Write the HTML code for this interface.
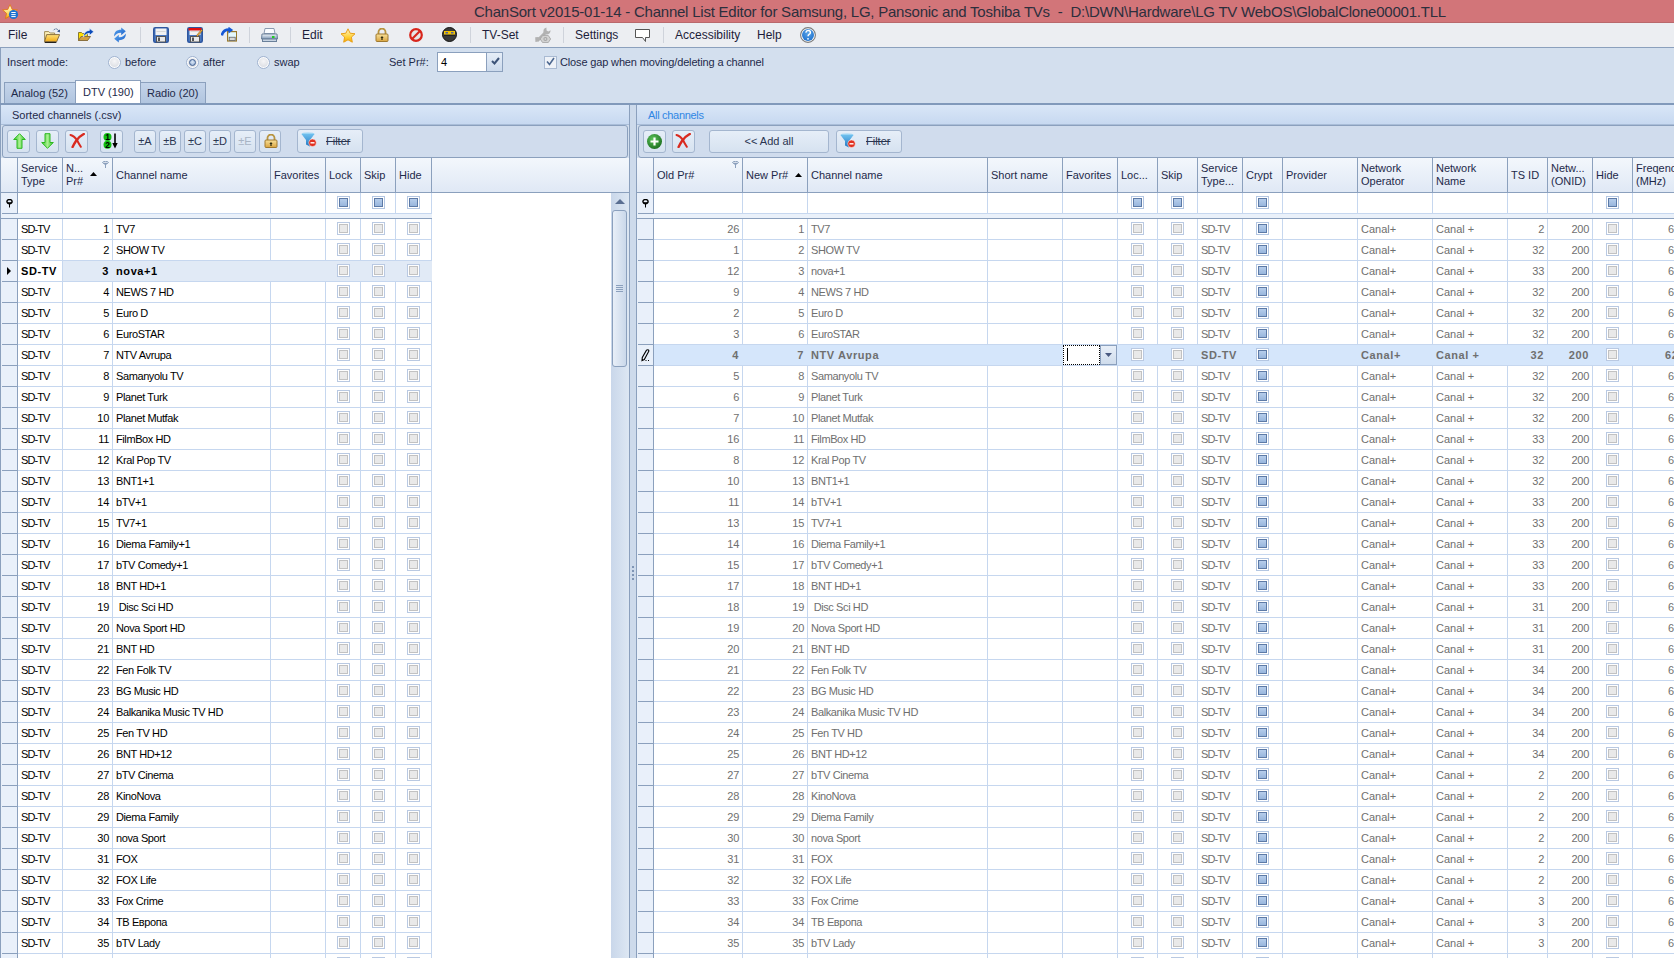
<!DOCTYPE html>
<html><head><meta charset="utf-8"><title>ChanSort</title>
<style>
html,body{margin:0;padding:0;width:1674px;height:958px;overflow:hidden;background:#d3dfee;font-family:"Liberation Sans", sans-serif;}
div,svg{position:absolute;}
div div, div svg{position:absolute;}
</style></head><body>
<div style="left:0px;top:0px;width:1674px;height:23px;background:#d27579"></div>
<div style="left:474px;top:1px;height:22px;line-height:22px;font-size:15px;letter-spacing:-0.225px;color:#2c2f3d;white-space:nowrap">ChanSort v2015-01-14 - Channel List Editor for Samsung, LG, Pansonic and Toshiba TVs&nbsp; -&nbsp; D:\DWN\Hardware\LG TV WebOS\GlobalClone00001.TLL</div>
<div style="left:0px;top:22px;width:1674px;height:1px;background:#b9686c"></div>
<svg style="left:2px;top:4px" width="17" height="16" viewBox="0 0 17 16"><defs><linearGradient id="gTs" x1="0" y1="0" x2="0" y2="1"><stop offset="0" stop-color="#fffef0"/><stop offset=".55" stop-color="#ffe070"/><stop offset="1" stop-color="#f0a000"/></linearGradient></defs>
<path d="M8 0.6 L10.2 5.4 15.4 5.9 11.5 9.4 12.6 14.6 8 12 3.4 14.6 4.5 9.4 0.6 5.9 5.8 5.4Z" fill="url(#gTs)" stroke="#e07818" stroke-width=".9"/>
<circle cx="11.5" cy="10.5" r="4.6" fill="#1c72d0"/><path d="M9.3 8.5h4.4M9.3 10.6h4.4M9.3 12.6h4.4" stroke="#fff" stroke-width="1"/></svg>
<div style="left:0px;top:23px;width:1674px;height:24px;background:#eceef2"></div>
<div style="left:8px;top:23px;height:24px;line-height:24px;font-size:12px;color:#1d1d3a;white-space:nowrap">File</div>
<div style="left:302px;top:23px;height:24px;line-height:24px;font-size:12px;color:#1d1d3a;white-space:nowrap">Edit</div>
<div style="left:482px;top:23px;height:24px;line-height:24px;font-size:12px;color:#1d1d3a;white-space:nowrap">TV-Set</div>
<div style="left:575px;top:23px;height:24px;line-height:24px;font-size:12px;color:#1d1d3a;white-space:nowrap">Settings</div>
<div style="left:675px;top:23px;height:24px;line-height:24px;font-size:12px;color:#1d1d3a;white-space:nowrap">Accessibility</div>
<div style="left:757px;top:23px;height:24px;line-height:24px;font-size:12px;color:#1d1d3a;white-space:nowrap">Help</div>
<div style="left:140px;top:27px;width:1px;height:16px;background:#cfd3db"></div>
<div style="left:249px;top:27px;width:1px;height:16px;background:#cfd3db"></div>
<div style="left:290px;top:27px;width:1px;height:16px;background:#cfd3db"></div>
<div style="left:470px;top:27px;width:1px;height:16px;background:#cfd3db"></div>
<div style="left:563px;top:27px;width:1px;height:16px;background:#cfd3db"></div>
<div style="left:663px;top:27px;width:1px;height:16px;background:#cfd3db"></div>
<div style="left:0px;top:47px;width:1674px;height:911px;background:#d3dfee"></div>
<div style="left:0px;top:47px;width:1674px;height:1px;background:#8ba0bd"></div>
<div style="left:0px;top:47px;width:1px;height:911px;background:#8ba0bd"></div>
<div style="left:7px;top:55px;line-height:14px;font-size:11px;color:#1e2a4a;white-space:nowrap;">Insert mode:</div>
<div style="left:108px;top:56px;width:13px;height:13px;box-sizing:border-box;border-radius:50%;border:1px solid #9fb2cf;background:#fbfcfd;padding:2px"><div style="left:1px;top:1px;width:9px;height:9px;border-radius:50%;background:radial-gradient(circle at 50% 35%,#f6f6f8,#d6d9df)"></div></div>
<div style="left:125px;top:55px;line-height:14px;font-size:11px;color:#1e2a4a;white-space:nowrap;">before</div>
<div style="left:186px;top:56px;width:13px;height:13px;box-sizing:border-box;border-radius:50%;border:1px solid #9fb2cf;background:#fbfcfd;padding:2px"><div style="left:1px;top:1px;width:9px;height:9px;border-radius:50%;background:radial-gradient(circle at 50% 35%,#f6f6f8,#d6d9df)"><div style="left:1px;top:1px;width:5px;height:5px;border-radius:50%;background:radial-gradient(circle at 50% 40%,#dce8f6,#8eaad2);border:1px solid #3f5e90"></div></div></div>
<div style="left:203px;top:55px;line-height:14px;font-size:11px;color:#1e2a4a;white-space:nowrap;">after</div>
<div style="left:257px;top:56px;width:13px;height:13px;box-sizing:border-box;border-radius:50%;border:1px solid #9fb2cf;background:#fbfcfd;padding:2px"><div style="left:1px;top:1px;width:9px;height:9px;border-radius:50%;background:radial-gradient(circle at 50% 35%,#f6f6f8,#d6d9df)"></div></div>
<div style="left:274px;top:55px;line-height:14px;font-size:11px;color:#1e2a4a;white-space:nowrap;">swap</div>
<div style="left:389px;top:55px;line-height:14px;font-size:11px;color:#1e2a4a;white-space:nowrap;">Set Pr#:</div>
<div style="left:437px;top:52px;width:49px;height:18px;background:#fff;border:1px solid #8ba0bd;border-right:none"></div>
<div style="left:441px;top:55px;line-height:14px;font-size:11px;color:#000;white-space:nowrap;">4</div>
<div style="left:486px;top:52px;width:15px;height:18px;background:linear-gradient(#e6eef8,#ccdaec);border:1px solid #8ba0bd"></div>
<svg style="left:491px;top:57px" width="9" height="8" viewBox="0 0 9 8"><path d="M1 4 L3.5 6.5 8 1" stroke="#3d5479" stroke-width="2" fill="none"/></svg>
<div style="left:544px;top:56px;width:11px;height:11px;background:#eef2f8;border:1px solid #a9bad2"></div>
<svg style="left:546px;top:57px" width="9" height="9" viewBox="0 0 9 9"><path d="M1 4.5 L3.5 7.5 8 1" stroke="#4d6890" stroke-width="1.6" fill="none"/></svg>
<div style="left:560px;top:55px;line-height:14px;font-size:11px;color:#1e2a4a;white-space:nowrap;letter-spacing:-0.15px">Close gap when moving/deleting a channel</div>
<div style="left:4px;top:82px;width:70px;height:21px;background:linear-gradient(#c4d4ea,#b1c5df);border:1px solid #8ba0bd;border-bottom:none;box-sizing:border-box;width:72px"></div>
<div style="left:140px;top:82px;width:66px;height:21px;background:linear-gradient(#c4d4ea,#b1c5df);border:1px solid #8ba0bd;border-bottom:none;box-sizing:border-box"></div>
<div style="left:75px;top:80px;width:66px;height:23px;background:#fff;border:1px solid #8ba0bd;border-bottom:none;box-sizing:border-box"></div>
<div style="left:11px;top:86px;line-height:14px;font-size:11px;color:#1e2a4a;white-space:nowrap;">Analog (52)</div>
<div style="left:83px;top:85px;line-height:14px;font-size:11px;color:#1e2a4a;white-space:nowrap;">DTV (190)</div>
<div style="left:147px;top:86px;line-height:14px;font-size:11px;color:#1e2a4a;white-space:nowrap;">Radio (20)</div>
<div style="left:0px;top:103px;width:1674px;height:2px;background:#8199ba"></div>
<div style="left:1px;top:105px;width:628px;height:20px;background:linear-gradient(#d9e6f7,#c6d8f0)"></div>
<div style="left:1px;top:124px;width:628px;height:1px;background:#a9bdd8"></div>
<div style="left:12px;top:108px;line-height:14px;font-size:11px;color:#1e2a4a;white-space:nowrap;">Sorted channels (.csv)</div>
<div style="left:2px;top:125px;width:626px;height:33px;background:#d0dced;border:1px solid #8ba0bd;border-radius:3px;box-sizing:border-box"></div>
<div style="left:637px;top:105px;width:1037px;height:20px;background:linear-gradient(#d9e6f7,#c6d8f0)"></div>
<div style="left:637px;top:124px;width:1037px;height:1px;background:#a9bdd8"></div>
<div style="left:648px;top:108px;line-height:14px;font-size:11px;color:#2f86e4;white-space:nowrap;letter-spacing:-0.3px">All channels</div>
<div style="left:638px;top:125px;width:1047px;height:33px;background:#d0dced;border:1px solid #8ba0bd;border-radius:3px;box-sizing:border-box"></div>
<div style="left:7px;top:130px;width:23px;height:23px;box-sizing:border-box;border:1px solid #a4b6cf;border-radius:3px;background:linear-gradient(#e6eef8,#d6e2f0)"></div>
<div style="left:36px;top:130px;width:23px;height:23px;box-sizing:border-box;border:1px solid #a4b6cf;border-radius:3px;background:linear-gradient(#e6eef8,#d6e2f0)"></div>
<div style="left:65px;top:130px;width:23px;height:23px;box-sizing:border-box;border:1px solid #a4b6cf;border-radius:3px;background:linear-gradient(#e6eef8,#d6e2f0)"></div>
<div style="left:100px;top:130px;width:23px;height:23px;box-sizing:border-box;border:1px solid #a4b6cf;border-radius:3px;background:linear-gradient(#e6eef8,#d6e2f0)"></div>
<div style="left:134px;top:130px;width:22px;height:23px;box-sizing:border-box;border:1px solid #a4b6cf;border-radius:3px;background:linear-gradient(#e6eef8,#d6e2f0)"><div style="left:0;top:0;width:20px;line-height:21px;text-align:center;font-size:11px;color:#2a3550">±A</div></div>
<div style="left:159px;top:130px;width:22px;height:23px;box-sizing:border-box;border:1px solid #a4b6cf;border-radius:3px;background:linear-gradient(#e6eef8,#d6e2f0)"><div style="left:0;top:0;width:20px;line-height:21px;text-align:center;font-size:11px;color:#2a3550">±B</div></div>
<div style="left:184px;top:130px;width:22px;height:23px;box-sizing:border-box;border:1px solid #a4b6cf;border-radius:3px;background:linear-gradient(#e6eef8,#d6e2f0)"><div style="left:0;top:0;width:20px;line-height:21px;text-align:center;font-size:11px;color:#2a3550">±C</div></div>
<div style="left:209px;top:130px;width:22px;height:23px;box-sizing:border-box;border:1px solid #a4b6cf;border-radius:3px;background:linear-gradient(#e6eef8,#d6e2f0)"><div style="left:0;top:0;width:20px;line-height:21px;text-align:center;font-size:11px;color:#2a3550">±D</div></div>
<div style="left:234px;top:130px;width:22px;height:23px;box-sizing:border-box;border:1px solid #a4b6cf;border-radius:3px;background:linear-gradient(#e6eef8,#d6e2f0)"><div style="left:0;top:0;width:20px;line-height:21px;text-align:center;font-size:11px;color:#a8b4c4">±E</div></div>
<div style="left:259px;top:130px;width:22px;height:23px;box-sizing:border-box;border:1px solid #a4b6cf;border-radius:3px;background:linear-gradient(#e6eef8,#d6e2f0)"></div>
<div style="left:297px;top:129px;width:66px;height:24px;box-sizing:border-box;border:1px solid #a4b6cf;border-radius:3px;background:linear-gradient(#e6eef8,#d6e2f0)"><div style="left:28px;top:1px;line-height:21px;font-size:11px;color:#2a3550;text-decoration:line-through">Filter</div></div>
<div style="left:643px;top:130px;width:23px;height:23px;box-sizing:border-box;border:1px solid #a4b6cf;border-radius:3px;background:linear-gradient(#e6eef8,#d6e2f0)"></div>
<div style="left:672px;top:130px;width:23px;height:23px;box-sizing:border-box;border:1px solid #a4b6cf;border-radius:3px;background:linear-gradient(#e6eef8,#d6e2f0)"></div>
<div style="left:709px;top:130px;width:120px;height:23px;box-sizing:border-box;border:1px solid #a4b6cf;border-radius:3px;background:linear-gradient(#e6eef8,#d6e2f0)"><div style="left:0;top:0;width:118px;line-height:21px;text-align:center;font-size:11px;color:#2a3550">&lt;&lt; Add all</div></div>
<div style="left:836px;top:130px;width:66px;height:23px;box-sizing:border-box;border:1px solid #a4b6cf;border-radius:3px;background:linear-gradient(#e6eef8,#d6e2f0)"><div style="left:29px;top:0;line-height:21px;font-size:11px;color:#2a3550;text-decoration:line-through">Filter</div></div>
<div style="left:629px;top:105px;width:8px;height:853px;background:#cddaeb"></div>
<div style="left:629px;top:105px;width:1px;height:853px;background:#8ba0bd"></div>
<div style="left:636px;top:105px;width:1px;height:853px;background:#8ba0bd"></div>
<div style="left:632px;top:566px;width:2px;height:2px;background:#7f95b5"></div>
<div style="left:632px;top:570px;width:2px;height:2px;background:#7f95b5"></div>
<div style="left:632px;top:574px;width:2px;height:2px;background:#7f95b5"></div>
<div style="left:632px;top:578px;width:2px;height:2px;background:#7f95b5"></div>
<div style="left:1px;top:158px;width:628px;height:35px;background:linear-gradient(#f3f7fc,#dfe8f5)"></div>
<div style="left:1px;top:192px;width:628px;height:1px;background:#8ba0bd"></div>
<div style="left:1px;top:193px;width:610px;height:765px;background:#fff"></div>
<div style="left:1px;top:193px;width:16px;height:765px;background:#e9f0fa"></div>
<div style="left:18px;top:213px;width:414px;height:1px;background:#c6d7ef"></div>
<div style="left:1px;top:214px;width:431px;height:4px;background:#eaf1fa"></div>
<div style="left:2px;top:213px;width:15px;height:1px;background:#8ba0bd"></div>
<div style="left:1px;top:218px;width:431px;height:1px;background:#8ba0bd"></div>
<div style="left:2px;top:239px;width:15px;height:1px;background:#8ba0bd"></div>
<div style="left:18px;top:239px;width:414px;height:1px;background:#c6d7ef"></div>
<div style="left:2px;top:260px;width:15px;height:1px;background:#8ba0bd"></div>
<div style="left:18px;top:260px;width:414px;height:1px;background:#c6d7ef"></div>
<div style="left:2px;top:281px;width:15px;height:1px;background:#8ba0bd"></div>
<div style="left:18px;top:281px;width:414px;height:1px;background:#c6d7ef"></div>
<div style="left:2px;top:302px;width:15px;height:1px;background:#8ba0bd"></div>
<div style="left:18px;top:302px;width:414px;height:1px;background:#c6d7ef"></div>
<div style="left:2px;top:323px;width:15px;height:1px;background:#8ba0bd"></div>
<div style="left:18px;top:323px;width:414px;height:1px;background:#c6d7ef"></div>
<div style="left:2px;top:344px;width:15px;height:1px;background:#8ba0bd"></div>
<div style="left:18px;top:344px;width:414px;height:1px;background:#c6d7ef"></div>
<div style="left:2px;top:365px;width:15px;height:1px;background:#8ba0bd"></div>
<div style="left:18px;top:365px;width:414px;height:1px;background:#c6d7ef"></div>
<div style="left:2px;top:386px;width:15px;height:1px;background:#8ba0bd"></div>
<div style="left:18px;top:386px;width:414px;height:1px;background:#c6d7ef"></div>
<div style="left:2px;top:407px;width:15px;height:1px;background:#8ba0bd"></div>
<div style="left:18px;top:407px;width:414px;height:1px;background:#c6d7ef"></div>
<div style="left:2px;top:428px;width:15px;height:1px;background:#8ba0bd"></div>
<div style="left:18px;top:428px;width:414px;height:1px;background:#c6d7ef"></div>
<div style="left:2px;top:449px;width:15px;height:1px;background:#8ba0bd"></div>
<div style="left:18px;top:449px;width:414px;height:1px;background:#c6d7ef"></div>
<div style="left:2px;top:470px;width:15px;height:1px;background:#8ba0bd"></div>
<div style="left:18px;top:470px;width:414px;height:1px;background:#c6d7ef"></div>
<div style="left:2px;top:491px;width:15px;height:1px;background:#8ba0bd"></div>
<div style="left:18px;top:491px;width:414px;height:1px;background:#c6d7ef"></div>
<div style="left:2px;top:512px;width:15px;height:1px;background:#8ba0bd"></div>
<div style="left:18px;top:512px;width:414px;height:1px;background:#c6d7ef"></div>
<div style="left:2px;top:533px;width:15px;height:1px;background:#8ba0bd"></div>
<div style="left:18px;top:533px;width:414px;height:1px;background:#c6d7ef"></div>
<div style="left:2px;top:554px;width:15px;height:1px;background:#8ba0bd"></div>
<div style="left:18px;top:554px;width:414px;height:1px;background:#c6d7ef"></div>
<div style="left:2px;top:575px;width:15px;height:1px;background:#8ba0bd"></div>
<div style="left:18px;top:575px;width:414px;height:1px;background:#c6d7ef"></div>
<div style="left:2px;top:596px;width:15px;height:1px;background:#8ba0bd"></div>
<div style="left:18px;top:596px;width:414px;height:1px;background:#c6d7ef"></div>
<div style="left:2px;top:617px;width:15px;height:1px;background:#8ba0bd"></div>
<div style="left:18px;top:617px;width:414px;height:1px;background:#c6d7ef"></div>
<div style="left:2px;top:638px;width:15px;height:1px;background:#8ba0bd"></div>
<div style="left:18px;top:638px;width:414px;height:1px;background:#c6d7ef"></div>
<div style="left:2px;top:659px;width:15px;height:1px;background:#8ba0bd"></div>
<div style="left:18px;top:659px;width:414px;height:1px;background:#c6d7ef"></div>
<div style="left:2px;top:680px;width:15px;height:1px;background:#8ba0bd"></div>
<div style="left:18px;top:680px;width:414px;height:1px;background:#c6d7ef"></div>
<div style="left:2px;top:701px;width:15px;height:1px;background:#8ba0bd"></div>
<div style="left:18px;top:701px;width:414px;height:1px;background:#c6d7ef"></div>
<div style="left:2px;top:722px;width:15px;height:1px;background:#8ba0bd"></div>
<div style="left:18px;top:722px;width:414px;height:1px;background:#c6d7ef"></div>
<div style="left:2px;top:743px;width:15px;height:1px;background:#8ba0bd"></div>
<div style="left:18px;top:743px;width:414px;height:1px;background:#c6d7ef"></div>
<div style="left:2px;top:764px;width:15px;height:1px;background:#8ba0bd"></div>
<div style="left:18px;top:764px;width:414px;height:1px;background:#c6d7ef"></div>
<div style="left:2px;top:785px;width:15px;height:1px;background:#8ba0bd"></div>
<div style="left:18px;top:785px;width:414px;height:1px;background:#c6d7ef"></div>
<div style="left:2px;top:806px;width:15px;height:1px;background:#8ba0bd"></div>
<div style="left:18px;top:806px;width:414px;height:1px;background:#c6d7ef"></div>
<div style="left:2px;top:827px;width:15px;height:1px;background:#8ba0bd"></div>
<div style="left:18px;top:827px;width:414px;height:1px;background:#c6d7ef"></div>
<div style="left:2px;top:848px;width:15px;height:1px;background:#8ba0bd"></div>
<div style="left:18px;top:848px;width:414px;height:1px;background:#c6d7ef"></div>
<div style="left:2px;top:869px;width:15px;height:1px;background:#8ba0bd"></div>
<div style="left:18px;top:869px;width:414px;height:1px;background:#c6d7ef"></div>
<div style="left:2px;top:890px;width:15px;height:1px;background:#8ba0bd"></div>
<div style="left:18px;top:890px;width:414px;height:1px;background:#c6d7ef"></div>
<div style="left:2px;top:911px;width:15px;height:1px;background:#8ba0bd"></div>
<div style="left:18px;top:911px;width:414px;height:1px;background:#c6d7ef"></div>
<div style="left:2px;top:932px;width:15px;height:1px;background:#8ba0bd"></div>
<div style="left:18px;top:932px;width:414px;height:1px;background:#c6d7ef"></div>
<div style="left:2px;top:953px;width:15px;height:1px;background:#8ba0bd"></div>
<div style="left:18px;top:953px;width:414px;height:1px;background:#c6d7ef"></div>
<div style="left:2px;top:974px;width:15px;height:1px;background:#8ba0bd"></div>
<div style="left:18px;top:974px;width:414px;height:1px;background:#c6d7ef"></div>
<div style="left:17px;top:158px;width:1px;height:34px;background:#8ba0bd"></div>
<div style="left:17px;top:193px;width:1px;height:21px;background:#8ba0bd"></div>
<div style="left:17px;top:218px;width:1px;height:740px;background:#8ba0bd"></div>
<div style="left:62px;top:158px;width:1px;height:34px;background:#8ba0bd"></div>
<div style="left:62px;top:193px;width:1px;height:20px;background:#c6d7ef"></div>
<div style="left:62px;top:219px;width:1px;height:739px;background:#c6d7ef"></div>
<div style="left:112px;top:158px;width:1px;height:34px;background:#8ba0bd"></div>
<div style="left:112px;top:193px;width:1px;height:20px;background:#c6d7ef"></div>
<div style="left:112px;top:219px;width:1px;height:739px;background:#c6d7ef"></div>
<div style="left:270px;top:158px;width:1px;height:34px;background:#8ba0bd"></div>
<div style="left:270px;top:193px;width:1px;height:20px;background:#c6d7ef"></div>
<div style="left:270px;top:219px;width:1px;height:739px;background:#c6d7ef"></div>
<div style="left:325px;top:158px;width:1px;height:34px;background:#8ba0bd"></div>
<div style="left:325px;top:193px;width:1px;height:20px;background:#c6d7ef"></div>
<div style="left:325px;top:219px;width:1px;height:739px;background:#c6d7ef"></div>
<div style="left:360px;top:158px;width:1px;height:34px;background:#8ba0bd"></div>
<div style="left:360px;top:193px;width:1px;height:20px;background:#c6d7ef"></div>
<div style="left:360px;top:219px;width:1px;height:739px;background:#c6d7ef"></div>
<div style="left:395px;top:158px;width:1px;height:34px;background:#8ba0bd"></div>
<div style="left:395px;top:193px;width:1px;height:20px;background:#c6d7ef"></div>
<div style="left:395px;top:219px;width:1px;height:739px;background:#c6d7ef"></div>
<div style="left:431px;top:158px;width:1px;height:34px;background:#8ba0bd"></div>
<div style="left:431px;top:193px;width:1px;height:20px;background:#c6d7ef"></div>
<div style="left:431px;top:219px;width:1px;height:739px;background:#c6d7ef"></div>
<div style="left:1px;top:214px;width:431px;height:4px;background:#eaf1fa"></div>
<div style="left:21px;top:162px;line-height:13px;font-size:11px;color:#1e2a4a;white-space:nowrap">Service<br>Type</div>
<div style="left:66px;top:162px;line-height:13px;font-size:11px;color:#1e2a4a;white-space:nowrap">N...<br>Pr#</div>
<div style="left:116px;top:168px;line-height:14px;font-size:11px;color:#1e2a4a;white-space:nowrap">Channel name</div>
<div style="left:274px;top:168px;line-height:14px;font-size:11px;color:#1e2a4a;white-space:nowrap">Favorites</div>
<div style="left:329px;top:168px;line-height:14px;font-size:11px;color:#1e2a4a;white-space:nowrap">Lock</div>
<div style="left:364px;top:168px;line-height:14px;font-size:11px;color:#1e2a4a;white-space:nowrap">Skip</div>
<div style="left:399px;top:168px;line-height:14px;font-size:11px;color:#1e2a4a;white-space:nowrap">Hide</div>
<svg style="left:90px;top:172px" width="7" height="4" viewBox="0 0 7 4"><path d="M3.5 0 L7 4 H0Z" fill="#000"/></svg>
<svg style="left:102px;top:161px" width="7" height="7" viewBox="0 0 7 7"><ellipse cx="3.5" cy="1.5" rx="3" ry="1.1" fill="none" stroke="#8ba0bd" stroke-width="1"/><path d="M0.7 1.8 L3 4 V7 H4 V4 L6.3 1.8" fill="#8ba0bd"/></svg>
<div style="left:63px;top:261px;width:369px;height:20px;background:#e1eaf6"></div>
<svg style="left:6px;top:267px" width="5" height="8" viewBox="0 0 5 8"><path d="M1 0 L5 4 L1 8Z" fill="#000"/></svg>
<div style="left:337px;top:196px;width:13px;height:13px;box-sizing:border-box;border:1px solid #b3c6e2;background:#fff"><div style="left:1px;top:1px;width:9px;height:9px;box-sizing:border-box;border:1px solid #5d7aa6;background:linear-gradient(#b6cdeb,#98b6dd)"></div></div>
<div style="left:372px;top:196px;width:13px;height:13px;box-sizing:border-box;border:1px solid #b3c6e2;background:#fff"><div style="left:1px;top:1px;width:9px;height:9px;box-sizing:border-box;border:1px solid #5d7aa6;background:linear-gradient(#b6cdeb,#98b6dd)"></div></div>
<div style="left:407px;top:196px;width:13px;height:13px;box-sizing:border-box;border:1px solid #b3c6e2;background:#fff"><div style="left:1px;top:1px;width:9px;height:9px;box-sizing:border-box;border:1px solid #5d7aa6;background:linear-gradient(#b6cdeb,#98b6dd)"></div></div>
<div style="left:21px;top:219px;line-height:20px;font-size:11px;color:#000;white-space:pre;letter-spacing:-0.9px;">SD-TV</div>
<div style="left:62px;top:219px;width:47px;text-align:right;line-height:20px;font-size:11px;color:#000;white-space:pre;letter-spacing:-0.3px;">1</div>
<div style="left:116px;top:219px;line-height:20px;font-size:11px;color:#000;white-space:pre;letter-spacing:-0.4px;">TV7</div>
<div style="left:337px;top:222px;width:13px;height:13px;box-sizing:border-box;border:1px solid #b9c9e2;background:#fff"><div style="left:1px;top:1px;width:9px;height:9px;box-sizing:border-box;border:1px solid #c2c2c2;background:#e9e9e9"></div></div>
<div style="left:372px;top:222px;width:13px;height:13px;box-sizing:border-box;border:1px solid #b9c9e2;background:#fff"><div style="left:1px;top:1px;width:9px;height:9px;box-sizing:border-box;border:1px solid #c2c2c2;background:#e9e9e9"></div></div>
<div style="left:407px;top:222px;width:13px;height:13px;box-sizing:border-box;border:1px solid #b9c9e2;background:#fff"><div style="left:1px;top:1px;width:9px;height:9px;box-sizing:border-box;border:1px solid #c2c2c2;background:#e9e9e9"></div></div>
<div style="left:21px;top:240px;line-height:20px;font-size:11px;color:#000;white-space:pre;letter-spacing:-0.9px;">SD-TV</div>
<div style="left:62px;top:240px;width:47px;text-align:right;line-height:20px;font-size:11px;color:#000;white-space:pre;letter-spacing:-0.3px;">2</div>
<div style="left:116px;top:240px;line-height:20px;font-size:11px;color:#000;white-space:pre;letter-spacing:-0.4px;">SHOW TV</div>
<div style="left:337px;top:243px;width:13px;height:13px;box-sizing:border-box;border:1px solid #b9c9e2;background:#fff"><div style="left:1px;top:1px;width:9px;height:9px;box-sizing:border-box;border:1px solid #c2c2c2;background:#e9e9e9"></div></div>
<div style="left:372px;top:243px;width:13px;height:13px;box-sizing:border-box;border:1px solid #b9c9e2;background:#fff"><div style="left:1px;top:1px;width:9px;height:9px;box-sizing:border-box;border:1px solid #c2c2c2;background:#e9e9e9"></div></div>
<div style="left:407px;top:243px;width:13px;height:13px;box-sizing:border-box;border:1px solid #b9c9e2;background:#fff"><div style="left:1px;top:1px;width:9px;height:9px;box-sizing:border-box;border:1px solid #c2c2c2;background:#e9e9e9"></div></div>
<div style="left:21px;top:261px;line-height:20px;font-size:11px;color:#000;white-space:pre;letter-spacing:0.6px;font-weight:bold;">SD-TV</div>
<div style="left:62px;top:261px;width:47px;text-align:right;line-height:20px;font-size:11px;color:#000;white-space:pre;letter-spacing:0.6px;font-weight:bold;">3</div>
<div style="left:116px;top:261px;line-height:20px;font-size:11px;color:#000;white-space:pre;letter-spacing:0.6px;font-weight:bold;">nova+1</div>
<div style="left:337px;top:264px;width:13px;height:13px;box-sizing:border-box;border:1px solid #b9c9e2;background:#fff"><div style="left:1px;top:1px;width:9px;height:9px;box-sizing:border-box;border:1px solid #c2c2c2;background:#e9e9e9"></div></div>
<div style="left:372px;top:264px;width:13px;height:13px;box-sizing:border-box;border:1px solid #b9c9e2;background:#fff"><div style="left:1px;top:1px;width:9px;height:9px;box-sizing:border-box;border:1px solid #c2c2c2;background:#e9e9e9"></div></div>
<div style="left:407px;top:264px;width:13px;height:13px;box-sizing:border-box;border:1px solid #b9c9e2;background:#fff"><div style="left:1px;top:1px;width:9px;height:9px;box-sizing:border-box;border:1px solid #c2c2c2;background:#e9e9e9"></div></div>
<div style="left:21px;top:282px;line-height:20px;font-size:11px;color:#000;white-space:pre;letter-spacing:-0.9px;">SD-TV</div>
<div style="left:62px;top:282px;width:47px;text-align:right;line-height:20px;font-size:11px;color:#000;white-space:pre;letter-spacing:-0.3px;">4</div>
<div style="left:116px;top:282px;line-height:20px;font-size:11px;color:#000;white-space:pre;letter-spacing:-0.4px;">NEWS 7 HD</div>
<div style="left:337px;top:285px;width:13px;height:13px;box-sizing:border-box;border:1px solid #b9c9e2;background:#fff"><div style="left:1px;top:1px;width:9px;height:9px;box-sizing:border-box;border:1px solid #c2c2c2;background:#e9e9e9"></div></div>
<div style="left:372px;top:285px;width:13px;height:13px;box-sizing:border-box;border:1px solid #b9c9e2;background:#fff"><div style="left:1px;top:1px;width:9px;height:9px;box-sizing:border-box;border:1px solid #c2c2c2;background:#e9e9e9"></div></div>
<div style="left:407px;top:285px;width:13px;height:13px;box-sizing:border-box;border:1px solid #b9c9e2;background:#fff"><div style="left:1px;top:1px;width:9px;height:9px;box-sizing:border-box;border:1px solid #c2c2c2;background:#e9e9e9"></div></div>
<div style="left:21px;top:303px;line-height:20px;font-size:11px;color:#000;white-space:pre;letter-spacing:-0.9px;">SD-TV</div>
<div style="left:62px;top:303px;width:47px;text-align:right;line-height:20px;font-size:11px;color:#000;white-space:pre;letter-spacing:-0.3px;">5</div>
<div style="left:116px;top:303px;line-height:20px;font-size:11px;color:#000;white-space:pre;letter-spacing:-0.4px;">Euro D</div>
<div style="left:337px;top:306px;width:13px;height:13px;box-sizing:border-box;border:1px solid #b9c9e2;background:#fff"><div style="left:1px;top:1px;width:9px;height:9px;box-sizing:border-box;border:1px solid #c2c2c2;background:#e9e9e9"></div></div>
<div style="left:372px;top:306px;width:13px;height:13px;box-sizing:border-box;border:1px solid #b9c9e2;background:#fff"><div style="left:1px;top:1px;width:9px;height:9px;box-sizing:border-box;border:1px solid #c2c2c2;background:#e9e9e9"></div></div>
<div style="left:407px;top:306px;width:13px;height:13px;box-sizing:border-box;border:1px solid #b9c9e2;background:#fff"><div style="left:1px;top:1px;width:9px;height:9px;box-sizing:border-box;border:1px solid #c2c2c2;background:#e9e9e9"></div></div>
<div style="left:21px;top:324px;line-height:20px;font-size:11px;color:#000;white-space:pre;letter-spacing:-0.9px;">SD-TV</div>
<div style="left:62px;top:324px;width:47px;text-align:right;line-height:20px;font-size:11px;color:#000;white-space:pre;letter-spacing:-0.3px;">6</div>
<div style="left:116px;top:324px;line-height:20px;font-size:11px;color:#000;white-space:pre;letter-spacing:-0.4px;">EuroSTAR</div>
<div style="left:337px;top:327px;width:13px;height:13px;box-sizing:border-box;border:1px solid #b9c9e2;background:#fff"><div style="left:1px;top:1px;width:9px;height:9px;box-sizing:border-box;border:1px solid #c2c2c2;background:#e9e9e9"></div></div>
<div style="left:372px;top:327px;width:13px;height:13px;box-sizing:border-box;border:1px solid #b9c9e2;background:#fff"><div style="left:1px;top:1px;width:9px;height:9px;box-sizing:border-box;border:1px solid #c2c2c2;background:#e9e9e9"></div></div>
<div style="left:407px;top:327px;width:13px;height:13px;box-sizing:border-box;border:1px solid #b9c9e2;background:#fff"><div style="left:1px;top:1px;width:9px;height:9px;box-sizing:border-box;border:1px solid #c2c2c2;background:#e9e9e9"></div></div>
<div style="left:21px;top:345px;line-height:20px;font-size:11px;color:#000;white-space:pre;letter-spacing:-0.9px;">SD-TV</div>
<div style="left:62px;top:345px;width:47px;text-align:right;line-height:20px;font-size:11px;color:#000;white-space:pre;letter-spacing:-0.3px;">7</div>
<div style="left:116px;top:345px;line-height:20px;font-size:11px;color:#000;white-space:pre;letter-spacing:-0.4px;">NTV Avrupa</div>
<div style="left:337px;top:348px;width:13px;height:13px;box-sizing:border-box;border:1px solid #b9c9e2;background:#fff"><div style="left:1px;top:1px;width:9px;height:9px;box-sizing:border-box;border:1px solid #c2c2c2;background:#e9e9e9"></div></div>
<div style="left:372px;top:348px;width:13px;height:13px;box-sizing:border-box;border:1px solid #b9c9e2;background:#fff"><div style="left:1px;top:1px;width:9px;height:9px;box-sizing:border-box;border:1px solid #c2c2c2;background:#e9e9e9"></div></div>
<div style="left:407px;top:348px;width:13px;height:13px;box-sizing:border-box;border:1px solid #b9c9e2;background:#fff"><div style="left:1px;top:1px;width:9px;height:9px;box-sizing:border-box;border:1px solid #c2c2c2;background:#e9e9e9"></div></div>
<div style="left:21px;top:366px;line-height:20px;font-size:11px;color:#000;white-space:pre;letter-spacing:-0.9px;">SD-TV</div>
<div style="left:62px;top:366px;width:47px;text-align:right;line-height:20px;font-size:11px;color:#000;white-space:pre;letter-spacing:-0.3px;">8</div>
<div style="left:116px;top:366px;line-height:20px;font-size:11px;color:#000;white-space:pre;letter-spacing:-0.4px;">Samanyolu TV</div>
<div style="left:337px;top:369px;width:13px;height:13px;box-sizing:border-box;border:1px solid #b9c9e2;background:#fff"><div style="left:1px;top:1px;width:9px;height:9px;box-sizing:border-box;border:1px solid #c2c2c2;background:#e9e9e9"></div></div>
<div style="left:372px;top:369px;width:13px;height:13px;box-sizing:border-box;border:1px solid #b9c9e2;background:#fff"><div style="left:1px;top:1px;width:9px;height:9px;box-sizing:border-box;border:1px solid #c2c2c2;background:#e9e9e9"></div></div>
<div style="left:407px;top:369px;width:13px;height:13px;box-sizing:border-box;border:1px solid #b9c9e2;background:#fff"><div style="left:1px;top:1px;width:9px;height:9px;box-sizing:border-box;border:1px solid #c2c2c2;background:#e9e9e9"></div></div>
<div style="left:21px;top:387px;line-height:20px;font-size:11px;color:#000;white-space:pre;letter-spacing:-0.9px;">SD-TV</div>
<div style="left:62px;top:387px;width:47px;text-align:right;line-height:20px;font-size:11px;color:#000;white-space:pre;letter-spacing:-0.3px;">9</div>
<div style="left:116px;top:387px;line-height:20px;font-size:11px;color:#000;white-space:pre;letter-spacing:-0.4px;">Planet Turk</div>
<div style="left:337px;top:390px;width:13px;height:13px;box-sizing:border-box;border:1px solid #b9c9e2;background:#fff"><div style="left:1px;top:1px;width:9px;height:9px;box-sizing:border-box;border:1px solid #c2c2c2;background:#e9e9e9"></div></div>
<div style="left:372px;top:390px;width:13px;height:13px;box-sizing:border-box;border:1px solid #b9c9e2;background:#fff"><div style="left:1px;top:1px;width:9px;height:9px;box-sizing:border-box;border:1px solid #c2c2c2;background:#e9e9e9"></div></div>
<div style="left:407px;top:390px;width:13px;height:13px;box-sizing:border-box;border:1px solid #b9c9e2;background:#fff"><div style="left:1px;top:1px;width:9px;height:9px;box-sizing:border-box;border:1px solid #c2c2c2;background:#e9e9e9"></div></div>
<div style="left:21px;top:408px;line-height:20px;font-size:11px;color:#000;white-space:pre;letter-spacing:-0.9px;">SD-TV</div>
<div style="left:62px;top:408px;width:47px;text-align:right;line-height:20px;font-size:11px;color:#000;white-space:pre;letter-spacing:-0.3px;">10</div>
<div style="left:116px;top:408px;line-height:20px;font-size:11px;color:#000;white-space:pre;letter-spacing:-0.4px;">Planet Mutfak</div>
<div style="left:337px;top:411px;width:13px;height:13px;box-sizing:border-box;border:1px solid #b9c9e2;background:#fff"><div style="left:1px;top:1px;width:9px;height:9px;box-sizing:border-box;border:1px solid #c2c2c2;background:#e9e9e9"></div></div>
<div style="left:372px;top:411px;width:13px;height:13px;box-sizing:border-box;border:1px solid #b9c9e2;background:#fff"><div style="left:1px;top:1px;width:9px;height:9px;box-sizing:border-box;border:1px solid #c2c2c2;background:#e9e9e9"></div></div>
<div style="left:407px;top:411px;width:13px;height:13px;box-sizing:border-box;border:1px solid #b9c9e2;background:#fff"><div style="left:1px;top:1px;width:9px;height:9px;box-sizing:border-box;border:1px solid #c2c2c2;background:#e9e9e9"></div></div>
<div style="left:21px;top:429px;line-height:20px;font-size:11px;color:#000;white-space:pre;letter-spacing:-0.9px;">SD-TV</div>
<div style="left:62px;top:429px;width:47px;text-align:right;line-height:20px;font-size:11px;color:#000;white-space:pre;letter-spacing:-0.3px;">11</div>
<div style="left:116px;top:429px;line-height:20px;font-size:11px;color:#000;white-space:pre;letter-spacing:-0.4px;">FilmBox HD</div>
<div style="left:337px;top:432px;width:13px;height:13px;box-sizing:border-box;border:1px solid #b9c9e2;background:#fff"><div style="left:1px;top:1px;width:9px;height:9px;box-sizing:border-box;border:1px solid #c2c2c2;background:#e9e9e9"></div></div>
<div style="left:372px;top:432px;width:13px;height:13px;box-sizing:border-box;border:1px solid #b9c9e2;background:#fff"><div style="left:1px;top:1px;width:9px;height:9px;box-sizing:border-box;border:1px solid #c2c2c2;background:#e9e9e9"></div></div>
<div style="left:407px;top:432px;width:13px;height:13px;box-sizing:border-box;border:1px solid #b9c9e2;background:#fff"><div style="left:1px;top:1px;width:9px;height:9px;box-sizing:border-box;border:1px solid #c2c2c2;background:#e9e9e9"></div></div>
<div style="left:21px;top:450px;line-height:20px;font-size:11px;color:#000;white-space:pre;letter-spacing:-0.9px;">SD-TV</div>
<div style="left:62px;top:450px;width:47px;text-align:right;line-height:20px;font-size:11px;color:#000;white-space:pre;letter-spacing:-0.3px;">12</div>
<div style="left:116px;top:450px;line-height:20px;font-size:11px;color:#000;white-space:pre;letter-spacing:-0.4px;">Kral Pop TV</div>
<div style="left:337px;top:453px;width:13px;height:13px;box-sizing:border-box;border:1px solid #b9c9e2;background:#fff"><div style="left:1px;top:1px;width:9px;height:9px;box-sizing:border-box;border:1px solid #c2c2c2;background:#e9e9e9"></div></div>
<div style="left:372px;top:453px;width:13px;height:13px;box-sizing:border-box;border:1px solid #b9c9e2;background:#fff"><div style="left:1px;top:1px;width:9px;height:9px;box-sizing:border-box;border:1px solid #c2c2c2;background:#e9e9e9"></div></div>
<div style="left:407px;top:453px;width:13px;height:13px;box-sizing:border-box;border:1px solid #b9c9e2;background:#fff"><div style="left:1px;top:1px;width:9px;height:9px;box-sizing:border-box;border:1px solid #c2c2c2;background:#e9e9e9"></div></div>
<div style="left:21px;top:471px;line-height:20px;font-size:11px;color:#000;white-space:pre;letter-spacing:-0.9px;">SD-TV</div>
<div style="left:62px;top:471px;width:47px;text-align:right;line-height:20px;font-size:11px;color:#000;white-space:pre;letter-spacing:-0.3px;">13</div>
<div style="left:116px;top:471px;line-height:20px;font-size:11px;color:#000;white-space:pre;letter-spacing:-0.4px;">BNT1+1</div>
<div style="left:337px;top:474px;width:13px;height:13px;box-sizing:border-box;border:1px solid #b9c9e2;background:#fff"><div style="left:1px;top:1px;width:9px;height:9px;box-sizing:border-box;border:1px solid #c2c2c2;background:#e9e9e9"></div></div>
<div style="left:372px;top:474px;width:13px;height:13px;box-sizing:border-box;border:1px solid #b9c9e2;background:#fff"><div style="left:1px;top:1px;width:9px;height:9px;box-sizing:border-box;border:1px solid #c2c2c2;background:#e9e9e9"></div></div>
<div style="left:407px;top:474px;width:13px;height:13px;box-sizing:border-box;border:1px solid #b9c9e2;background:#fff"><div style="left:1px;top:1px;width:9px;height:9px;box-sizing:border-box;border:1px solid #c2c2c2;background:#e9e9e9"></div></div>
<div style="left:21px;top:492px;line-height:20px;font-size:11px;color:#000;white-space:pre;letter-spacing:-0.9px;">SD-TV</div>
<div style="left:62px;top:492px;width:47px;text-align:right;line-height:20px;font-size:11px;color:#000;white-space:pre;letter-spacing:-0.3px;">14</div>
<div style="left:116px;top:492px;line-height:20px;font-size:11px;color:#000;white-space:pre;letter-spacing:-0.4px;">bTV+1</div>
<div style="left:337px;top:495px;width:13px;height:13px;box-sizing:border-box;border:1px solid #b9c9e2;background:#fff"><div style="left:1px;top:1px;width:9px;height:9px;box-sizing:border-box;border:1px solid #c2c2c2;background:#e9e9e9"></div></div>
<div style="left:372px;top:495px;width:13px;height:13px;box-sizing:border-box;border:1px solid #b9c9e2;background:#fff"><div style="left:1px;top:1px;width:9px;height:9px;box-sizing:border-box;border:1px solid #c2c2c2;background:#e9e9e9"></div></div>
<div style="left:407px;top:495px;width:13px;height:13px;box-sizing:border-box;border:1px solid #b9c9e2;background:#fff"><div style="left:1px;top:1px;width:9px;height:9px;box-sizing:border-box;border:1px solid #c2c2c2;background:#e9e9e9"></div></div>
<div style="left:21px;top:513px;line-height:20px;font-size:11px;color:#000;white-space:pre;letter-spacing:-0.9px;">SD-TV</div>
<div style="left:62px;top:513px;width:47px;text-align:right;line-height:20px;font-size:11px;color:#000;white-space:pre;letter-spacing:-0.3px;">15</div>
<div style="left:116px;top:513px;line-height:20px;font-size:11px;color:#000;white-space:pre;letter-spacing:-0.4px;">TV7+1</div>
<div style="left:337px;top:516px;width:13px;height:13px;box-sizing:border-box;border:1px solid #b9c9e2;background:#fff"><div style="left:1px;top:1px;width:9px;height:9px;box-sizing:border-box;border:1px solid #c2c2c2;background:#e9e9e9"></div></div>
<div style="left:372px;top:516px;width:13px;height:13px;box-sizing:border-box;border:1px solid #b9c9e2;background:#fff"><div style="left:1px;top:1px;width:9px;height:9px;box-sizing:border-box;border:1px solid #c2c2c2;background:#e9e9e9"></div></div>
<div style="left:407px;top:516px;width:13px;height:13px;box-sizing:border-box;border:1px solid #b9c9e2;background:#fff"><div style="left:1px;top:1px;width:9px;height:9px;box-sizing:border-box;border:1px solid #c2c2c2;background:#e9e9e9"></div></div>
<div style="left:21px;top:534px;line-height:20px;font-size:11px;color:#000;white-space:pre;letter-spacing:-0.9px;">SD-TV</div>
<div style="left:62px;top:534px;width:47px;text-align:right;line-height:20px;font-size:11px;color:#000;white-space:pre;letter-spacing:-0.3px;">16</div>
<div style="left:116px;top:534px;line-height:20px;font-size:11px;color:#000;white-space:pre;letter-spacing:-0.4px;">Diema Family+1</div>
<div style="left:337px;top:537px;width:13px;height:13px;box-sizing:border-box;border:1px solid #b9c9e2;background:#fff"><div style="left:1px;top:1px;width:9px;height:9px;box-sizing:border-box;border:1px solid #c2c2c2;background:#e9e9e9"></div></div>
<div style="left:372px;top:537px;width:13px;height:13px;box-sizing:border-box;border:1px solid #b9c9e2;background:#fff"><div style="left:1px;top:1px;width:9px;height:9px;box-sizing:border-box;border:1px solid #c2c2c2;background:#e9e9e9"></div></div>
<div style="left:407px;top:537px;width:13px;height:13px;box-sizing:border-box;border:1px solid #b9c9e2;background:#fff"><div style="left:1px;top:1px;width:9px;height:9px;box-sizing:border-box;border:1px solid #c2c2c2;background:#e9e9e9"></div></div>
<div style="left:21px;top:555px;line-height:20px;font-size:11px;color:#000;white-space:pre;letter-spacing:-0.9px;">SD-TV</div>
<div style="left:62px;top:555px;width:47px;text-align:right;line-height:20px;font-size:11px;color:#000;white-space:pre;letter-spacing:-0.3px;">17</div>
<div style="left:116px;top:555px;line-height:20px;font-size:11px;color:#000;white-space:pre;letter-spacing:-0.4px;">bTV Comedy+1</div>
<div style="left:337px;top:558px;width:13px;height:13px;box-sizing:border-box;border:1px solid #b9c9e2;background:#fff"><div style="left:1px;top:1px;width:9px;height:9px;box-sizing:border-box;border:1px solid #c2c2c2;background:#e9e9e9"></div></div>
<div style="left:372px;top:558px;width:13px;height:13px;box-sizing:border-box;border:1px solid #b9c9e2;background:#fff"><div style="left:1px;top:1px;width:9px;height:9px;box-sizing:border-box;border:1px solid #c2c2c2;background:#e9e9e9"></div></div>
<div style="left:407px;top:558px;width:13px;height:13px;box-sizing:border-box;border:1px solid #b9c9e2;background:#fff"><div style="left:1px;top:1px;width:9px;height:9px;box-sizing:border-box;border:1px solid #c2c2c2;background:#e9e9e9"></div></div>
<div style="left:21px;top:576px;line-height:20px;font-size:11px;color:#000;white-space:pre;letter-spacing:-0.9px;">SD-TV</div>
<div style="left:62px;top:576px;width:47px;text-align:right;line-height:20px;font-size:11px;color:#000;white-space:pre;letter-spacing:-0.3px;">18</div>
<div style="left:116px;top:576px;line-height:20px;font-size:11px;color:#000;white-space:pre;letter-spacing:-0.4px;">BNT HD+1</div>
<div style="left:337px;top:579px;width:13px;height:13px;box-sizing:border-box;border:1px solid #b9c9e2;background:#fff"><div style="left:1px;top:1px;width:9px;height:9px;box-sizing:border-box;border:1px solid #c2c2c2;background:#e9e9e9"></div></div>
<div style="left:372px;top:579px;width:13px;height:13px;box-sizing:border-box;border:1px solid #b9c9e2;background:#fff"><div style="left:1px;top:1px;width:9px;height:9px;box-sizing:border-box;border:1px solid #c2c2c2;background:#e9e9e9"></div></div>
<div style="left:407px;top:579px;width:13px;height:13px;box-sizing:border-box;border:1px solid #b9c9e2;background:#fff"><div style="left:1px;top:1px;width:9px;height:9px;box-sizing:border-box;border:1px solid #c2c2c2;background:#e9e9e9"></div></div>
<div style="left:21px;top:597px;line-height:20px;font-size:11px;color:#000;white-space:pre;letter-spacing:-0.9px;">SD-TV</div>
<div style="left:62px;top:597px;width:47px;text-align:right;line-height:20px;font-size:11px;color:#000;white-space:pre;letter-spacing:-0.3px;">19</div>
<div style="left:116px;top:597px;line-height:20px;font-size:11px;color:#000;white-space:pre;letter-spacing:-0.4px;"> Disc Sci HD</div>
<div style="left:337px;top:600px;width:13px;height:13px;box-sizing:border-box;border:1px solid #b9c9e2;background:#fff"><div style="left:1px;top:1px;width:9px;height:9px;box-sizing:border-box;border:1px solid #c2c2c2;background:#e9e9e9"></div></div>
<div style="left:372px;top:600px;width:13px;height:13px;box-sizing:border-box;border:1px solid #b9c9e2;background:#fff"><div style="left:1px;top:1px;width:9px;height:9px;box-sizing:border-box;border:1px solid #c2c2c2;background:#e9e9e9"></div></div>
<div style="left:407px;top:600px;width:13px;height:13px;box-sizing:border-box;border:1px solid #b9c9e2;background:#fff"><div style="left:1px;top:1px;width:9px;height:9px;box-sizing:border-box;border:1px solid #c2c2c2;background:#e9e9e9"></div></div>
<div style="left:21px;top:618px;line-height:20px;font-size:11px;color:#000;white-space:pre;letter-spacing:-0.9px;">SD-TV</div>
<div style="left:62px;top:618px;width:47px;text-align:right;line-height:20px;font-size:11px;color:#000;white-space:pre;letter-spacing:-0.3px;">20</div>
<div style="left:116px;top:618px;line-height:20px;font-size:11px;color:#000;white-space:pre;letter-spacing:-0.4px;">Nova Sport HD</div>
<div style="left:337px;top:621px;width:13px;height:13px;box-sizing:border-box;border:1px solid #b9c9e2;background:#fff"><div style="left:1px;top:1px;width:9px;height:9px;box-sizing:border-box;border:1px solid #c2c2c2;background:#e9e9e9"></div></div>
<div style="left:372px;top:621px;width:13px;height:13px;box-sizing:border-box;border:1px solid #b9c9e2;background:#fff"><div style="left:1px;top:1px;width:9px;height:9px;box-sizing:border-box;border:1px solid #c2c2c2;background:#e9e9e9"></div></div>
<div style="left:407px;top:621px;width:13px;height:13px;box-sizing:border-box;border:1px solid #b9c9e2;background:#fff"><div style="left:1px;top:1px;width:9px;height:9px;box-sizing:border-box;border:1px solid #c2c2c2;background:#e9e9e9"></div></div>
<div style="left:21px;top:639px;line-height:20px;font-size:11px;color:#000;white-space:pre;letter-spacing:-0.9px;">SD-TV</div>
<div style="left:62px;top:639px;width:47px;text-align:right;line-height:20px;font-size:11px;color:#000;white-space:pre;letter-spacing:-0.3px;">21</div>
<div style="left:116px;top:639px;line-height:20px;font-size:11px;color:#000;white-space:pre;letter-spacing:-0.4px;">BNT HD</div>
<div style="left:337px;top:642px;width:13px;height:13px;box-sizing:border-box;border:1px solid #b9c9e2;background:#fff"><div style="left:1px;top:1px;width:9px;height:9px;box-sizing:border-box;border:1px solid #c2c2c2;background:#e9e9e9"></div></div>
<div style="left:372px;top:642px;width:13px;height:13px;box-sizing:border-box;border:1px solid #b9c9e2;background:#fff"><div style="left:1px;top:1px;width:9px;height:9px;box-sizing:border-box;border:1px solid #c2c2c2;background:#e9e9e9"></div></div>
<div style="left:407px;top:642px;width:13px;height:13px;box-sizing:border-box;border:1px solid #b9c9e2;background:#fff"><div style="left:1px;top:1px;width:9px;height:9px;box-sizing:border-box;border:1px solid #c2c2c2;background:#e9e9e9"></div></div>
<div style="left:21px;top:660px;line-height:20px;font-size:11px;color:#000;white-space:pre;letter-spacing:-0.9px;">SD-TV</div>
<div style="left:62px;top:660px;width:47px;text-align:right;line-height:20px;font-size:11px;color:#000;white-space:pre;letter-spacing:-0.3px;">22</div>
<div style="left:116px;top:660px;line-height:20px;font-size:11px;color:#000;white-space:pre;letter-spacing:-0.4px;">Fen Folk TV</div>
<div style="left:337px;top:663px;width:13px;height:13px;box-sizing:border-box;border:1px solid #b9c9e2;background:#fff"><div style="left:1px;top:1px;width:9px;height:9px;box-sizing:border-box;border:1px solid #c2c2c2;background:#e9e9e9"></div></div>
<div style="left:372px;top:663px;width:13px;height:13px;box-sizing:border-box;border:1px solid #b9c9e2;background:#fff"><div style="left:1px;top:1px;width:9px;height:9px;box-sizing:border-box;border:1px solid #c2c2c2;background:#e9e9e9"></div></div>
<div style="left:407px;top:663px;width:13px;height:13px;box-sizing:border-box;border:1px solid #b9c9e2;background:#fff"><div style="left:1px;top:1px;width:9px;height:9px;box-sizing:border-box;border:1px solid #c2c2c2;background:#e9e9e9"></div></div>
<div style="left:21px;top:681px;line-height:20px;font-size:11px;color:#000;white-space:pre;letter-spacing:-0.9px;">SD-TV</div>
<div style="left:62px;top:681px;width:47px;text-align:right;line-height:20px;font-size:11px;color:#000;white-space:pre;letter-spacing:-0.3px;">23</div>
<div style="left:116px;top:681px;line-height:20px;font-size:11px;color:#000;white-space:pre;letter-spacing:-0.4px;">BG Music HD</div>
<div style="left:337px;top:684px;width:13px;height:13px;box-sizing:border-box;border:1px solid #b9c9e2;background:#fff"><div style="left:1px;top:1px;width:9px;height:9px;box-sizing:border-box;border:1px solid #c2c2c2;background:#e9e9e9"></div></div>
<div style="left:372px;top:684px;width:13px;height:13px;box-sizing:border-box;border:1px solid #b9c9e2;background:#fff"><div style="left:1px;top:1px;width:9px;height:9px;box-sizing:border-box;border:1px solid #c2c2c2;background:#e9e9e9"></div></div>
<div style="left:407px;top:684px;width:13px;height:13px;box-sizing:border-box;border:1px solid #b9c9e2;background:#fff"><div style="left:1px;top:1px;width:9px;height:9px;box-sizing:border-box;border:1px solid #c2c2c2;background:#e9e9e9"></div></div>
<div style="left:21px;top:702px;line-height:20px;font-size:11px;color:#000;white-space:pre;letter-spacing:-0.9px;">SD-TV</div>
<div style="left:62px;top:702px;width:47px;text-align:right;line-height:20px;font-size:11px;color:#000;white-space:pre;letter-spacing:-0.3px;">24</div>
<div style="left:116px;top:702px;line-height:20px;font-size:11px;color:#000;white-space:pre;letter-spacing:-0.4px;">Balkanika Music TV HD</div>
<div style="left:337px;top:705px;width:13px;height:13px;box-sizing:border-box;border:1px solid #b9c9e2;background:#fff"><div style="left:1px;top:1px;width:9px;height:9px;box-sizing:border-box;border:1px solid #c2c2c2;background:#e9e9e9"></div></div>
<div style="left:372px;top:705px;width:13px;height:13px;box-sizing:border-box;border:1px solid #b9c9e2;background:#fff"><div style="left:1px;top:1px;width:9px;height:9px;box-sizing:border-box;border:1px solid #c2c2c2;background:#e9e9e9"></div></div>
<div style="left:407px;top:705px;width:13px;height:13px;box-sizing:border-box;border:1px solid #b9c9e2;background:#fff"><div style="left:1px;top:1px;width:9px;height:9px;box-sizing:border-box;border:1px solid #c2c2c2;background:#e9e9e9"></div></div>
<div style="left:21px;top:723px;line-height:20px;font-size:11px;color:#000;white-space:pre;letter-spacing:-0.9px;">SD-TV</div>
<div style="left:62px;top:723px;width:47px;text-align:right;line-height:20px;font-size:11px;color:#000;white-space:pre;letter-spacing:-0.3px;">25</div>
<div style="left:116px;top:723px;line-height:20px;font-size:11px;color:#000;white-space:pre;letter-spacing:-0.4px;">Fen TV HD</div>
<div style="left:337px;top:726px;width:13px;height:13px;box-sizing:border-box;border:1px solid #b9c9e2;background:#fff"><div style="left:1px;top:1px;width:9px;height:9px;box-sizing:border-box;border:1px solid #c2c2c2;background:#e9e9e9"></div></div>
<div style="left:372px;top:726px;width:13px;height:13px;box-sizing:border-box;border:1px solid #b9c9e2;background:#fff"><div style="left:1px;top:1px;width:9px;height:9px;box-sizing:border-box;border:1px solid #c2c2c2;background:#e9e9e9"></div></div>
<div style="left:407px;top:726px;width:13px;height:13px;box-sizing:border-box;border:1px solid #b9c9e2;background:#fff"><div style="left:1px;top:1px;width:9px;height:9px;box-sizing:border-box;border:1px solid #c2c2c2;background:#e9e9e9"></div></div>
<div style="left:21px;top:744px;line-height:20px;font-size:11px;color:#000;white-space:pre;letter-spacing:-0.9px;">SD-TV</div>
<div style="left:62px;top:744px;width:47px;text-align:right;line-height:20px;font-size:11px;color:#000;white-space:pre;letter-spacing:-0.3px;">26</div>
<div style="left:116px;top:744px;line-height:20px;font-size:11px;color:#000;white-space:pre;letter-spacing:-0.4px;">BNT HD+12</div>
<div style="left:337px;top:747px;width:13px;height:13px;box-sizing:border-box;border:1px solid #b9c9e2;background:#fff"><div style="left:1px;top:1px;width:9px;height:9px;box-sizing:border-box;border:1px solid #c2c2c2;background:#e9e9e9"></div></div>
<div style="left:372px;top:747px;width:13px;height:13px;box-sizing:border-box;border:1px solid #b9c9e2;background:#fff"><div style="left:1px;top:1px;width:9px;height:9px;box-sizing:border-box;border:1px solid #c2c2c2;background:#e9e9e9"></div></div>
<div style="left:407px;top:747px;width:13px;height:13px;box-sizing:border-box;border:1px solid #b9c9e2;background:#fff"><div style="left:1px;top:1px;width:9px;height:9px;box-sizing:border-box;border:1px solid #c2c2c2;background:#e9e9e9"></div></div>
<div style="left:21px;top:765px;line-height:20px;font-size:11px;color:#000;white-space:pre;letter-spacing:-0.9px;">SD-TV</div>
<div style="left:62px;top:765px;width:47px;text-align:right;line-height:20px;font-size:11px;color:#000;white-space:pre;letter-spacing:-0.3px;">27</div>
<div style="left:116px;top:765px;line-height:20px;font-size:11px;color:#000;white-space:pre;letter-spacing:-0.4px;">bTV Cinema</div>
<div style="left:337px;top:768px;width:13px;height:13px;box-sizing:border-box;border:1px solid #b9c9e2;background:#fff"><div style="left:1px;top:1px;width:9px;height:9px;box-sizing:border-box;border:1px solid #c2c2c2;background:#e9e9e9"></div></div>
<div style="left:372px;top:768px;width:13px;height:13px;box-sizing:border-box;border:1px solid #b9c9e2;background:#fff"><div style="left:1px;top:1px;width:9px;height:9px;box-sizing:border-box;border:1px solid #c2c2c2;background:#e9e9e9"></div></div>
<div style="left:407px;top:768px;width:13px;height:13px;box-sizing:border-box;border:1px solid #b9c9e2;background:#fff"><div style="left:1px;top:1px;width:9px;height:9px;box-sizing:border-box;border:1px solid #c2c2c2;background:#e9e9e9"></div></div>
<div style="left:21px;top:786px;line-height:20px;font-size:11px;color:#000;white-space:pre;letter-spacing:-0.9px;">SD-TV</div>
<div style="left:62px;top:786px;width:47px;text-align:right;line-height:20px;font-size:11px;color:#000;white-space:pre;letter-spacing:-0.3px;">28</div>
<div style="left:116px;top:786px;line-height:20px;font-size:11px;color:#000;white-space:pre;letter-spacing:-0.4px;">KinoNova</div>
<div style="left:337px;top:789px;width:13px;height:13px;box-sizing:border-box;border:1px solid #b9c9e2;background:#fff"><div style="left:1px;top:1px;width:9px;height:9px;box-sizing:border-box;border:1px solid #c2c2c2;background:#e9e9e9"></div></div>
<div style="left:372px;top:789px;width:13px;height:13px;box-sizing:border-box;border:1px solid #b9c9e2;background:#fff"><div style="left:1px;top:1px;width:9px;height:9px;box-sizing:border-box;border:1px solid #c2c2c2;background:#e9e9e9"></div></div>
<div style="left:407px;top:789px;width:13px;height:13px;box-sizing:border-box;border:1px solid #b9c9e2;background:#fff"><div style="left:1px;top:1px;width:9px;height:9px;box-sizing:border-box;border:1px solid #c2c2c2;background:#e9e9e9"></div></div>
<div style="left:21px;top:807px;line-height:20px;font-size:11px;color:#000;white-space:pre;letter-spacing:-0.9px;">SD-TV</div>
<div style="left:62px;top:807px;width:47px;text-align:right;line-height:20px;font-size:11px;color:#000;white-space:pre;letter-spacing:-0.3px;">29</div>
<div style="left:116px;top:807px;line-height:20px;font-size:11px;color:#000;white-space:pre;letter-spacing:-0.4px;">Diema Family</div>
<div style="left:337px;top:810px;width:13px;height:13px;box-sizing:border-box;border:1px solid #b9c9e2;background:#fff"><div style="left:1px;top:1px;width:9px;height:9px;box-sizing:border-box;border:1px solid #c2c2c2;background:#e9e9e9"></div></div>
<div style="left:372px;top:810px;width:13px;height:13px;box-sizing:border-box;border:1px solid #b9c9e2;background:#fff"><div style="left:1px;top:1px;width:9px;height:9px;box-sizing:border-box;border:1px solid #c2c2c2;background:#e9e9e9"></div></div>
<div style="left:407px;top:810px;width:13px;height:13px;box-sizing:border-box;border:1px solid #b9c9e2;background:#fff"><div style="left:1px;top:1px;width:9px;height:9px;box-sizing:border-box;border:1px solid #c2c2c2;background:#e9e9e9"></div></div>
<div style="left:21px;top:828px;line-height:20px;font-size:11px;color:#000;white-space:pre;letter-spacing:-0.9px;">SD-TV</div>
<div style="left:62px;top:828px;width:47px;text-align:right;line-height:20px;font-size:11px;color:#000;white-space:pre;letter-spacing:-0.3px;">30</div>
<div style="left:116px;top:828px;line-height:20px;font-size:11px;color:#000;white-space:pre;letter-spacing:-0.4px;">nova Sport</div>
<div style="left:337px;top:831px;width:13px;height:13px;box-sizing:border-box;border:1px solid #b9c9e2;background:#fff"><div style="left:1px;top:1px;width:9px;height:9px;box-sizing:border-box;border:1px solid #c2c2c2;background:#e9e9e9"></div></div>
<div style="left:372px;top:831px;width:13px;height:13px;box-sizing:border-box;border:1px solid #b9c9e2;background:#fff"><div style="left:1px;top:1px;width:9px;height:9px;box-sizing:border-box;border:1px solid #c2c2c2;background:#e9e9e9"></div></div>
<div style="left:407px;top:831px;width:13px;height:13px;box-sizing:border-box;border:1px solid #b9c9e2;background:#fff"><div style="left:1px;top:1px;width:9px;height:9px;box-sizing:border-box;border:1px solid #c2c2c2;background:#e9e9e9"></div></div>
<div style="left:21px;top:849px;line-height:20px;font-size:11px;color:#000;white-space:pre;letter-spacing:-0.9px;">SD-TV</div>
<div style="left:62px;top:849px;width:47px;text-align:right;line-height:20px;font-size:11px;color:#000;white-space:pre;letter-spacing:-0.3px;">31</div>
<div style="left:116px;top:849px;line-height:20px;font-size:11px;color:#000;white-space:pre;letter-spacing:-0.4px;">FOX</div>
<div style="left:337px;top:852px;width:13px;height:13px;box-sizing:border-box;border:1px solid #b9c9e2;background:#fff"><div style="left:1px;top:1px;width:9px;height:9px;box-sizing:border-box;border:1px solid #c2c2c2;background:#e9e9e9"></div></div>
<div style="left:372px;top:852px;width:13px;height:13px;box-sizing:border-box;border:1px solid #b9c9e2;background:#fff"><div style="left:1px;top:1px;width:9px;height:9px;box-sizing:border-box;border:1px solid #c2c2c2;background:#e9e9e9"></div></div>
<div style="left:407px;top:852px;width:13px;height:13px;box-sizing:border-box;border:1px solid #b9c9e2;background:#fff"><div style="left:1px;top:1px;width:9px;height:9px;box-sizing:border-box;border:1px solid #c2c2c2;background:#e9e9e9"></div></div>
<div style="left:21px;top:870px;line-height:20px;font-size:11px;color:#000;white-space:pre;letter-spacing:-0.9px;">SD-TV</div>
<div style="left:62px;top:870px;width:47px;text-align:right;line-height:20px;font-size:11px;color:#000;white-space:pre;letter-spacing:-0.3px;">32</div>
<div style="left:116px;top:870px;line-height:20px;font-size:11px;color:#000;white-space:pre;letter-spacing:-0.4px;">FOX Life</div>
<div style="left:337px;top:873px;width:13px;height:13px;box-sizing:border-box;border:1px solid #b9c9e2;background:#fff"><div style="left:1px;top:1px;width:9px;height:9px;box-sizing:border-box;border:1px solid #c2c2c2;background:#e9e9e9"></div></div>
<div style="left:372px;top:873px;width:13px;height:13px;box-sizing:border-box;border:1px solid #b9c9e2;background:#fff"><div style="left:1px;top:1px;width:9px;height:9px;box-sizing:border-box;border:1px solid #c2c2c2;background:#e9e9e9"></div></div>
<div style="left:407px;top:873px;width:13px;height:13px;box-sizing:border-box;border:1px solid #b9c9e2;background:#fff"><div style="left:1px;top:1px;width:9px;height:9px;box-sizing:border-box;border:1px solid #c2c2c2;background:#e9e9e9"></div></div>
<div style="left:21px;top:891px;line-height:20px;font-size:11px;color:#000;white-space:pre;letter-spacing:-0.9px;">SD-TV</div>
<div style="left:62px;top:891px;width:47px;text-align:right;line-height:20px;font-size:11px;color:#000;white-space:pre;letter-spacing:-0.3px;">33</div>
<div style="left:116px;top:891px;line-height:20px;font-size:11px;color:#000;white-space:pre;letter-spacing:-0.4px;">Fox Crime</div>
<div style="left:337px;top:894px;width:13px;height:13px;box-sizing:border-box;border:1px solid #b9c9e2;background:#fff"><div style="left:1px;top:1px;width:9px;height:9px;box-sizing:border-box;border:1px solid #c2c2c2;background:#e9e9e9"></div></div>
<div style="left:372px;top:894px;width:13px;height:13px;box-sizing:border-box;border:1px solid #b9c9e2;background:#fff"><div style="left:1px;top:1px;width:9px;height:9px;box-sizing:border-box;border:1px solid #c2c2c2;background:#e9e9e9"></div></div>
<div style="left:407px;top:894px;width:13px;height:13px;box-sizing:border-box;border:1px solid #b9c9e2;background:#fff"><div style="left:1px;top:1px;width:9px;height:9px;box-sizing:border-box;border:1px solid #c2c2c2;background:#e9e9e9"></div></div>
<div style="left:21px;top:912px;line-height:20px;font-size:11px;color:#000;white-space:pre;letter-spacing:-0.9px;">SD-TV</div>
<div style="left:62px;top:912px;width:47px;text-align:right;line-height:20px;font-size:11px;color:#000;white-space:pre;letter-spacing:-0.3px;">34</div>
<div style="left:116px;top:912px;line-height:20px;font-size:11px;color:#000;white-space:pre;letter-spacing:-0.4px;">TB Европа</div>
<div style="left:337px;top:915px;width:13px;height:13px;box-sizing:border-box;border:1px solid #b9c9e2;background:#fff"><div style="left:1px;top:1px;width:9px;height:9px;box-sizing:border-box;border:1px solid #c2c2c2;background:#e9e9e9"></div></div>
<div style="left:372px;top:915px;width:13px;height:13px;box-sizing:border-box;border:1px solid #b9c9e2;background:#fff"><div style="left:1px;top:1px;width:9px;height:9px;box-sizing:border-box;border:1px solid #c2c2c2;background:#e9e9e9"></div></div>
<div style="left:407px;top:915px;width:13px;height:13px;box-sizing:border-box;border:1px solid #b9c9e2;background:#fff"><div style="left:1px;top:1px;width:9px;height:9px;box-sizing:border-box;border:1px solid #c2c2c2;background:#e9e9e9"></div></div>
<div style="left:21px;top:933px;line-height:20px;font-size:11px;color:#000;white-space:pre;letter-spacing:-0.9px;">SD-TV</div>
<div style="left:62px;top:933px;width:47px;text-align:right;line-height:20px;font-size:11px;color:#000;white-space:pre;letter-spacing:-0.3px;">35</div>
<div style="left:116px;top:933px;line-height:20px;font-size:11px;color:#000;white-space:pre;letter-spacing:-0.4px;">bTV Lady</div>
<div style="left:337px;top:936px;width:13px;height:13px;box-sizing:border-box;border:1px solid #b9c9e2;background:#fff"><div style="left:1px;top:1px;width:9px;height:9px;box-sizing:border-box;border:1px solid #c2c2c2;background:#e9e9e9"></div></div>
<div style="left:372px;top:936px;width:13px;height:13px;box-sizing:border-box;border:1px solid #b9c9e2;background:#fff"><div style="left:1px;top:1px;width:9px;height:9px;box-sizing:border-box;border:1px solid #c2c2c2;background:#e9e9e9"></div></div>
<div style="left:407px;top:936px;width:13px;height:13px;box-sizing:border-box;border:1px solid #b9c9e2;background:#fff"><div style="left:1px;top:1px;width:9px;height:9px;box-sizing:border-box;border:1px solid #c2c2c2;background:#e9e9e9"></div></div>
<div style="left:337px;top:957px;width:13px;height:13px;box-sizing:border-box;border:1px solid #b9c9e2;background:#fff"><div style="left:1px;top:1px;width:9px;height:9px;box-sizing:border-box;border:1px solid #c2c2c2;background:#e9e9e9"></div></div>
<div style="left:372px;top:957px;width:13px;height:13px;box-sizing:border-box;border:1px solid #b9c9e2;background:#fff"><div style="left:1px;top:1px;width:9px;height:9px;box-sizing:border-box;border:1px solid #c2c2c2;background:#e9e9e9"></div></div>
<div style="left:407px;top:957px;width:13px;height:13px;box-sizing:border-box;border:1px solid #b9c9e2;background:#fff"><div style="left:1px;top:1px;width:9px;height:9px;box-sizing:border-box;border:1px solid #c2c2c2;background:#e9e9e9"></div></div>
<svg style="left:6px;top:199px" width="7" height="9" viewBox="0 0 7 9"><ellipse cx="3.5" cy="2.6" rx="2.6" ry="2.1" fill="none" stroke="#000" stroke-width="1.4"/><path d="M1 3.2 L3 5 V8.6 H4 V5 L6 3.2" fill="#000"/></svg>
<div style="left:611px;top:193px;width:18px;height:765px;background:linear-gradient(90deg,#c9d7ea,#dde7f3)"></div>
<svg style="left:614px;top:198px" width="12" height="7" viewBox="0 0 12 7"><path d="M1 6 L6 1 L11 6Z" fill="#5a6f92"/></svg>
<div style="left:612px;top:210px;width:15px;height:157px;background:linear-gradient(90deg,#e8eff8,#cad8ea);border:1px solid #8ba0bd;border-radius:3px;box-sizing:border-box"></div>
<div style="left:616px;top:285px;width:7px;height:1px;background:#8ba0bd"></div>
<div style="left:616px;top:287px;width:7px;height:1px;background:#8ba0bd"></div>
<div style="left:616px;top:289px;width:7px;height:1px;background:#8ba0bd"></div>
<div style="left:616px;top:291px;width:7px;height:1px;background:#8ba0bd"></div>
<div style="left:637px;top:158px;width:1037px;height:35px;background:linear-gradient(#f3f7fc,#dfe8f5)"></div>
<div style="left:637px;top:192px;width:1037px;height:1px;background:#8ba0bd"></div>
<div style="left:637px;top:193px;width:1037px;height:765px;background:#fff"></div>
<div style="left:637px;top:193px;width:16px;height:765px;background:#e9f0fa"></div>
<div style="left:654px;top:213px;width:1147px;height:1px;background:#c6d7ef"></div>
<div style="left:637px;top:214px;width:1164px;height:4px;background:#eaf1fa"></div>
<div style="left:638px;top:213px;width:15px;height:1px;background:#8ba0bd"></div>
<div style="left:637px;top:218px;width:1164px;height:1px;background:#8ba0bd"></div>
<div style="left:638px;top:239px;width:15px;height:1px;background:#8ba0bd"></div>
<div style="left:654px;top:239px;width:1147px;height:1px;background:#c6d7ef"></div>
<div style="left:638px;top:260px;width:15px;height:1px;background:#8ba0bd"></div>
<div style="left:654px;top:260px;width:1147px;height:1px;background:#c6d7ef"></div>
<div style="left:638px;top:281px;width:15px;height:1px;background:#8ba0bd"></div>
<div style="left:654px;top:281px;width:1147px;height:1px;background:#c6d7ef"></div>
<div style="left:638px;top:302px;width:15px;height:1px;background:#8ba0bd"></div>
<div style="left:654px;top:302px;width:1147px;height:1px;background:#c6d7ef"></div>
<div style="left:638px;top:323px;width:15px;height:1px;background:#8ba0bd"></div>
<div style="left:654px;top:323px;width:1147px;height:1px;background:#c6d7ef"></div>
<div style="left:638px;top:344px;width:15px;height:1px;background:#8ba0bd"></div>
<div style="left:654px;top:344px;width:1147px;height:1px;background:#c6d7ef"></div>
<div style="left:638px;top:365px;width:15px;height:1px;background:#8ba0bd"></div>
<div style="left:654px;top:365px;width:1147px;height:1px;background:#c6d7ef"></div>
<div style="left:638px;top:386px;width:15px;height:1px;background:#8ba0bd"></div>
<div style="left:654px;top:386px;width:1147px;height:1px;background:#c6d7ef"></div>
<div style="left:638px;top:407px;width:15px;height:1px;background:#8ba0bd"></div>
<div style="left:654px;top:407px;width:1147px;height:1px;background:#c6d7ef"></div>
<div style="left:638px;top:428px;width:15px;height:1px;background:#8ba0bd"></div>
<div style="left:654px;top:428px;width:1147px;height:1px;background:#c6d7ef"></div>
<div style="left:638px;top:449px;width:15px;height:1px;background:#8ba0bd"></div>
<div style="left:654px;top:449px;width:1147px;height:1px;background:#c6d7ef"></div>
<div style="left:638px;top:470px;width:15px;height:1px;background:#8ba0bd"></div>
<div style="left:654px;top:470px;width:1147px;height:1px;background:#c6d7ef"></div>
<div style="left:638px;top:491px;width:15px;height:1px;background:#8ba0bd"></div>
<div style="left:654px;top:491px;width:1147px;height:1px;background:#c6d7ef"></div>
<div style="left:638px;top:512px;width:15px;height:1px;background:#8ba0bd"></div>
<div style="left:654px;top:512px;width:1147px;height:1px;background:#c6d7ef"></div>
<div style="left:638px;top:533px;width:15px;height:1px;background:#8ba0bd"></div>
<div style="left:654px;top:533px;width:1147px;height:1px;background:#c6d7ef"></div>
<div style="left:638px;top:554px;width:15px;height:1px;background:#8ba0bd"></div>
<div style="left:654px;top:554px;width:1147px;height:1px;background:#c6d7ef"></div>
<div style="left:638px;top:575px;width:15px;height:1px;background:#8ba0bd"></div>
<div style="left:654px;top:575px;width:1147px;height:1px;background:#c6d7ef"></div>
<div style="left:638px;top:596px;width:15px;height:1px;background:#8ba0bd"></div>
<div style="left:654px;top:596px;width:1147px;height:1px;background:#c6d7ef"></div>
<div style="left:638px;top:617px;width:15px;height:1px;background:#8ba0bd"></div>
<div style="left:654px;top:617px;width:1147px;height:1px;background:#c6d7ef"></div>
<div style="left:638px;top:638px;width:15px;height:1px;background:#8ba0bd"></div>
<div style="left:654px;top:638px;width:1147px;height:1px;background:#c6d7ef"></div>
<div style="left:638px;top:659px;width:15px;height:1px;background:#8ba0bd"></div>
<div style="left:654px;top:659px;width:1147px;height:1px;background:#c6d7ef"></div>
<div style="left:638px;top:680px;width:15px;height:1px;background:#8ba0bd"></div>
<div style="left:654px;top:680px;width:1147px;height:1px;background:#c6d7ef"></div>
<div style="left:638px;top:701px;width:15px;height:1px;background:#8ba0bd"></div>
<div style="left:654px;top:701px;width:1147px;height:1px;background:#c6d7ef"></div>
<div style="left:638px;top:722px;width:15px;height:1px;background:#8ba0bd"></div>
<div style="left:654px;top:722px;width:1147px;height:1px;background:#c6d7ef"></div>
<div style="left:638px;top:743px;width:15px;height:1px;background:#8ba0bd"></div>
<div style="left:654px;top:743px;width:1147px;height:1px;background:#c6d7ef"></div>
<div style="left:638px;top:764px;width:15px;height:1px;background:#8ba0bd"></div>
<div style="left:654px;top:764px;width:1147px;height:1px;background:#c6d7ef"></div>
<div style="left:638px;top:785px;width:15px;height:1px;background:#8ba0bd"></div>
<div style="left:654px;top:785px;width:1147px;height:1px;background:#c6d7ef"></div>
<div style="left:638px;top:806px;width:15px;height:1px;background:#8ba0bd"></div>
<div style="left:654px;top:806px;width:1147px;height:1px;background:#c6d7ef"></div>
<div style="left:638px;top:827px;width:15px;height:1px;background:#8ba0bd"></div>
<div style="left:654px;top:827px;width:1147px;height:1px;background:#c6d7ef"></div>
<div style="left:638px;top:848px;width:15px;height:1px;background:#8ba0bd"></div>
<div style="left:654px;top:848px;width:1147px;height:1px;background:#c6d7ef"></div>
<div style="left:638px;top:869px;width:15px;height:1px;background:#8ba0bd"></div>
<div style="left:654px;top:869px;width:1147px;height:1px;background:#c6d7ef"></div>
<div style="left:638px;top:890px;width:15px;height:1px;background:#8ba0bd"></div>
<div style="left:654px;top:890px;width:1147px;height:1px;background:#c6d7ef"></div>
<div style="left:638px;top:911px;width:15px;height:1px;background:#8ba0bd"></div>
<div style="left:654px;top:911px;width:1147px;height:1px;background:#c6d7ef"></div>
<div style="left:638px;top:932px;width:15px;height:1px;background:#8ba0bd"></div>
<div style="left:654px;top:932px;width:1147px;height:1px;background:#c6d7ef"></div>
<div style="left:638px;top:953px;width:15px;height:1px;background:#8ba0bd"></div>
<div style="left:654px;top:953px;width:1147px;height:1px;background:#c6d7ef"></div>
<div style="left:638px;top:974px;width:15px;height:1px;background:#8ba0bd"></div>
<div style="left:654px;top:974px;width:1147px;height:1px;background:#c6d7ef"></div>
<div style="left:653px;top:158px;width:1px;height:34px;background:#8ba0bd"></div>
<div style="left:653px;top:193px;width:1px;height:21px;background:#8ba0bd"></div>
<div style="left:653px;top:218px;width:1px;height:740px;background:#8ba0bd"></div>
<div style="left:742px;top:158px;width:1px;height:34px;background:#8ba0bd"></div>
<div style="left:742px;top:193px;width:1px;height:20px;background:#c6d7ef"></div>
<div style="left:742px;top:219px;width:1px;height:739px;background:#c6d7ef"></div>
<div style="left:807px;top:158px;width:1px;height:34px;background:#8ba0bd"></div>
<div style="left:807px;top:193px;width:1px;height:20px;background:#c6d7ef"></div>
<div style="left:807px;top:219px;width:1px;height:739px;background:#c6d7ef"></div>
<div style="left:987px;top:158px;width:1px;height:34px;background:#8ba0bd"></div>
<div style="left:987px;top:193px;width:1px;height:20px;background:#c6d7ef"></div>
<div style="left:987px;top:219px;width:1px;height:739px;background:#c6d7ef"></div>
<div style="left:1062px;top:158px;width:1px;height:34px;background:#8ba0bd"></div>
<div style="left:1062px;top:193px;width:1px;height:20px;background:#c6d7ef"></div>
<div style="left:1062px;top:219px;width:1px;height:739px;background:#c6d7ef"></div>
<div style="left:1117px;top:158px;width:1px;height:34px;background:#8ba0bd"></div>
<div style="left:1117px;top:193px;width:1px;height:20px;background:#c6d7ef"></div>
<div style="left:1117px;top:219px;width:1px;height:739px;background:#c6d7ef"></div>
<div style="left:1157px;top:158px;width:1px;height:34px;background:#8ba0bd"></div>
<div style="left:1157px;top:193px;width:1px;height:20px;background:#c6d7ef"></div>
<div style="left:1157px;top:219px;width:1px;height:739px;background:#c6d7ef"></div>
<div style="left:1197px;top:158px;width:1px;height:34px;background:#8ba0bd"></div>
<div style="left:1197px;top:193px;width:1px;height:20px;background:#c6d7ef"></div>
<div style="left:1197px;top:219px;width:1px;height:739px;background:#c6d7ef"></div>
<div style="left:1242px;top:158px;width:1px;height:34px;background:#8ba0bd"></div>
<div style="left:1242px;top:193px;width:1px;height:20px;background:#c6d7ef"></div>
<div style="left:1242px;top:219px;width:1px;height:739px;background:#c6d7ef"></div>
<div style="left:1282px;top:158px;width:1px;height:34px;background:#8ba0bd"></div>
<div style="left:1282px;top:193px;width:1px;height:20px;background:#c6d7ef"></div>
<div style="left:1282px;top:219px;width:1px;height:739px;background:#c6d7ef"></div>
<div style="left:1357px;top:158px;width:1px;height:34px;background:#8ba0bd"></div>
<div style="left:1357px;top:193px;width:1px;height:20px;background:#c6d7ef"></div>
<div style="left:1357px;top:219px;width:1px;height:739px;background:#c6d7ef"></div>
<div style="left:1432px;top:158px;width:1px;height:34px;background:#8ba0bd"></div>
<div style="left:1432px;top:193px;width:1px;height:20px;background:#c6d7ef"></div>
<div style="left:1432px;top:219px;width:1px;height:739px;background:#c6d7ef"></div>
<div style="left:1507px;top:158px;width:1px;height:34px;background:#8ba0bd"></div>
<div style="left:1507px;top:193px;width:1px;height:20px;background:#c6d7ef"></div>
<div style="left:1507px;top:219px;width:1px;height:739px;background:#c6d7ef"></div>
<div style="left:1547px;top:158px;width:1px;height:34px;background:#8ba0bd"></div>
<div style="left:1547px;top:193px;width:1px;height:20px;background:#c6d7ef"></div>
<div style="left:1547px;top:219px;width:1px;height:739px;background:#c6d7ef"></div>
<div style="left:1592px;top:158px;width:1px;height:34px;background:#8ba0bd"></div>
<div style="left:1592px;top:193px;width:1px;height:20px;background:#c6d7ef"></div>
<div style="left:1592px;top:219px;width:1px;height:739px;background:#c6d7ef"></div>
<div style="left:1632px;top:158px;width:1px;height:34px;background:#8ba0bd"></div>
<div style="left:1632px;top:193px;width:1px;height:20px;background:#c6d7ef"></div>
<div style="left:1632px;top:219px;width:1px;height:739px;background:#c6d7ef"></div>
<div style="left:1800px;top:158px;width:1px;height:34px;background:#8ba0bd"></div>
<div style="left:1800px;top:193px;width:1px;height:20px;background:#c6d7ef"></div>
<div style="left:1800px;top:219px;width:1px;height:739px;background:#c6d7ef"></div>
<div style="left:637px;top:214px;width:1164px;height:4px;background:#eaf1fa"></div>
<div style="left:657px;top:168px;line-height:14px;font-size:11px;color:#1e2a4a;white-space:nowrap">Old Pr#</div>
<div style="left:746px;top:168px;line-height:14px;font-size:11px;color:#1e2a4a;white-space:nowrap">New Pr#</div>
<div style="left:811px;top:168px;line-height:14px;font-size:11px;color:#1e2a4a;white-space:nowrap">Channel name</div>
<div style="left:991px;top:168px;line-height:14px;font-size:11px;color:#1e2a4a;white-space:nowrap">Short name</div>
<div style="left:1066px;top:168px;line-height:14px;font-size:11px;color:#1e2a4a;white-space:nowrap">Favorites</div>
<div style="left:1121px;top:168px;line-height:14px;font-size:11px;color:#1e2a4a;white-space:nowrap">Loc...</div>
<div style="left:1161px;top:168px;line-height:14px;font-size:11px;color:#1e2a4a;white-space:nowrap">Skip</div>
<div style="left:1201px;top:162px;line-height:13px;font-size:11px;color:#1e2a4a;white-space:nowrap">Service<br>Type...</div>
<div style="left:1246px;top:168px;line-height:14px;font-size:11px;color:#1e2a4a;white-space:nowrap">Crypt</div>
<div style="left:1286px;top:168px;line-height:14px;font-size:11px;color:#1e2a4a;white-space:nowrap">Provider</div>
<div style="left:1361px;top:162px;line-height:13px;font-size:11px;color:#1e2a4a;white-space:nowrap">Network<br>Operator</div>
<div style="left:1436px;top:162px;line-height:13px;font-size:11px;color:#1e2a4a;white-space:nowrap">Network<br>Name</div>
<div style="left:1511px;top:168px;line-height:14px;font-size:11px;color:#1e2a4a;white-space:nowrap">TS ID</div>
<div style="left:1551px;top:162px;line-height:13px;font-size:11px;color:#1e2a4a;white-space:nowrap">Netw...<br>(ONID)</div>
<div style="left:1596px;top:168px;line-height:14px;font-size:11px;color:#1e2a4a;white-space:nowrap">Hide</div>
<div style="left:1636px;top:162px;line-height:13px;font-size:11px;color:#1e2a4a;white-space:nowrap">Freqency<br>(MHz)</div>
<svg style="left:795px;top:173px" width="7" height="4" viewBox="0 0 7 4"><path d="M3.5 0 L7 4 H0Z" fill="#000"/></svg>
<svg style="left:732px;top:161px" width="7" height="7" viewBox="0 0 7 7"><ellipse cx="3.5" cy="1.5" rx="3" ry="1.1" fill="none" stroke="#8ba0bd" stroke-width="1"/><path d="M0.7 1.8 L3 4 V7 H4 V4 L6.3 1.8" fill="#8ba0bd"/></svg>
<div style="left:654px;top:345px;width:1021px;height:20px;background:#d5e6fb"></div>
<div style="left:1131px;top:196px;width:13px;height:13px;box-sizing:border-box;border:1px solid #b3c6e2;background:#fff"><div style="left:1px;top:1px;width:9px;height:9px;box-sizing:border-box;border:1px solid #5d7aa6;background:linear-gradient(#b6cdeb,#98b6dd)"></div></div>
<div style="left:1171px;top:196px;width:13px;height:13px;box-sizing:border-box;border:1px solid #b3c6e2;background:#fff"><div style="left:1px;top:1px;width:9px;height:9px;box-sizing:border-box;border:1px solid #5d7aa6;background:linear-gradient(#b6cdeb,#98b6dd)"></div></div>
<div style="left:1256px;top:196px;width:13px;height:13px;box-sizing:border-box;border:1px solid #b3c6e2;background:#fff"><div style="left:1px;top:1px;width:9px;height:9px;box-sizing:border-box;border:1px solid #5d7aa6;background:linear-gradient(#b6cdeb,#98b6dd)"></div></div>
<div style="left:1606px;top:196px;width:13px;height:13px;box-sizing:border-box;border:1px solid #b3c6e2;background:#fff"><div style="left:1px;top:1px;width:9px;height:9px;box-sizing:border-box;border:1px solid #5d7aa6;background:linear-gradient(#b6cdeb,#98b6dd)"></div></div>
<div style="left:653px;top:219px;width:86px;text-align:right;line-height:20px;font-size:11px;color:#6f6f6f;white-space:pre;letter-spacing:-0.3px;">26</div>
<div style="left:742px;top:219px;width:62px;text-align:right;line-height:20px;font-size:11px;color:#6f6f6f;white-space:pre;letter-spacing:-0.3px;">1</div>
<div style="left:811px;top:219px;line-height:20px;font-size:11px;color:#6f6f6f;white-space:pre;letter-spacing:-0.4px;">TV7</div>
<div style="left:1201px;top:219px;line-height:20px;font-size:11px;color:#6f6f6f;white-space:pre;letter-spacing:-0.9px;">SD-TV</div>
<div style="left:1361px;top:219px;line-height:20px;font-size:11px;color:#6f6f6f;white-space:pre;letter-spacing:0px;">Canal+</div>
<div style="left:1436px;top:219px;line-height:20px;font-size:11px;color:#6f6f6f;white-space:pre;letter-spacing:0px;">Canal +</div>
<div style="left:1507px;top:219px;width:37px;text-align:right;line-height:20px;font-size:11px;color:#6f6f6f;white-space:pre;letter-spacing:-0.3px;">2</div>
<div style="left:1547px;top:219px;width:42px;text-align:right;line-height:20px;font-size:11px;color:#6f6f6f;white-space:pre;letter-spacing:-0.3px;">200</div>
<div style="left:1668px;top:219px;line-height:20px;font-size:11px;color:#6f6f6f;white-space:pre;letter-spacing:-0.3px;">6</div>
<div style="left:1131px;top:222px;width:13px;height:13px;box-sizing:border-box;border:1px solid #b9c9e2;background:#fff"><div style="left:1px;top:1px;width:9px;height:9px;box-sizing:border-box;border:1px solid #c2c2c2;background:#e9e9e9"></div></div>
<div style="left:1171px;top:222px;width:13px;height:13px;box-sizing:border-box;border:1px solid #b9c9e2;background:#fff"><div style="left:1px;top:1px;width:9px;height:9px;box-sizing:border-box;border:1px solid #c2c2c2;background:#e9e9e9"></div></div>
<div style="left:1606px;top:222px;width:13px;height:13px;box-sizing:border-box;border:1px solid #b9c9e2;background:#fff"><div style="left:1px;top:1px;width:9px;height:9px;box-sizing:border-box;border:1px solid #c2c2c2;background:#e9e9e9"></div></div>
<div style="left:1256px;top:222px;width:13px;height:13px;box-sizing:border-box;border:1px solid #b3c6e2;background:#fff"><div style="left:1px;top:1px;width:9px;height:9px;box-sizing:border-box;border:1px solid #5d7aa6;background:linear-gradient(#b6cdeb,#98b6dd)"></div></div>
<div style="left:653px;top:240px;width:86px;text-align:right;line-height:20px;font-size:11px;color:#6f6f6f;white-space:pre;letter-spacing:-0.3px;">1</div>
<div style="left:742px;top:240px;width:62px;text-align:right;line-height:20px;font-size:11px;color:#6f6f6f;white-space:pre;letter-spacing:-0.3px;">2</div>
<div style="left:811px;top:240px;line-height:20px;font-size:11px;color:#6f6f6f;white-space:pre;letter-spacing:-0.4px;">SHOW TV</div>
<div style="left:1201px;top:240px;line-height:20px;font-size:11px;color:#6f6f6f;white-space:pre;letter-spacing:-0.9px;">SD-TV</div>
<div style="left:1361px;top:240px;line-height:20px;font-size:11px;color:#6f6f6f;white-space:pre;letter-spacing:0px;">Canal+</div>
<div style="left:1436px;top:240px;line-height:20px;font-size:11px;color:#6f6f6f;white-space:pre;letter-spacing:0px;">Canal +</div>
<div style="left:1507px;top:240px;width:37px;text-align:right;line-height:20px;font-size:11px;color:#6f6f6f;white-space:pre;letter-spacing:-0.3px;">32</div>
<div style="left:1547px;top:240px;width:42px;text-align:right;line-height:20px;font-size:11px;color:#6f6f6f;white-space:pre;letter-spacing:-0.3px;">200</div>
<div style="left:1668px;top:240px;line-height:20px;font-size:11px;color:#6f6f6f;white-space:pre;letter-spacing:-0.3px;">6</div>
<div style="left:1131px;top:243px;width:13px;height:13px;box-sizing:border-box;border:1px solid #b9c9e2;background:#fff"><div style="left:1px;top:1px;width:9px;height:9px;box-sizing:border-box;border:1px solid #c2c2c2;background:#e9e9e9"></div></div>
<div style="left:1171px;top:243px;width:13px;height:13px;box-sizing:border-box;border:1px solid #b9c9e2;background:#fff"><div style="left:1px;top:1px;width:9px;height:9px;box-sizing:border-box;border:1px solid #c2c2c2;background:#e9e9e9"></div></div>
<div style="left:1606px;top:243px;width:13px;height:13px;box-sizing:border-box;border:1px solid #b9c9e2;background:#fff"><div style="left:1px;top:1px;width:9px;height:9px;box-sizing:border-box;border:1px solid #c2c2c2;background:#e9e9e9"></div></div>
<div style="left:1256px;top:243px;width:13px;height:13px;box-sizing:border-box;border:1px solid #b3c6e2;background:#fff"><div style="left:1px;top:1px;width:9px;height:9px;box-sizing:border-box;border:1px solid #5d7aa6;background:linear-gradient(#b6cdeb,#98b6dd)"></div></div>
<div style="left:653px;top:261px;width:86px;text-align:right;line-height:20px;font-size:11px;color:#6f6f6f;white-space:pre;letter-spacing:-0.3px;">12</div>
<div style="left:742px;top:261px;width:62px;text-align:right;line-height:20px;font-size:11px;color:#6f6f6f;white-space:pre;letter-spacing:-0.3px;">3</div>
<div style="left:811px;top:261px;line-height:20px;font-size:11px;color:#6f6f6f;white-space:pre;letter-spacing:-0.4px;">nova+1</div>
<div style="left:1201px;top:261px;line-height:20px;font-size:11px;color:#6f6f6f;white-space:pre;letter-spacing:-0.9px;">SD-TV</div>
<div style="left:1361px;top:261px;line-height:20px;font-size:11px;color:#6f6f6f;white-space:pre;letter-spacing:0px;">Canal+</div>
<div style="left:1436px;top:261px;line-height:20px;font-size:11px;color:#6f6f6f;white-space:pre;letter-spacing:0px;">Canal +</div>
<div style="left:1507px;top:261px;width:37px;text-align:right;line-height:20px;font-size:11px;color:#6f6f6f;white-space:pre;letter-spacing:-0.3px;">33</div>
<div style="left:1547px;top:261px;width:42px;text-align:right;line-height:20px;font-size:11px;color:#6f6f6f;white-space:pre;letter-spacing:-0.3px;">200</div>
<div style="left:1668px;top:261px;line-height:20px;font-size:11px;color:#6f6f6f;white-space:pre;letter-spacing:-0.3px;">6</div>
<div style="left:1131px;top:264px;width:13px;height:13px;box-sizing:border-box;border:1px solid #b9c9e2;background:#fff"><div style="left:1px;top:1px;width:9px;height:9px;box-sizing:border-box;border:1px solid #c2c2c2;background:#e9e9e9"></div></div>
<div style="left:1171px;top:264px;width:13px;height:13px;box-sizing:border-box;border:1px solid #b9c9e2;background:#fff"><div style="left:1px;top:1px;width:9px;height:9px;box-sizing:border-box;border:1px solid #c2c2c2;background:#e9e9e9"></div></div>
<div style="left:1606px;top:264px;width:13px;height:13px;box-sizing:border-box;border:1px solid #b9c9e2;background:#fff"><div style="left:1px;top:1px;width:9px;height:9px;box-sizing:border-box;border:1px solid #c2c2c2;background:#e9e9e9"></div></div>
<div style="left:1256px;top:264px;width:13px;height:13px;box-sizing:border-box;border:1px solid #b3c6e2;background:#fff"><div style="left:1px;top:1px;width:9px;height:9px;box-sizing:border-box;border:1px solid #5d7aa6;background:linear-gradient(#b6cdeb,#98b6dd)"></div></div>
<div style="left:653px;top:282px;width:86px;text-align:right;line-height:20px;font-size:11px;color:#6f6f6f;white-space:pre;letter-spacing:-0.3px;">9</div>
<div style="left:742px;top:282px;width:62px;text-align:right;line-height:20px;font-size:11px;color:#6f6f6f;white-space:pre;letter-spacing:-0.3px;">4</div>
<div style="left:811px;top:282px;line-height:20px;font-size:11px;color:#6f6f6f;white-space:pre;letter-spacing:-0.4px;">NEWS 7 HD</div>
<div style="left:1201px;top:282px;line-height:20px;font-size:11px;color:#6f6f6f;white-space:pre;letter-spacing:-0.9px;">SD-TV</div>
<div style="left:1361px;top:282px;line-height:20px;font-size:11px;color:#6f6f6f;white-space:pre;letter-spacing:0px;">Canal+</div>
<div style="left:1436px;top:282px;line-height:20px;font-size:11px;color:#6f6f6f;white-space:pre;letter-spacing:0px;">Canal +</div>
<div style="left:1507px;top:282px;width:37px;text-align:right;line-height:20px;font-size:11px;color:#6f6f6f;white-space:pre;letter-spacing:-0.3px;">32</div>
<div style="left:1547px;top:282px;width:42px;text-align:right;line-height:20px;font-size:11px;color:#6f6f6f;white-space:pre;letter-spacing:-0.3px;">200</div>
<div style="left:1668px;top:282px;line-height:20px;font-size:11px;color:#6f6f6f;white-space:pre;letter-spacing:-0.3px;">6</div>
<div style="left:1131px;top:285px;width:13px;height:13px;box-sizing:border-box;border:1px solid #b9c9e2;background:#fff"><div style="left:1px;top:1px;width:9px;height:9px;box-sizing:border-box;border:1px solid #c2c2c2;background:#e9e9e9"></div></div>
<div style="left:1171px;top:285px;width:13px;height:13px;box-sizing:border-box;border:1px solid #b9c9e2;background:#fff"><div style="left:1px;top:1px;width:9px;height:9px;box-sizing:border-box;border:1px solid #c2c2c2;background:#e9e9e9"></div></div>
<div style="left:1606px;top:285px;width:13px;height:13px;box-sizing:border-box;border:1px solid #b9c9e2;background:#fff"><div style="left:1px;top:1px;width:9px;height:9px;box-sizing:border-box;border:1px solid #c2c2c2;background:#e9e9e9"></div></div>
<div style="left:1256px;top:285px;width:13px;height:13px;box-sizing:border-box;border:1px solid #b3c6e2;background:#fff"><div style="left:1px;top:1px;width:9px;height:9px;box-sizing:border-box;border:1px solid #5d7aa6;background:linear-gradient(#b6cdeb,#98b6dd)"></div></div>
<div style="left:653px;top:303px;width:86px;text-align:right;line-height:20px;font-size:11px;color:#6f6f6f;white-space:pre;letter-spacing:-0.3px;">2</div>
<div style="left:742px;top:303px;width:62px;text-align:right;line-height:20px;font-size:11px;color:#6f6f6f;white-space:pre;letter-spacing:-0.3px;">5</div>
<div style="left:811px;top:303px;line-height:20px;font-size:11px;color:#6f6f6f;white-space:pre;letter-spacing:-0.4px;">Euro D</div>
<div style="left:1201px;top:303px;line-height:20px;font-size:11px;color:#6f6f6f;white-space:pre;letter-spacing:-0.9px;">SD-TV</div>
<div style="left:1361px;top:303px;line-height:20px;font-size:11px;color:#6f6f6f;white-space:pre;letter-spacing:0px;">Canal+</div>
<div style="left:1436px;top:303px;line-height:20px;font-size:11px;color:#6f6f6f;white-space:pre;letter-spacing:0px;">Canal +</div>
<div style="left:1507px;top:303px;width:37px;text-align:right;line-height:20px;font-size:11px;color:#6f6f6f;white-space:pre;letter-spacing:-0.3px;">32</div>
<div style="left:1547px;top:303px;width:42px;text-align:right;line-height:20px;font-size:11px;color:#6f6f6f;white-space:pre;letter-spacing:-0.3px;">200</div>
<div style="left:1668px;top:303px;line-height:20px;font-size:11px;color:#6f6f6f;white-space:pre;letter-spacing:-0.3px;">6</div>
<div style="left:1131px;top:306px;width:13px;height:13px;box-sizing:border-box;border:1px solid #b9c9e2;background:#fff"><div style="left:1px;top:1px;width:9px;height:9px;box-sizing:border-box;border:1px solid #c2c2c2;background:#e9e9e9"></div></div>
<div style="left:1171px;top:306px;width:13px;height:13px;box-sizing:border-box;border:1px solid #b9c9e2;background:#fff"><div style="left:1px;top:1px;width:9px;height:9px;box-sizing:border-box;border:1px solid #c2c2c2;background:#e9e9e9"></div></div>
<div style="left:1606px;top:306px;width:13px;height:13px;box-sizing:border-box;border:1px solid #b9c9e2;background:#fff"><div style="left:1px;top:1px;width:9px;height:9px;box-sizing:border-box;border:1px solid #c2c2c2;background:#e9e9e9"></div></div>
<div style="left:1256px;top:306px;width:13px;height:13px;box-sizing:border-box;border:1px solid #b3c6e2;background:#fff"><div style="left:1px;top:1px;width:9px;height:9px;box-sizing:border-box;border:1px solid #5d7aa6;background:linear-gradient(#b6cdeb,#98b6dd)"></div></div>
<div style="left:653px;top:324px;width:86px;text-align:right;line-height:20px;font-size:11px;color:#6f6f6f;white-space:pre;letter-spacing:-0.3px;">3</div>
<div style="left:742px;top:324px;width:62px;text-align:right;line-height:20px;font-size:11px;color:#6f6f6f;white-space:pre;letter-spacing:-0.3px;">6</div>
<div style="left:811px;top:324px;line-height:20px;font-size:11px;color:#6f6f6f;white-space:pre;letter-spacing:-0.4px;">EuroSTAR</div>
<div style="left:1201px;top:324px;line-height:20px;font-size:11px;color:#6f6f6f;white-space:pre;letter-spacing:-0.9px;">SD-TV</div>
<div style="left:1361px;top:324px;line-height:20px;font-size:11px;color:#6f6f6f;white-space:pre;letter-spacing:0px;">Canal+</div>
<div style="left:1436px;top:324px;line-height:20px;font-size:11px;color:#6f6f6f;white-space:pre;letter-spacing:0px;">Canal +</div>
<div style="left:1507px;top:324px;width:37px;text-align:right;line-height:20px;font-size:11px;color:#6f6f6f;white-space:pre;letter-spacing:-0.3px;">32</div>
<div style="left:1547px;top:324px;width:42px;text-align:right;line-height:20px;font-size:11px;color:#6f6f6f;white-space:pre;letter-spacing:-0.3px;">200</div>
<div style="left:1668px;top:324px;line-height:20px;font-size:11px;color:#6f6f6f;white-space:pre;letter-spacing:-0.3px;">6</div>
<div style="left:1131px;top:327px;width:13px;height:13px;box-sizing:border-box;border:1px solid #b9c9e2;background:#fff"><div style="left:1px;top:1px;width:9px;height:9px;box-sizing:border-box;border:1px solid #c2c2c2;background:#e9e9e9"></div></div>
<div style="left:1171px;top:327px;width:13px;height:13px;box-sizing:border-box;border:1px solid #b9c9e2;background:#fff"><div style="left:1px;top:1px;width:9px;height:9px;box-sizing:border-box;border:1px solid #c2c2c2;background:#e9e9e9"></div></div>
<div style="left:1606px;top:327px;width:13px;height:13px;box-sizing:border-box;border:1px solid #b9c9e2;background:#fff"><div style="left:1px;top:1px;width:9px;height:9px;box-sizing:border-box;border:1px solid #c2c2c2;background:#e9e9e9"></div></div>
<div style="left:1256px;top:327px;width:13px;height:13px;box-sizing:border-box;border:1px solid #b3c6e2;background:#fff"><div style="left:1px;top:1px;width:9px;height:9px;box-sizing:border-box;border:1px solid #5d7aa6;background:linear-gradient(#b6cdeb,#98b6dd)"></div></div>
<div style="left:653px;top:345px;width:86px;text-align:right;line-height:20px;font-size:11px;color:#6f6f6f;white-space:pre;letter-spacing:0.6px;font-weight:bold;">4</div>
<div style="left:742px;top:345px;width:62px;text-align:right;line-height:20px;font-size:11px;color:#6f6f6f;white-space:pre;letter-spacing:0.6px;font-weight:bold;">7</div>
<div style="left:811px;top:345px;line-height:20px;font-size:11px;color:#6f6f6f;white-space:pre;letter-spacing:0.6px;font-weight:bold;">NTV Avrupa</div>
<div style="left:1201px;top:345px;line-height:20px;font-size:11px;color:#6f6f6f;white-space:pre;letter-spacing:0.6px;font-weight:bold;">SD-TV</div>
<div style="left:1361px;top:345px;line-height:20px;font-size:11px;color:#6f6f6f;white-space:pre;letter-spacing:0.6px;font-weight:bold;">Canal+</div>
<div style="left:1436px;top:345px;line-height:20px;font-size:11px;color:#6f6f6f;white-space:pre;letter-spacing:0.6px;font-weight:bold;">Canal +</div>
<div style="left:1507px;top:345px;width:37px;text-align:right;line-height:20px;font-size:11px;color:#6f6f6f;white-space:pre;letter-spacing:0.6px;font-weight:bold;">32</div>
<div style="left:1547px;top:345px;width:42px;text-align:right;line-height:20px;font-size:11px;color:#6f6f6f;white-space:pre;letter-spacing:0.6px;font-weight:bold;">200</div>
<div style="left:1665px;top:345px;line-height:20px;font-size:11px;color:#6f6f6f;white-space:pre;letter-spacing:0.6px;font-weight:bold;">622</div>
<div style="left:1131px;top:348px;width:13px;height:13px;box-sizing:border-box;border:1px solid #b9c9e2;background:#fff"><div style="left:1px;top:1px;width:9px;height:9px;box-sizing:border-box;border:1px solid #c2c2c2;background:#e9e9e9"></div></div>
<div style="left:1171px;top:348px;width:13px;height:13px;box-sizing:border-box;border:1px solid #b9c9e2;background:#fff"><div style="left:1px;top:1px;width:9px;height:9px;box-sizing:border-box;border:1px solid #c2c2c2;background:#e9e9e9"></div></div>
<div style="left:1606px;top:348px;width:13px;height:13px;box-sizing:border-box;border:1px solid #b9c9e2;background:#fff"><div style="left:1px;top:1px;width:9px;height:9px;box-sizing:border-box;border:1px solid #c2c2c2;background:#e9e9e9"></div></div>
<div style="left:1256px;top:348px;width:13px;height:13px;box-sizing:border-box;border:1px solid #b3c6e2;background:#fff"><div style="left:1px;top:1px;width:9px;height:9px;box-sizing:border-box;border:1px solid #5d7aa6;background:linear-gradient(#b6cdeb,#98b6dd)"></div></div>
<div style="left:653px;top:366px;width:86px;text-align:right;line-height:20px;font-size:11px;color:#6f6f6f;white-space:pre;letter-spacing:-0.3px;">5</div>
<div style="left:742px;top:366px;width:62px;text-align:right;line-height:20px;font-size:11px;color:#6f6f6f;white-space:pre;letter-spacing:-0.3px;">8</div>
<div style="left:811px;top:366px;line-height:20px;font-size:11px;color:#6f6f6f;white-space:pre;letter-spacing:-0.4px;">Samanyolu TV</div>
<div style="left:1201px;top:366px;line-height:20px;font-size:11px;color:#6f6f6f;white-space:pre;letter-spacing:-0.9px;">SD-TV</div>
<div style="left:1361px;top:366px;line-height:20px;font-size:11px;color:#6f6f6f;white-space:pre;letter-spacing:0px;">Canal+</div>
<div style="left:1436px;top:366px;line-height:20px;font-size:11px;color:#6f6f6f;white-space:pre;letter-spacing:0px;">Canal +</div>
<div style="left:1507px;top:366px;width:37px;text-align:right;line-height:20px;font-size:11px;color:#6f6f6f;white-space:pre;letter-spacing:-0.3px;">32</div>
<div style="left:1547px;top:366px;width:42px;text-align:right;line-height:20px;font-size:11px;color:#6f6f6f;white-space:pre;letter-spacing:-0.3px;">200</div>
<div style="left:1668px;top:366px;line-height:20px;font-size:11px;color:#6f6f6f;white-space:pre;letter-spacing:-0.3px;">6</div>
<div style="left:1131px;top:369px;width:13px;height:13px;box-sizing:border-box;border:1px solid #b9c9e2;background:#fff"><div style="left:1px;top:1px;width:9px;height:9px;box-sizing:border-box;border:1px solid #c2c2c2;background:#e9e9e9"></div></div>
<div style="left:1171px;top:369px;width:13px;height:13px;box-sizing:border-box;border:1px solid #b9c9e2;background:#fff"><div style="left:1px;top:1px;width:9px;height:9px;box-sizing:border-box;border:1px solid #c2c2c2;background:#e9e9e9"></div></div>
<div style="left:1606px;top:369px;width:13px;height:13px;box-sizing:border-box;border:1px solid #b9c9e2;background:#fff"><div style="left:1px;top:1px;width:9px;height:9px;box-sizing:border-box;border:1px solid #c2c2c2;background:#e9e9e9"></div></div>
<div style="left:1256px;top:369px;width:13px;height:13px;box-sizing:border-box;border:1px solid #b3c6e2;background:#fff"><div style="left:1px;top:1px;width:9px;height:9px;box-sizing:border-box;border:1px solid #5d7aa6;background:linear-gradient(#b6cdeb,#98b6dd)"></div></div>
<div style="left:653px;top:387px;width:86px;text-align:right;line-height:20px;font-size:11px;color:#6f6f6f;white-space:pre;letter-spacing:-0.3px;">6</div>
<div style="left:742px;top:387px;width:62px;text-align:right;line-height:20px;font-size:11px;color:#6f6f6f;white-space:pre;letter-spacing:-0.3px;">9</div>
<div style="left:811px;top:387px;line-height:20px;font-size:11px;color:#6f6f6f;white-space:pre;letter-spacing:-0.4px;">Planet Turk</div>
<div style="left:1201px;top:387px;line-height:20px;font-size:11px;color:#6f6f6f;white-space:pre;letter-spacing:-0.9px;">SD-TV</div>
<div style="left:1361px;top:387px;line-height:20px;font-size:11px;color:#6f6f6f;white-space:pre;letter-spacing:0px;">Canal+</div>
<div style="left:1436px;top:387px;line-height:20px;font-size:11px;color:#6f6f6f;white-space:pre;letter-spacing:0px;">Canal +</div>
<div style="left:1507px;top:387px;width:37px;text-align:right;line-height:20px;font-size:11px;color:#6f6f6f;white-space:pre;letter-spacing:-0.3px;">32</div>
<div style="left:1547px;top:387px;width:42px;text-align:right;line-height:20px;font-size:11px;color:#6f6f6f;white-space:pre;letter-spacing:-0.3px;">200</div>
<div style="left:1668px;top:387px;line-height:20px;font-size:11px;color:#6f6f6f;white-space:pre;letter-spacing:-0.3px;">6</div>
<div style="left:1131px;top:390px;width:13px;height:13px;box-sizing:border-box;border:1px solid #b9c9e2;background:#fff"><div style="left:1px;top:1px;width:9px;height:9px;box-sizing:border-box;border:1px solid #c2c2c2;background:#e9e9e9"></div></div>
<div style="left:1171px;top:390px;width:13px;height:13px;box-sizing:border-box;border:1px solid #b9c9e2;background:#fff"><div style="left:1px;top:1px;width:9px;height:9px;box-sizing:border-box;border:1px solid #c2c2c2;background:#e9e9e9"></div></div>
<div style="left:1606px;top:390px;width:13px;height:13px;box-sizing:border-box;border:1px solid #b9c9e2;background:#fff"><div style="left:1px;top:1px;width:9px;height:9px;box-sizing:border-box;border:1px solid #c2c2c2;background:#e9e9e9"></div></div>
<div style="left:1256px;top:390px;width:13px;height:13px;box-sizing:border-box;border:1px solid #b3c6e2;background:#fff"><div style="left:1px;top:1px;width:9px;height:9px;box-sizing:border-box;border:1px solid #5d7aa6;background:linear-gradient(#b6cdeb,#98b6dd)"></div></div>
<div style="left:653px;top:408px;width:86px;text-align:right;line-height:20px;font-size:11px;color:#6f6f6f;white-space:pre;letter-spacing:-0.3px;">7</div>
<div style="left:742px;top:408px;width:62px;text-align:right;line-height:20px;font-size:11px;color:#6f6f6f;white-space:pre;letter-spacing:-0.3px;">10</div>
<div style="left:811px;top:408px;line-height:20px;font-size:11px;color:#6f6f6f;white-space:pre;letter-spacing:-0.4px;">Planet Mutfak</div>
<div style="left:1201px;top:408px;line-height:20px;font-size:11px;color:#6f6f6f;white-space:pre;letter-spacing:-0.9px;">SD-TV</div>
<div style="left:1361px;top:408px;line-height:20px;font-size:11px;color:#6f6f6f;white-space:pre;letter-spacing:0px;">Canal+</div>
<div style="left:1436px;top:408px;line-height:20px;font-size:11px;color:#6f6f6f;white-space:pre;letter-spacing:0px;">Canal +</div>
<div style="left:1507px;top:408px;width:37px;text-align:right;line-height:20px;font-size:11px;color:#6f6f6f;white-space:pre;letter-spacing:-0.3px;">32</div>
<div style="left:1547px;top:408px;width:42px;text-align:right;line-height:20px;font-size:11px;color:#6f6f6f;white-space:pre;letter-spacing:-0.3px;">200</div>
<div style="left:1668px;top:408px;line-height:20px;font-size:11px;color:#6f6f6f;white-space:pre;letter-spacing:-0.3px;">6</div>
<div style="left:1131px;top:411px;width:13px;height:13px;box-sizing:border-box;border:1px solid #b9c9e2;background:#fff"><div style="left:1px;top:1px;width:9px;height:9px;box-sizing:border-box;border:1px solid #c2c2c2;background:#e9e9e9"></div></div>
<div style="left:1171px;top:411px;width:13px;height:13px;box-sizing:border-box;border:1px solid #b9c9e2;background:#fff"><div style="left:1px;top:1px;width:9px;height:9px;box-sizing:border-box;border:1px solid #c2c2c2;background:#e9e9e9"></div></div>
<div style="left:1606px;top:411px;width:13px;height:13px;box-sizing:border-box;border:1px solid #b9c9e2;background:#fff"><div style="left:1px;top:1px;width:9px;height:9px;box-sizing:border-box;border:1px solid #c2c2c2;background:#e9e9e9"></div></div>
<div style="left:1256px;top:411px;width:13px;height:13px;box-sizing:border-box;border:1px solid #b3c6e2;background:#fff"><div style="left:1px;top:1px;width:9px;height:9px;box-sizing:border-box;border:1px solid #5d7aa6;background:linear-gradient(#b6cdeb,#98b6dd)"></div></div>
<div style="left:653px;top:429px;width:86px;text-align:right;line-height:20px;font-size:11px;color:#6f6f6f;white-space:pre;letter-spacing:-0.3px;">16</div>
<div style="left:742px;top:429px;width:62px;text-align:right;line-height:20px;font-size:11px;color:#6f6f6f;white-space:pre;letter-spacing:-0.3px;">11</div>
<div style="left:811px;top:429px;line-height:20px;font-size:11px;color:#6f6f6f;white-space:pre;letter-spacing:-0.4px;">FilmBox HD</div>
<div style="left:1201px;top:429px;line-height:20px;font-size:11px;color:#6f6f6f;white-space:pre;letter-spacing:-0.9px;">SD-TV</div>
<div style="left:1361px;top:429px;line-height:20px;font-size:11px;color:#6f6f6f;white-space:pre;letter-spacing:0px;">Canal+</div>
<div style="left:1436px;top:429px;line-height:20px;font-size:11px;color:#6f6f6f;white-space:pre;letter-spacing:0px;">Canal +</div>
<div style="left:1507px;top:429px;width:37px;text-align:right;line-height:20px;font-size:11px;color:#6f6f6f;white-space:pre;letter-spacing:-0.3px;">33</div>
<div style="left:1547px;top:429px;width:42px;text-align:right;line-height:20px;font-size:11px;color:#6f6f6f;white-space:pre;letter-spacing:-0.3px;">200</div>
<div style="left:1668px;top:429px;line-height:20px;font-size:11px;color:#6f6f6f;white-space:pre;letter-spacing:-0.3px;">6</div>
<div style="left:1131px;top:432px;width:13px;height:13px;box-sizing:border-box;border:1px solid #b9c9e2;background:#fff"><div style="left:1px;top:1px;width:9px;height:9px;box-sizing:border-box;border:1px solid #c2c2c2;background:#e9e9e9"></div></div>
<div style="left:1171px;top:432px;width:13px;height:13px;box-sizing:border-box;border:1px solid #b9c9e2;background:#fff"><div style="left:1px;top:1px;width:9px;height:9px;box-sizing:border-box;border:1px solid #c2c2c2;background:#e9e9e9"></div></div>
<div style="left:1606px;top:432px;width:13px;height:13px;box-sizing:border-box;border:1px solid #b9c9e2;background:#fff"><div style="left:1px;top:1px;width:9px;height:9px;box-sizing:border-box;border:1px solid #c2c2c2;background:#e9e9e9"></div></div>
<div style="left:1256px;top:432px;width:13px;height:13px;box-sizing:border-box;border:1px solid #b3c6e2;background:#fff"><div style="left:1px;top:1px;width:9px;height:9px;box-sizing:border-box;border:1px solid #5d7aa6;background:linear-gradient(#b6cdeb,#98b6dd)"></div></div>
<div style="left:653px;top:450px;width:86px;text-align:right;line-height:20px;font-size:11px;color:#6f6f6f;white-space:pre;letter-spacing:-0.3px;">8</div>
<div style="left:742px;top:450px;width:62px;text-align:right;line-height:20px;font-size:11px;color:#6f6f6f;white-space:pre;letter-spacing:-0.3px;">12</div>
<div style="left:811px;top:450px;line-height:20px;font-size:11px;color:#6f6f6f;white-space:pre;letter-spacing:-0.4px;">Kral Pop TV</div>
<div style="left:1201px;top:450px;line-height:20px;font-size:11px;color:#6f6f6f;white-space:pre;letter-spacing:-0.9px;">SD-TV</div>
<div style="left:1361px;top:450px;line-height:20px;font-size:11px;color:#6f6f6f;white-space:pre;letter-spacing:0px;">Canal+</div>
<div style="left:1436px;top:450px;line-height:20px;font-size:11px;color:#6f6f6f;white-space:pre;letter-spacing:0px;">Canal +</div>
<div style="left:1507px;top:450px;width:37px;text-align:right;line-height:20px;font-size:11px;color:#6f6f6f;white-space:pre;letter-spacing:-0.3px;">32</div>
<div style="left:1547px;top:450px;width:42px;text-align:right;line-height:20px;font-size:11px;color:#6f6f6f;white-space:pre;letter-spacing:-0.3px;">200</div>
<div style="left:1668px;top:450px;line-height:20px;font-size:11px;color:#6f6f6f;white-space:pre;letter-spacing:-0.3px;">6</div>
<div style="left:1131px;top:453px;width:13px;height:13px;box-sizing:border-box;border:1px solid #b9c9e2;background:#fff"><div style="left:1px;top:1px;width:9px;height:9px;box-sizing:border-box;border:1px solid #c2c2c2;background:#e9e9e9"></div></div>
<div style="left:1171px;top:453px;width:13px;height:13px;box-sizing:border-box;border:1px solid #b9c9e2;background:#fff"><div style="left:1px;top:1px;width:9px;height:9px;box-sizing:border-box;border:1px solid #c2c2c2;background:#e9e9e9"></div></div>
<div style="left:1606px;top:453px;width:13px;height:13px;box-sizing:border-box;border:1px solid #b9c9e2;background:#fff"><div style="left:1px;top:1px;width:9px;height:9px;box-sizing:border-box;border:1px solid #c2c2c2;background:#e9e9e9"></div></div>
<div style="left:1256px;top:453px;width:13px;height:13px;box-sizing:border-box;border:1px solid #b3c6e2;background:#fff"><div style="left:1px;top:1px;width:9px;height:9px;box-sizing:border-box;border:1px solid #5d7aa6;background:linear-gradient(#b6cdeb,#98b6dd)"></div></div>
<div style="left:653px;top:471px;width:86px;text-align:right;line-height:20px;font-size:11px;color:#6f6f6f;white-space:pre;letter-spacing:-0.3px;">10</div>
<div style="left:742px;top:471px;width:62px;text-align:right;line-height:20px;font-size:11px;color:#6f6f6f;white-space:pre;letter-spacing:-0.3px;">13</div>
<div style="left:811px;top:471px;line-height:20px;font-size:11px;color:#6f6f6f;white-space:pre;letter-spacing:-0.4px;">BNT1+1</div>
<div style="left:1201px;top:471px;line-height:20px;font-size:11px;color:#6f6f6f;white-space:pre;letter-spacing:-0.9px;">SD-TV</div>
<div style="left:1361px;top:471px;line-height:20px;font-size:11px;color:#6f6f6f;white-space:pre;letter-spacing:0px;">Canal+</div>
<div style="left:1436px;top:471px;line-height:20px;font-size:11px;color:#6f6f6f;white-space:pre;letter-spacing:0px;">Canal +</div>
<div style="left:1507px;top:471px;width:37px;text-align:right;line-height:20px;font-size:11px;color:#6f6f6f;white-space:pre;letter-spacing:-0.3px;">32</div>
<div style="left:1547px;top:471px;width:42px;text-align:right;line-height:20px;font-size:11px;color:#6f6f6f;white-space:pre;letter-spacing:-0.3px;">200</div>
<div style="left:1668px;top:471px;line-height:20px;font-size:11px;color:#6f6f6f;white-space:pre;letter-spacing:-0.3px;">6</div>
<div style="left:1131px;top:474px;width:13px;height:13px;box-sizing:border-box;border:1px solid #b9c9e2;background:#fff"><div style="left:1px;top:1px;width:9px;height:9px;box-sizing:border-box;border:1px solid #c2c2c2;background:#e9e9e9"></div></div>
<div style="left:1171px;top:474px;width:13px;height:13px;box-sizing:border-box;border:1px solid #b9c9e2;background:#fff"><div style="left:1px;top:1px;width:9px;height:9px;box-sizing:border-box;border:1px solid #c2c2c2;background:#e9e9e9"></div></div>
<div style="left:1606px;top:474px;width:13px;height:13px;box-sizing:border-box;border:1px solid #b9c9e2;background:#fff"><div style="left:1px;top:1px;width:9px;height:9px;box-sizing:border-box;border:1px solid #c2c2c2;background:#e9e9e9"></div></div>
<div style="left:1256px;top:474px;width:13px;height:13px;box-sizing:border-box;border:1px solid #b3c6e2;background:#fff"><div style="left:1px;top:1px;width:9px;height:9px;box-sizing:border-box;border:1px solid #5d7aa6;background:linear-gradient(#b6cdeb,#98b6dd)"></div></div>
<div style="left:653px;top:492px;width:86px;text-align:right;line-height:20px;font-size:11px;color:#6f6f6f;white-space:pre;letter-spacing:-0.3px;">11</div>
<div style="left:742px;top:492px;width:62px;text-align:right;line-height:20px;font-size:11px;color:#6f6f6f;white-space:pre;letter-spacing:-0.3px;">14</div>
<div style="left:811px;top:492px;line-height:20px;font-size:11px;color:#6f6f6f;white-space:pre;letter-spacing:-0.4px;">bTV+1</div>
<div style="left:1201px;top:492px;line-height:20px;font-size:11px;color:#6f6f6f;white-space:pre;letter-spacing:-0.9px;">SD-TV</div>
<div style="left:1361px;top:492px;line-height:20px;font-size:11px;color:#6f6f6f;white-space:pre;letter-spacing:0px;">Canal+</div>
<div style="left:1436px;top:492px;line-height:20px;font-size:11px;color:#6f6f6f;white-space:pre;letter-spacing:0px;">Canal +</div>
<div style="left:1507px;top:492px;width:37px;text-align:right;line-height:20px;font-size:11px;color:#6f6f6f;white-space:pre;letter-spacing:-0.3px;">33</div>
<div style="left:1547px;top:492px;width:42px;text-align:right;line-height:20px;font-size:11px;color:#6f6f6f;white-space:pre;letter-spacing:-0.3px;">200</div>
<div style="left:1668px;top:492px;line-height:20px;font-size:11px;color:#6f6f6f;white-space:pre;letter-spacing:-0.3px;">6</div>
<div style="left:1131px;top:495px;width:13px;height:13px;box-sizing:border-box;border:1px solid #b9c9e2;background:#fff"><div style="left:1px;top:1px;width:9px;height:9px;box-sizing:border-box;border:1px solid #c2c2c2;background:#e9e9e9"></div></div>
<div style="left:1171px;top:495px;width:13px;height:13px;box-sizing:border-box;border:1px solid #b9c9e2;background:#fff"><div style="left:1px;top:1px;width:9px;height:9px;box-sizing:border-box;border:1px solid #c2c2c2;background:#e9e9e9"></div></div>
<div style="left:1606px;top:495px;width:13px;height:13px;box-sizing:border-box;border:1px solid #b9c9e2;background:#fff"><div style="left:1px;top:1px;width:9px;height:9px;box-sizing:border-box;border:1px solid #c2c2c2;background:#e9e9e9"></div></div>
<div style="left:1256px;top:495px;width:13px;height:13px;box-sizing:border-box;border:1px solid #b3c6e2;background:#fff"><div style="left:1px;top:1px;width:9px;height:9px;box-sizing:border-box;border:1px solid #5d7aa6;background:linear-gradient(#b6cdeb,#98b6dd)"></div></div>
<div style="left:653px;top:513px;width:86px;text-align:right;line-height:20px;font-size:11px;color:#6f6f6f;white-space:pre;letter-spacing:-0.3px;">13</div>
<div style="left:742px;top:513px;width:62px;text-align:right;line-height:20px;font-size:11px;color:#6f6f6f;white-space:pre;letter-spacing:-0.3px;">15</div>
<div style="left:811px;top:513px;line-height:20px;font-size:11px;color:#6f6f6f;white-space:pre;letter-spacing:-0.4px;">TV7+1</div>
<div style="left:1201px;top:513px;line-height:20px;font-size:11px;color:#6f6f6f;white-space:pre;letter-spacing:-0.9px;">SD-TV</div>
<div style="left:1361px;top:513px;line-height:20px;font-size:11px;color:#6f6f6f;white-space:pre;letter-spacing:0px;">Canal+</div>
<div style="left:1436px;top:513px;line-height:20px;font-size:11px;color:#6f6f6f;white-space:pre;letter-spacing:0px;">Canal +</div>
<div style="left:1507px;top:513px;width:37px;text-align:right;line-height:20px;font-size:11px;color:#6f6f6f;white-space:pre;letter-spacing:-0.3px;">33</div>
<div style="left:1547px;top:513px;width:42px;text-align:right;line-height:20px;font-size:11px;color:#6f6f6f;white-space:pre;letter-spacing:-0.3px;">200</div>
<div style="left:1668px;top:513px;line-height:20px;font-size:11px;color:#6f6f6f;white-space:pre;letter-spacing:-0.3px;">6</div>
<div style="left:1131px;top:516px;width:13px;height:13px;box-sizing:border-box;border:1px solid #b9c9e2;background:#fff"><div style="left:1px;top:1px;width:9px;height:9px;box-sizing:border-box;border:1px solid #c2c2c2;background:#e9e9e9"></div></div>
<div style="left:1171px;top:516px;width:13px;height:13px;box-sizing:border-box;border:1px solid #b9c9e2;background:#fff"><div style="left:1px;top:1px;width:9px;height:9px;box-sizing:border-box;border:1px solid #c2c2c2;background:#e9e9e9"></div></div>
<div style="left:1606px;top:516px;width:13px;height:13px;box-sizing:border-box;border:1px solid #b9c9e2;background:#fff"><div style="left:1px;top:1px;width:9px;height:9px;box-sizing:border-box;border:1px solid #c2c2c2;background:#e9e9e9"></div></div>
<div style="left:1256px;top:516px;width:13px;height:13px;box-sizing:border-box;border:1px solid #b3c6e2;background:#fff"><div style="left:1px;top:1px;width:9px;height:9px;box-sizing:border-box;border:1px solid #5d7aa6;background:linear-gradient(#b6cdeb,#98b6dd)"></div></div>
<div style="left:653px;top:534px;width:86px;text-align:right;line-height:20px;font-size:11px;color:#6f6f6f;white-space:pre;letter-spacing:-0.3px;">14</div>
<div style="left:742px;top:534px;width:62px;text-align:right;line-height:20px;font-size:11px;color:#6f6f6f;white-space:pre;letter-spacing:-0.3px;">16</div>
<div style="left:811px;top:534px;line-height:20px;font-size:11px;color:#6f6f6f;white-space:pre;letter-spacing:-0.4px;">Diema Family+1</div>
<div style="left:1201px;top:534px;line-height:20px;font-size:11px;color:#6f6f6f;white-space:pre;letter-spacing:-0.9px;">SD-TV</div>
<div style="left:1361px;top:534px;line-height:20px;font-size:11px;color:#6f6f6f;white-space:pre;letter-spacing:0px;">Canal+</div>
<div style="left:1436px;top:534px;line-height:20px;font-size:11px;color:#6f6f6f;white-space:pre;letter-spacing:0px;">Canal +</div>
<div style="left:1507px;top:534px;width:37px;text-align:right;line-height:20px;font-size:11px;color:#6f6f6f;white-space:pre;letter-spacing:-0.3px;">33</div>
<div style="left:1547px;top:534px;width:42px;text-align:right;line-height:20px;font-size:11px;color:#6f6f6f;white-space:pre;letter-spacing:-0.3px;">200</div>
<div style="left:1668px;top:534px;line-height:20px;font-size:11px;color:#6f6f6f;white-space:pre;letter-spacing:-0.3px;">6</div>
<div style="left:1131px;top:537px;width:13px;height:13px;box-sizing:border-box;border:1px solid #b9c9e2;background:#fff"><div style="left:1px;top:1px;width:9px;height:9px;box-sizing:border-box;border:1px solid #c2c2c2;background:#e9e9e9"></div></div>
<div style="left:1171px;top:537px;width:13px;height:13px;box-sizing:border-box;border:1px solid #b9c9e2;background:#fff"><div style="left:1px;top:1px;width:9px;height:9px;box-sizing:border-box;border:1px solid #c2c2c2;background:#e9e9e9"></div></div>
<div style="left:1606px;top:537px;width:13px;height:13px;box-sizing:border-box;border:1px solid #b9c9e2;background:#fff"><div style="left:1px;top:1px;width:9px;height:9px;box-sizing:border-box;border:1px solid #c2c2c2;background:#e9e9e9"></div></div>
<div style="left:1256px;top:537px;width:13px;height:13px;box-sizing:border-box;border:1px solid #b3c6e2;background:#fff"><div style="left:1px;top:1px;width:9px;height:9px;box-sizing:border-box;border:1px solid #5d7aa6;background:linear-gradient(#b6cdeb,#98b6dd)"></div></div>
<div style="left:653px;top:555px;width:86px;text-align:right;line-height:20px;font-size:11px;color:#6f6f6f;white-space:pre;letter-spacing:-0.3px;">15</div>
<div style="left:742px;top:555px;width:62px;text-align:right;line-height:20px;font-size:11px;color:#6f6f6f;white-space:pre;letter-spacing:-0.3px;">17</div>
<div style="left:811px;top:555px;line-height:20px;font-size:11px;color:#6f6f6f;white-space:pre;letter-spacing:-0.4px;">bTV Comedy+1</div>
<div style="left:1201px;top:555px;line-height:20px;font-size:11px;color:#6f6f6f;white-space:pre;letter-spacing:-0.9px;">SD-TV</div>
<div style="left:1361px;top:555px;line-height:20px;font-size:11px;color:#6f6f6f;white-space:pre;letter-spacing:0px;">Canal+</div>
<div style="left:1436px;top:555px;line-height:20px;font-size:11px;color:#6f6f6f;white-space:pre;letter-spacing:0px;">Canal +</div>
<div style="left:1507px;top:555px;width:37px;text-align:right;line-height:20px;font-size:11px;color:#6f6f6f;white-space:pre;letter-spacing:-0.3px;">33</div>
<div style="left:1547px;top:555px;width:42px;text-align:right;line-height:20px;font-size:11px;color:#6f6f6f;white-space:pre;letter-spacing:-0.3px;">200</div>
<div style="left:1668px;top:555px;line-height:20px;font-size:11px;color:#6f6f6f;white-space:pre;letter-spacing:-0.3px;">6</div>
<div style="left:1131px;top:558px;width:13px;height:13px;box-sizing:border-box;border:1px solid #b9c9e2;background:#fff"><div style="left:1px;top:1px;width:9px;height:9px;box-sizing:border-box;border:1px solid #c2c2c2;background:#e9e9e9"></div></div>
<div style="left:1171px;top:558px;width:13px;height:13px;box-sizing:border-box;border:1px solid #b9c9e2;background:#fff"><div style="left:1px;top:1px;width:9px;height:9px;box-sizing:border-box;border:1px solid #c2c2c2;background:#e9e9e9"></div></div>
<div style="left:1606px;top:558px;width:13px;height:13px;box-sizing:border-box;border:1px solid #b9c9e2;background:#fff"><div style="left:1px;top:1px;width:9px;height:9px;box-sizing:border-box;border:1px solid #c2c2c2;background:#e9e9e9"></div></div>
<div style="left:1256px;top:558px;width:13px;height:13px;box-sizing:border-box;border:1px solid #b3c6e2;background:#fff"><div style="left:1px;top:1px;width:9px;height:9px;box-sizing:border-box;border:1px solid #5d7aa6;background:linear-gradient(#b6cdeb,#98b6dd)"></div></div>
<div style="left:653px;top:576px;width:86px;text-align:right;line-height:20px;font-size:11px;color:#6f6f6f;white-space:pre;letter-spacing:-0.3px;">17</div>
<div style="left:742px;top:576px;width:62px;text-align:right;line-height:20px;font-size:11px;color:#6f6f6f;white-space:pre;letter-spacing:-0.3px;">18</div>
<div style="left:811px;top:576px;line-height:20px;font-size:11px;color:#6f6f6f;white-space:pre;letter-spacing:-0.4px;">BNT HD+1</div>
<div style="left:1201px;top:576px;line-height:20px;font-size:11px;color:#6f6f6f;white-space:pre;letter-spacing:-0.9px;">SD-TV</div>
<div style="left:1361px;top:576px;line-height:20px;font-size:11px;color:#6f6f6f;white-space:pre;letter-spacing:0px;">Canal+</div>
<div style="left:1436px;top:576px;line-height:20px;font-size:11px;color:#6f6f6f;white-space:pre;letter-spacing:0px;">Canal +</div>
<div style="left:1507px;top:576px;width:37px;text-align:right;line-height:20px;font-size:11px;color:#6f6f6f;white-space:pre;letter-spacing:-0.3px;">33</div>
<div style="left:1547px;top:576px;width:42px;text-align:right;line-height:20px;font-size:11px;color:#6f6f6f;white-space:pre;letter-spacing:-0.3px;">200</div>
<div style="left:1668px;top:576px;line-height:20px;font-size:11px;color:#6f6f6f;white-space:pre;letter-spacing:-0.3px;">6</div>
<div style="left:1131px;top:579px;width:13px;height:13px;box-sizing:border-box;border:1px solid #b9c9e2;background:#fff"><div style="left:1px;top:1px;width:9px;height:9px;box-sizing:border-box;border:1px solid #c2c2c2;background:#e9e9e9"></div></div>
<div style="left:1171px;top:579px;width:13px;height:13px;box-sizing:border-box;border:1px solid #b9c9e2;background:#fff"><div style="left:1px;top:1px;width:9px;height:9px;box-sizing:border-box;border:1px solid #c2c2c2;background:#e9e9e9"></div></div>
<div style="left:1606px;top:579px;width:13px;height:13px;box-sizing:border-box;border:1px solid #b9c9e2;background:#fff"><div style="left:1px;top:1px;width:9px;height:9px;box-sizing:border-box;border:1px solid #c2c2c2;background:#e9e9e9"></div></div>
<div style="left:1256px;top:579px;width:13px;height:13px;box-sizing:border-box;border:1px solid #b3c6e2;background:#fff"><div style="left:1px;top:1px;width:9px;height:9px;box-sizing:border-box;border:1px solid #5d7aa6;background:linear-gradient(#b6cdeb,#98b6dd)"></div></div>
<div style="left:653px;top:597px;width:86px;text-align:right;line-height:20px;font-size:11px;color:#6f6f6f;white-space:pre;letter-spacing:-0.3px;">18</div>
<div style="left:742px;top:597px;width:62px;text-align:right;line-height:20px;font-size:11px;color:#6f6f6f;white-space:pre;letter-spacing:-0.3px;">19</div>
<div style="left:811px;top:597px;line-height:20px;font-size:11px;color:#6f6f6f;white-space:pre;letter-spacing:-0.4px;"> Disc Sci HD</div>
<div style="left:1201px;top:597px;line-height:20px;font-size:11px;color:#6f6f6f;white-space:pre;letter-spacing:-0.9px;">SD-TV</div>
<div style="left:1361px;top:597px;line-height:20px;font-size:11px;color:#6f6f6f;white-space:pre;letter-spacing:0px;">Canal+</div>
<div style="left:1436px;top:597px;line-height:20px;font-size:11px;color:#6f6f6f;white-space:pre;letter-spacing:0px;">Canal +</div>
<div style="left:1507px;top:597px;width:37px;text-align:right;line-height:20px;font-size:11px;color:#6f6f6f;white-space:pre;letter-spacing:-0.3px;">31</div>
<div style="left:1547px;top:597px;width:42px;text-align:right;line-height:20px;font-size:11px;color:#6f6f6f;white-space:pre;letter-spacing:-0.3px;">200</div>
<div style="left:1668px;top:597px;line-height:20px;font-size:11px;color:#6f6f6f;white-space:pre;letter-spacing:-0.3px;">6</div>
<div style="left:1131px;top:600px;width:13px;height:13px;box-sizing:border-box;border:1px solid #b9c9e2;background:#fff"><div style="left:1px;top:1px;width:9px;height:9px;box-sizing:border-box;border:1px solid #c2c2c2;background:#e9e9e9"></div></div>
<div style="left:1171px;top:600px;width:13px;height:13px;box-sizing:border-box;border:1px solid #b9c9e2;background:#fff"><div style="left:1px;top:1px;width:9px;height:9px;box-sizing:border-box;border:1px solid #c2c2c2;background:#e9e9e9"></div></div>
<div style="left:1606px;top:600px;width:13px;height:13px;box-sizing:border-box;border:1px solid #b9c9e2;background:#fff"><div style="left:1px;top:1px;width:9px;height:9px;box-sizing:border-box;border:1px solid #c2c2c2;background:#e9e9e9"></div></div>
<div style="left:1256px;top:600px;width:13px;height:13px;box-sizing:border-box;border:1px solid #b3c6e2;background:#fff"><div style="left:1px;top:1px;width:9px;height:9px;box-sizing:border-box;border:1px solid #5d7aa6;background:linear-gradient(#b6cdeb,#98b6dd)"></div></div>
<div style="left:653px;top:618px;width:86px;text-align:right;line-height:20px;font-size:11px;color:#6f6f6f;white-space:pre;letter-spacing:-0.3px;">19</div>
<div style="left:742px;top:618px;width:62px;text-align:right;line-height:20px;font-size:11px;color:#6f6f6f;white-space:pre;letter-spacing:-0.3px;">20</div>
<div style="left:811px;top:618px;line-height:20px;font-size:11px;color:#6f6f6f;white-space:pre;letter-spacing:-0.4px;">Nova Sport HD</div>
<div style="left:1201px;top:618px;line-height:20px;font-size:11px;color:#6f6f6f;white-space:pre;letter-spacing:-0.9px;">SD-TV</div>
<div style="left:1361px;top:618px;line-height:20px;font-size:11px;color:#6f6f6f;white-space:pre;letter-spacing:0px;">Canal+</div>
<div style="left:1436px;top:618px;line-height:20px;font-size:11px;color:#6f6f6f;white-space:pre;letter-spacing:0px;">Canal +</div>
<div style="left:1507px;top:618px;width:37px;text-align:right;line-height:20px;font-size:11px;color:#6f6f6f;white-space:pre;letter-spacing:-0.3px;">31</div>
<div style="left:1547px;top:618px;width:42px;text-align:right;line-height:20px;font-size:11px;color:#6f6f6f;white-space:pre;letter-spacing:-0.3px;">200</div>
<div style="left:1668px;top:618px;line-height:20px;font-size:11px;color:#6f6f6f;white-space:pre;letter-spacing:-0.3px;">6</div>
<div style="left:1131px;top:621px;width:13px;height:13px;box-sizing:border-box;border:1px solid #b9c9e2;background:#fff"><div style="left:1px;top:1px;width:9px;height:9px;box-sizing:border-box;border:1px solid #c2c2c2;background:#e9e9e9"></div></div>
<div style="left:1171px;top:621px;width:13px;height:13px;box-sizing:border-box;border:1px solid #b9c9e2;background:#fff"><div style="left:1px;top:1px;width:9px;height:9px;box-sizing:border-box;border:1px solid #c2c2c2;background:#e9e9e9"></div></div>
<div style="left:1606px;top:621px;width:13px;height:13px;box-sizing:border-box;border:1px solid #b9c9e2;background:#fff"><div style="left:1px;top:1px;width:9px;height:9px;box-sizing:border-box;border:1px solid #c2c2c2;background:#e9e9e9"></div></div>
<div style="left:1256px;top:621px;width:13px;height:13px;box-sizing:border-box;border:1px solid #b3c6e2;background:#fff"><div style="left:1px;top:1px;width:9px;height:9px;box-sizing:border-box;border:1px solid #5d7aa6;background:linear-gradient(#b6cdeb,#98b6dd)"></div></div>
<div style="left:653px;top:639px;width:86px;text-align:right;line-height:20px;font-size:11px;color:#6f6f6f;white-space:pre;letter-spacing:-0.3px;">20</div>
<div style="left:742px;top:639px;width:62px;text-align:right;line-height:20px;font-size:11px;color:#6f6f6f;white-space:pre;letter-spacing:-0.3px;">21</div>
<div style="left:811px;top:639px;line-height:20px;font-size:11px;color:#6f6f6f;white-space:pre;letter-spacing:-0.4px;">BNT HD</div>
<div style="left:1201px;top:639px;line-height:20px;font-size:11px;color:#6f6f6f;white-space:pre;letter-spacing:-0.9px;">SD-TV</div>
<div style="left:1361px;top:639px;line-height:20px;font-size:11px;color:#6f6f6f;white-space:pre;letter-spacing:0px;">Canal+</div>
<div style="left:1436px;top:639px;line-height:20px;font-size:11px;color:#6f6f6f;white-space:pre;letter-spacing:0px;">Canal +</div>
<div style="left:1507px;top:639px;width:37px;text-align:right;line-height:20px;font-size:11px;color:#6f6f6f;white-space:pre;letter-spacing:-0.3px;">31</div>
<div style="left:1547px;top:639px;width:42px;text-align:right;line-height:20px;font-size:11px;color:#6f6f6f;white-space:pre;letter-spacing:-0.3px;">200</div>
<div style="left:1668px;top:639px;line-height:20px;font-size:11px;color:#6f6f6f;white-space:pre;letter-spacing:-0.3px;">6</div>
<div style="left:1131px;top:642px;width:13px;height:13px;box-sizing:border-box;border:1px solid #b9c9e2;background:#fff"><div style="left:1px;top:1px;width:9px;height:9px;box-sizing:border-box;border:1px solid #c2c2c2;background:#e9e9e9"></div></div>
<div style="left:1171px;top:642px;width:13px;height:13px;box-sizing:border-box;border:1px solid #b9c9e2;background:#fff"><div style="left:1px;top:1px;width:9px;height:9px;box-sizing:border-box;border:1px solid #c2c2c2;background:#e9e9e9"></div></div>
<div style="left:1606px;top:642px;width:13px;height:13px;box-sizing:border-box;border:1px solid #b9c9e2;background:#fff"><div style="left:1px;top:1px;width:9px;height:9px;box-sizing:border-box;border:1px solid #c2c2c2;background:#e9e9e9"></div></div>
<div style="left:1256px;top:642px;width:13px;height:13px;box-sizing:border-box;border:1px solid #b3c6e2;background:#fff"><div style="left:1px;top:1px;width:9px;height:9px;box-sizing:border-box;border:1px solid #5d7aa6;background:linear-gradient(#b6cdeb,#98b6dd)"></div></div>
<div style="left:653px;top:660px;width:86px;text-align:right;line-height:20px;font-size:11px;color:#6f6f6f;white-space:pre;letter-spacing:-0.3px;">21</div>
<div style="left:742px;top:660px;width:62px;text-align:right;line-height:20px;font-size:11px;color:#6f6f6f;white-space:pre;letter-spacing:-0.3px;">22</div>
<div style="left:811px;top:660px;line-height:20px;font-size:11px;color:#6f6f6f;white-space:pre;letter-spacing:-0.4px;">Fen Folk TV</div>
<div style="left:1201px;top:660px;line-height:20px;font-size:11px;color:#6f6f6f;white-space:pre;letter-spacing:-0.9px;">SD-TV</div>
<div style="left:1361px;top:660px;line-height:20px;font-size:11px;color:#6f6f6f;white-space:pre;letter-spacing:0px;">Canal+</div>
<div style="left:1436px;top:660px;line-height:20px;font-size:11px;color:#6f6f6f;white-space:pre;letter-spacing:0px;">Canal +</div>
<div style="left:1507px;top:660px;width:37px;text-align:right;line-height:20px;font-size:11px;color:#6f6f6f;white-space:pre;letter-spacing:-0.3px;">34</div>
<div style="left:1547px;top:660px;width:42px;text-align:right;line-height:20px;font-size:11px;color:#6f6f6f;white-space:pre;letter-spacing:-0.3px;">200</div>
<div style="left:1668px;top:660px;line-height:20px;font-size:11px;color:#6f6f6f;white-space:pre;letter-spacing:-0.3px;">6</div>
<div style="left:1131px;top:663px;width:13px;height:13px;box-sizing:border-box;border:1px solid #b9c9e2;background:#fff"><div style="left:1px;top:1px;width:9px;height:9px;box-sizing:border-box;border:1px solid #c2c2c2;background:#e9e9e9"></div></div>
<div style="left:1171px;top:663px;width:13px;height:13px;box-sizing:border-box;border:1px solid #b9c9e2;background:#fff"><div style="left:1px;top:1px;width:9px;height:9px;box-sizing:border-box;border:1px solid #c2c2c2;background:#e9e9e9"></div></div>
<div style="left:1606px;top:663px;width:13px;height:13px;box-sizing:border-box;border:1px solid #b9c9e2;background:#fff"><div style="left:1px;top:1px;width:9px;height:9px;box-sizing:border-box;border:1px solid #c2c2c2;background:#e9e9e9"></div></div>
<div style="left:1256px;top:663px;width:13px;height:13px;box-sizing:border-box;border:1px solid #b3c6e2;background:#fff"><div style="left:1px;top:1px;width:9px;height:9px;box-sizing:border-box;border:1px solid #5d7aa6;background:linear-gradient(#b6cdeb,#98b6dd)"></div></div>
<div style="left:653px;top:681px;width:86px;text-align:right;line-height:20px;font-size:11px;color:#6f6f6f;white-space:pre;letter-spacing:-0.3px;">22</div>
<div style="left:742px;top:681px;width:62px;text-align:right;line-height:20px;font-size:11px;color:#6f6f6f;white-space:pre;letter-spacing:-0.3px;">23</div>
<div style="left:811px;top:681px;line-height:20px;font-size:11px;color:#6f6f6f;white-space:pre;letter-spacing:-0.4px;">BG Music HD</div>
<div style="left:1201px;top:681px;line-height:20px;font-size:11px;color:#6f6f6f;white-space:pre;letter-spacing:-0.9px;">SD-TV</div>
<div style="left:1361px;top:681px;line-height:20px;font-size:11px;color:#6f6f6f;white-space:pre;letter-spacing:0px;">Canal+</div>
<div style="left:1436px;top:681px;line-height:20px;font-size:11px;color:#6f6f6f;white-space:pre;letter-spacing:0px;">Canal +</div>
<div style="left:1507px;top:681px;width:37px;text-align:right;line-height:20px;font-size:11px;color:#6f6f6f;white-space:pre;letter-spacing:-0.3px;">34</div>
<div style="left:1547px;top:681px;width:42px;text-align:right;line-height:20px;font-size:11px;color:#6f6f6f;white-space:pre;letter-spacing:-0.3px;">200</div>
<div style="left:1668px;top:681px;line-height:20px;font-size:11px;color:#6f6f6f;white-space:pre;letter-spacing:-0.3px;">6</div>
<div style="left:1131px;top:684px;width:13px;height:13px;box-sizing:border-box;border:1px solid #b9c9e2;background:#fff"><div style="left:1px;top:1px;width:9px;height:9px;box-sizing:border-box;border:1px solid #c2c2c2;background:#e9e9e9"></div></div>
<div style="left:1171px;top:684px;width:13px;height:13px;box-sizing:border-box;border:1px solid #b9c9e2;background:#fff"><div style="left:1px;top:1px;width:9px;height:9px;box-sizing:border-box;border:1px solid #c2c2c2;background:#e9e9e9"></div></div>
<div style="left:1606px;top:684px;width:13px;height:13px;box-sizing:border-box;border:1px solid #b9c9e2;background:#fff"><div style="left:1px;top:1px;width:9px;height:9px;box-sizing:border-box;border:1px solid #c2c2c2;background:#e9e9e9"></div></div>
<div style="left:1256px;top:684px;width:13px;height:13px;box-sizing:border-box;border:1px solid #b3c6e2;background:#fff"><div style="left:1px;top:1px;width:9px;height:9px;box-sizing:border-box;border:1px solid #5d7aa6;background:linear-gradient(#b6cdeb,#98b6dd)"></div></div>
<div style="left:653px;top:702px;width:86px;text-align:right;line-height:20px;font-size:11px;color:#6f6f6f;white-space:pre;letter-spacing:-0.3px;">23</div>
<div style="left:742px;top:702px;width:62px;text-align:right;line-height:20px;font-size:11px;color:#6f6f6f;white-space:pre;letter-spacing:-0.3px;">24</div>
<div style="left:811px;top:702px;line-height:20px;font-size:11px;color:#6f6f6f;white-space:pre;letter-spacing:-0.4px;">Balkanika Music TV HD</div>
<div style="left:1201px;top:702px;line-height:20px;font-size:11px;color:#6f6f6f;white-space:pre;letter-spacing:-0.9px;">SD-TV</div>
<div style="left:1361px;top:702px;line-height:20px;font-size:11px;color:#6f6f6f;white-space:pre;letter-spacing:0px;">Canal+</div>
<div style="left:1436px;top:702px;line-height:20px;font-size:11px;color:#6f6f6f;white-space:pre;letter-spacing:0px;">Canal +</div>
<div style="left:1507px;top:702px;width:37px;text-align:right;line-height:20px;font-size:11px;color:#6f6f6f;white-space:pre;letter-spacing:-0.3px;">34</div>
<div style="left:1547px;top:702px;width:42px;text-align:right;line-height:20px;font-size:11px;color:#6f6f6f;white-space:pre;letter-spacing:-0.3px;">200</div>
<div style="left:1668px;top:702px;line-height:20px;font-size:11px;color:#6f6f6f;white-space:pre;letter-spacing:-0.3px;">6</div>
<div style="left:1131px;top:705px;width:13px;height:13px;box-sizing:border-box;border:1px solid #b9c9e2;background:#fff"><div style="left:1px;top:1px;width:9px;height:9px;box-sizing:border-box;border:1px solid #c2c2c2;background:#e9e9e9"></div></div>
<div style="left:1171px;top:705px;width:13px;height:13px;box-sizing:border-box;border:1px solid #b9c9e2;background:#fff"><div style="left:1px;top:1px;width:9px;height:9px;box-sizing:border-box;border:1px solid #c2c2c2;background:#e9e9e9"></div></div>
<div style="left:1606px;top:705px;width:13px;height:13px;box-sizing:border-box;border:1px solid #b9c9e2;background:#fff"><div style="left:1px;top:1px;width:9px;height:9px;box-sizing:border-box;border:1px solid #c2c2c2;background:#e9e9e9"></div></div>
<div style="left:1256px;top:705px;width:13px;height:13px;box-sizing:border-box;border:1px solid #b3c6e2;background:#fff"><div style="left:1px;top:1px;width:9px;height:9px;box-sizing:border-box;border:1px solid #5d7aa6;background:linear-gradient(#b6cdeb,#98b6dd)"></div></div>
<div style="left:653px;top:723px;width:86px;text-align:right;line-height:20px;font-size:11px;color:#6f6f6f;white-space:pre;letter-spacing:-0.3px;">24</div>
<div style="left:742px;top:723px;width:62px;text-align:right;line-height:20px;font-size:11px;color:#6f6f6f;white-space:pre;letter-spacing:-0.3px;">25</div>
<div style="left:811px;top:723px;line-height:20px;font-size:11px;color:#6f6f6f;white-space:pre;letter-spacing:-0.4px;">Fen TV HD</div>
<div style="left:1201px;top:723px;line-height:20px;font-size:11px;color:#6f6f6f;white-space:pre;letter-spacing:-0.9px;">SD-TV</div>
<div style="left:1361px;top:723px;line-height:20px;font-size:11px;color:#6f6f6f;white-space:pre;letter-spacing:0px;">Canal+</div>
<div style="left:1436px;top:723px;line-height:20px;font-size:11px;color:#6f6f6f;white-space:pre;letter-spacing:0px;">Canal +</div>
<div style="left:1507px;top:723px;width:37px;text-align:right;line-height:20px;font-size:11px;color:#6f6f6f;white-space:pre;letter-spacing:-0.3px;">34</div>
<div style="left:1547px;top:723px;width:42px;text-align:right;line-height:20px;font-size:11px;color:#6f6f6f;white-space:pre;letter-spacing:-0.3px;">200</div>
<div style="left:1668px;top:723px;line-height:20px;font-size:11px;color:#6f6f6f;white-space:pre;letter-spacing:-0.3px;">6</div>
<div style="left:1131px;top:726px;width:13px;height:13px;box-sizing:border-box;border:1px solid #b9c9e2;background:#fff"><div style="left:1px;top:1px;width:9px;height:9px;box-sizing:border-box;border:1px solid #c2c2c2;background:#e9e9e9"></div></div>
<div style="left:1171px;top:726px;width:13px;height:13px;box-sizing:border-box;border:1px solid #b9c9e2;background:#fff"><div style="left:1px;top:1px;width:9px;height:9px;box-sizing:border-box;border:1px solid #c2c2c2;background:#e9e9e9"></div></div>
<div style="left:1606px;top:726px;width:13px;height:13px;box-sizing:border-box;border:1px solid #b9c9e2;background:#fff"><div style="left:1px;top:1px;width:9px;height:9px;box-sizing:border-box;border:1px solid #c2c2c2;background:#e9e9e9"></div></div>
<div style="left:1256px;top:726px;width:13px;height:13px;box-sizing:border-box;border:1px solid #b3c6e2;background:#fff"><div style="left:1px;top:1px;width:9px;height:9px;box-sizing:border-box;border:1px solid #5d7aa6;background:linear-gradient(#b6cdeb,#98b6dd)"></div></div>
<div style="left:653px;top:744px;width:86px;text-align:right;line-height:20px;font-size:11px;color:#6f6f6f;white-space:pre;letter-spacing:-0.3px;">25</div>
<div style="left:742px;top:744px;width:62px;text-align:right;line-height:20px;font-size:11px;color:#6f6f6f;white-space:pre;letter-spacing:-0.3px;">26</div>
<div style="left:811px;top:744px;line-height:20px;font-size:11px;color:#6f6f6f;white-space:pre;letter-spacing:-0.4px;">BNT HD+12</div>
<div style="left:1201px;top:744px;line-height:20px;font-size:11px;color:#6f6f6f;white-space:pre;letter-spacing:-0.9px;">SD-TV</div>
<div style="left:1361px;top:744px;line-height:20px;font-size:11px;color:#6f6f6f;white-space:pre;letter-spacing:0px;">Canal+</div>
<div style="left:1436px;top:744px;line-height:20px;font-size:11px;color:#6f6f6f;white-space:pre;letter-spacing:0px;">Canal +</div>
<div style="left:1507px;top:744px;width:37px;text-align:right;line-height:20px;font-size:11px;color:#6f6f6f;white-space:pre;letter-spacing:-0.3px;">34</div>
<div style="left:1547px;top:744px;width:42px;text-align:right;line-height:20px;font-size:11px;color:#6f6f6f;white-space:pre;letter-spacing:-0.3px;">200</div>
<div style="left:1668px;top:744px;line-height:20px;font-size:11px;color:#6f6f6f;white-space:pre;letter-spacing:-0.3px;">6</div>
<div style="left:1131px;top:747px;width:13px;height:13px;box-sizing:border-box;border:1px solid #b9c9e2;background:#fff"><div style="left:1px;top:1px;width:9px;height:9px;box-sizing:border-box;border:1px solid #c2c2c2;background:#e9e9e9"></div></div>
<div style="left:1171px;top:747px;width:13px;height:13px;box-sizing:border-box;border:1px solid #b9c9e2;background:#fff"><div style="left:1px;top:1px;width:9px;height:9px;box-sizing:border-box;border:1px solid #c2c2c2;background:#e9e9e9"></div></div>
<div style="left:1606px;top:747px;width:13px;height:13px;box-sizing:border-box;border:1px solid #b9c9e2;background:#fff"><div style="left:1px;top:1px;width:9px;height:9px;box-sizing:border-box;border:1px solid #c2c2c2;background:#e9e9e9"></div></div>
<div style="left:1256px;top:747px;width:13px;height:13px;box-sizing:border-box;border:1px solid #b3c6e2;background:#fff"><div style="left:1px;top:1px;width:9px;height:9px;box-sizing:border-box;border:1px solid #5d7aa6;background:linear-gradient(#b6cdeb,#98b6dd)"></div></div>
<div style="left:653px;top:765px;width:86px;text-align:right;line-height:20px;font-size:11px;color:#6f6f6f;white-space:pre;letter-spacing:-0.3px;">27</div>
<div style="left:742px;top:765px;width:62px;text-align:right;line-height:20px;font-size:11px;color:#6f6f6f;white-space:pre;letter-spacing:-0.3px;">27</div>
<div style="left:811px;top:765px;line-height:20px;font-size:11px;color:#6f6f6f;white-space:pre;letter-spacing:-0.4px;">bTV Cinema</div>
<div style="left:1201px;top:765px;line-height:20px;font-size:11px;color:#6f6f6f;white-space:pre;letter-spacing:-0.9px;">SD-TV</div>
<div style="left:1361px;top:765px;line-height:20px;font-size:11px;color:#6f6f6f;white-space:pre;letter-spacing:0px;">Canal+</div>
<div style="left:1436px;top:765px;line-height:20px;font-size:11px;color:#6f6f6f;white-space:pre;letter-spacing:0px;">Canal +</div>
<div style="left:1507px;top:765px;width:37px;text-align:right;line-height:20px;font-size:11px;color:#6f6f6f;white-space:pre;letter-spacing:-0.3px;">2</div>
<div style="left:1547px;top:765px;width:42px;text-align:right;line-height:20px;font-size:11px;color:#6f6f6f;white-space:pre;letter-spacing:-0.3px;">200</div>
<div style="left:1668px;top:765px;line-height:20px;font-size:11px;color:#6f6f6f;white-space:pre;letter-spacing:-0.3px;">6</div>
<div style="left:1131px;top:768px;width:13px;height:13px;box-sizing:border-box;border:1px solid #b9c9e2;background:#fff"><div style="left:1px;top:1px;width:9px;height:9px;box-sizing:border-box;border:1px solid #c2c2c2;background:#e9e9e9"></div></div>
<div style="left:1171px;top:768px;width:13px;height:13px;box-sizing:border-box;border:1px solid #b9c9e2;background:#fff"><div style="left:1px;top:1px;width:9px;height:9px;box-sizing:border-box;border:1px solid #c2c2c2;background:#e9e9e9"></div></div>
<div style="left:1606px;top:768px;width:13px;height:13px;box-sizing:border-box;border:1px solid #b9c9e2;background:#fff"><div style="left:1px;top:1px;width:9px;height:9px;box-sizing:border-box;border:1px solid #c2c2c2;background:#e9e9e9"></div></div>
<div style="left:1256px;top:768px;width:13px;height:13px;box-sizing:border-box;border:1px solid #b3c6e2;background:#fff"><div style="left:1px;top:1px;width:9px;height:9px;box-sizing:border-box;border:1px solid #5d7aa6;background:linear-gradient(#b6cdeb,#98b6dd)"></div></div>
<div style="left:653px;top:786px;width:86px;text-align:right;line-height:20px;font-size:11px;color:#6f6f6f;white-space:pre;letter-spacing:-0.3px;">28</div>
<div style="left:742px;top:786px;width:62px;text-align:right;line-height:20px;font-size:11px;color:#6f6f6f;white-space:pre;letter-spacing:-0.3px;">28</div>
<div style="left:811px;top:786px;line-height:20px;font-size:11px;color:#6f6f6f;white-space:pre;letter-spacing:-0.4px;">KinoNova</div>
<div style="left:1201px;top:786px;line-height:20px;font-size:11px;color:#6f6f6f;white-space:pre;letter-spacing:-0.9px;">SD-TV</div>
<div style="left:1361px;top:786px;line-height:20px;font-size:11px;color:#6f6f6f;white-space:pre;letter-spacing:0px;">Canal+</div>
<div style="left:1436px;top:786px;line-height:20px;font-size:11px;color:#6f6f6f;white-space:pre;letter-spacing:0px;">Canal +</div>
<div style="left:1507px;top:786px;width:37px;text-align:right;line-height:20px;font-size:11px;color:#6f6f6f;white-space:pre;letter-spacing:-0.3px;">2</div>
<div style="left:1547px;top:786px;width:42px;text-align:right;line-height:20px;font-size:11px;color:#6f6f6f;white-space:pre;letter-spacing:-0.3px;">200</div>
<div style="left:1668px;top:786px;line-height:20px;font-size:11px;color:#6f6f6f;white-space:pre;letter-spacing:-0.3px;">6</div>
<div style="left:1131px;top:789px;width:13px;height:13px;box-sizing:border-box;border:1px solid #b9c9e2;background:#fff"><div style="left:1px;top:1px;width:9px;height:9px;box-sizing:border-box;border:1px solid #c2c2c2;background:#e9e9e9"></div></div>
<div style="left:1171px;top:789px;width:13px;height:13px;box-sizing:border-box;border:1px solid #b9c9e2;background:#fff"><div style="left:1px;top:1px;width:9px;height:9px;box-sizing:border-box;border:1px solid #c2c2c2;background:#e9e9e9"></div></div>
<div style="left:1606px;top:789px;width:13px;height:13px;box-sizing:border-box;border:1px solid #b9c9e2;background:#fff"><div style="left:1px;top:1px;width:9px;height:9px;box-sizing:border-box;border:1px solid #c2c2c2;background:#e9e9e9"></div></div>
<div style="left:1256px;top:789px;width:13px;height:13px;box-sizing:border-box;border:1px solid #b3c6e2;background:#fff"><div style="left:1px;top:1px;width:9px;height:9px;box-sizing:border-box;border:1px solid #5d7aa6;background:linear-gradient(#b6cdeb,#98b6dd)"></div></div>
<div style="left:653px;top:807px;width:86px;text-align:right;line-height:20px;font-size:11px;color:#6f6f6f;white-space:pre;letter-spacing:-0.3px;">29</div>
<div style="left:742px;top:807px;width:62px;text-align:right;line-height:20px;font-size:11px;color:#6f6f6f;white-space:pre;letter-spacing:-0.3px;">29</div>
<div style="left:811px;top:807px;line-height:20px;font-size:11px;color:#6f6f6f;white-space:pre;letter-spacing:-0.4px;">Diema Family</div>
<div style="left:1201px;top:807px;line-height:20px;font-size:11px;color:#6f6f6f;white-space:pre;letter-spacing:-0.9px;">SD-TV</div>
<div style="left:1361px;top:807px;line-height:20px;font-size:11px;color:#6f6f6f;white-space:pre;letter-spacing:0px;">Canal+</div>
<div style="left:1436px;top:807px;line-height:20px;font-size:11px;color:#6f6f6f;white-space:pre;letter-spacing:0px;">Canal +</div>
<div style="left:1507px;top:807px;width:37px;text-align:right;line-height:20px;font-size:11px;color:#6f6f6f;white-space:pre;letter-spacing:-0.3px;">2</div>
<div style="left:1547px;top:807px;width:42px;text-align:right;line-height:20px;font-size:11px;color:#6f6f6f;white-space:pre;letter-spacing:-0.3px;">200</div>
<div style="left:1668px;top:807px;line-height:20px;font-size:11px;color:#6f6f6f;white-space:pre;letter-spacing:-0.3px;">6</div>
<div style="left:1131px;top:810px;width:13px;height:13px;box-sizing:border-box;border:1px solid #b9c9e2;background:#fff"><div style="left:1px;top:1px;width:9px;height:9px;box-sizing:border-box;border:1px solid #c2c2c2;background:#e9e9e9"></div></div>
<div style="left:1171px;top:810px;width:13px;height:13px;box-sizing:border-box;border:1px solid #b9c9e2;background:#fff"><div style="left:1px;top:1px;width:9px;height:9px;box-sizing:border-box;border:1px solid #c2c2c2;background:#e9e9e9"></div></div>
<div style="left:1606px;top:810px;width:13px;height:13px;box-sizing:border-box;border:1px solid #b9c9e2;background:#fff"><div style="left:1px;top:1px;width:9px;height:9px;box-sizing:border-box;border:1px solid #c2c2c2;background:#e9e9e9"></div></div>
<div style="left:1256px;top:810px;width:13px;height:13px;box-sizing:border-box;border:1px solid #b3c6e2;background:#fff"><div style="left:1px;top:1px;width:9px;height:9px;box-sizing:border-box;border:1px solid #5d7aa6;background:linear-gradient(#b6cdeb,#98b6dd)"></div></div>
<div style="left:653px;top:828px;width:86px;text-align:right;line-height:20px;font-size:11px;color:#6f6f6f;white-space:pre;letter-spacing:-0.3px;">30</div>
<div style="left:742px;top:828px;width:62px;text-align:right;line-height:20px;font-size:11px;color:#6f6f6f;white-space:pre;letter-spacing:-0.3px;">30</div>
<div style="left:811px;top:828px;line-height:20px;font-size:11px;color:#6f6f6f;white-space:pre;letter-spacing:-0.4px;">nova Sport</div>
<div style="left:1201px;top:828px;line-height:20px;font-size:11px;color:#6f6f6f;white-space:pre;letter-spacing:-0.9px;">SD-TV</div>
<div style="left:1361px;top:828px;line-height:20px;font-size:11px;color:#6f6f6f;white-space:pre;letter-spacing:0px;">Canal+</div>
<div style="left:1436px;top:828px;line-height:20px;font-size:11px;color:#6f6f6f;white-space:pre;letter-spacing:0px;">Canal +</div>
<div style="left:1507px;top:828px;width:37px;text-align:right;line-height:20px;font-size:11px;color:#6f6f6f;white-space:pre;letter-spacing:-0.3px;">2</div>
<div style="left:1547px;top:828px;width:42px;text-align:right;line-height:20px;font-size:11px;color:#6f6f6f;white-space:pre;letter-spacing:-0.3px;">200</div>
<div style="left:1668px;top:828px;line-height:20px;font-size:11px;color:#6f6f6f;white-space:pre;letter-spacing:-0.3px;">6</div>
<div style="left:1131px;top:831px;width:13px;height:13px;box-sizing:border-box;border:1px solid #b9c9e2;background:#fff"><div style="left:1px;top:1px;width:9px;height:9px;box-sizing:border-box;border:1px solid #c2c2c2;background:#e9e9e9"></div></div>
<div style="left:1171px;top:831px;width:13px;height:13px;box-sizing:border-box;border:1px solid #b9c9e2;background:#fff"><div style="left:1px;top:1px;width:9px;height:9px;box-sizing:border-box;border:1px solid #c2c2c2;background:#e9e9e9"></div></div>
<div style="left:1606px;top:831px;width:13px;height:13px;box-sizing:border-box;border:1px solid #b9c9e2;background:#fff"><div style="left:1px;top:1px;width:9px;height:9px;box-sizing:border-box;border:1px solid #c2c2c2;background:#e9e9e9"></div></div>
<div style="left:1256px;top:831px;width:13px;height:13px;box-sizing:border-box;border:1px solid #b3c6e2;background:#fff"><div style="left:1px;top:1px;width:9px;height:9px;box-sizing:border-box;border:1px solid #5d7aa6;background:linear-gradient(#b6cdeb,#98b6dd)"></div></div>
<div style="left:653px;top:849px;width:86px;text-align:right;line-height:20px;font-size:11px;color:#6f6f6f;white-space:pre;letter-spacing:-0.3px;">31</div>
<div style="left:742px;top:849px;width:62px;text-align:right;line-height:20px;font-size:11px;color:#6f6f6f;white-space:pre;letter-spacing:-0.3px;">31</div>
<div style="left:811px;top:849px;line-height:20px;font-size:11px;color:#6f6f6f;white-space:pre;letter-spacing:-0.4px;">FOX</div>
<div style="left:1201px;top:849px;line-height:20px;font-size:11px;color:#6f6f6f;white-space:pre;letter-spacing:-0.9px;">SD-TV</div>
<div style="left:1361px;top:849px;line-height:20px;font-size:11px;color:#6f6f6f;white-space:pre;letter-spacing:0px;">Canal+</div>
<div style="left:1436px;top:849px;line-height:20px;font-size:11px;color:#6f6f6f;white-space:pre;letter-spacing:0px;">Canal +</div>
<div style="left:1507px;top:849px;width:37px;text-align:right;line-height:20px;font-size:11px;color:#6f6f6f;white-space:pre;letter-spacing:-0.3px;">2</div>
<div style="left:1547px;top:849px;width:42px;text-align:right;line-height:20px;font-size:11px;color:#6f6f6f;white-space:pre;letter-spacing:-0.3px;">200</div>
<div style="left:1668px;top:849px;line-height:20px;font-size:11px;color:#6f6f6f;white-space:pre;letter-spacing:-0.3px;">6</div>
<div style="left:1131px;top:852px;width:13px;height:13px;box-sizing:border-box;border:1px solid #b9c9e2;background:#fff"><div style="left:1px;top:1px;width:9px;height:9px;box-sizing:border-box;border:1px solid #c2c2c2;background:#e9e9e9"></div></div>
<div style="left:1171px;top:852px;width:13px;height:13px;box-sizing:border-box;border:1px solid #b9c9e2;background:#fff"><div style="left:1px;top:1px;width:9px;height:9px;box-sizing:border-box;border:1px solid #c2c2c2;background:#e9e9e9"></div></div>
<div style="left:1606px;top:852px;width:13px;height:13px;box-sizing:border-box;border:1px solid #b9c9e2;background:#fff"><div style="left:1px;top:1px;width:9px;height:9px;box-sizing:border-box;border:1px solid #c2c2c2;background:#e9e9e9"></div></div>
<div style="left:1256px;top:852px;width:13px;height:13px;box-sizing:border-box;border:1px solid #b3c6e2;background:#fff"><div style="left:1px;top:1px;width:9px;height:9px;box-sizing:border-box;border:1px solid #5d7aa6;background:linear-gradient(#b6cdeb,#98b6dd)"></div></div>
<div style="left:653px;top:870px;width:86px;text-align:right;line-height:20px;font-size:11px;color:#6f6f6f;white-space:pre;letter-spacing:-0.3px;">32</div>
<div style="left:742px;top:870px;width:62px;text-align:right;line-height:20px;font-size:11px;color:#6f6f6f;white-space:pre;letter-spacing:-0.3px;">32</div>
<div style="left:811px;top:870px;line-height:20px;font-size:11px;color:#6f6f6f;white-space:pre;letter-spacing:-0.4px;">FOX Life</div>
<div style="left:1201px;top:870px;line-height:20px;font-size:11px;color:#6f6f6f;white-space:pre;letter-spacing:-0.9px;">SD-TV</div>
<div style="left:1361px;top:870px;line-height:20px;font-size:11px;color:#6f6f6f;white-space:pre;letter-spacing:0px;">Canal+</div>
<div style="left:1436px;top:870px;line-height:20px;font-size:11px;color:#6f6f6f;white-space:pre;letter-spacing:0px;">Canal +</div>
<div style="left:1507px;top:870px;width:37px;text-align:right;line-height:20px;font-size:11px;color:#6f6f6f;white-space:pre;letter-spacing:-0.3px;">2</div>
<div style="left:1547px;top:870px;width:42px;text-align:right;line-height:20px;font-size:11px;color:#6f6f6f;white-space:pre;letter-spacing:-0.3px;">200</div>
<div style="left:1668px;top:870px;line-height:20px;font-size:11px;color:#6f6f6f;white-space:pre;letter-spacing:-0.3px;">6</div>
<div style="left:1131px;top:873px;width:13px;height:13px;box-sizing:border-box;border:1px solid #b9c9e2;background:#fff"><div style="left:1px;top:1px;width:9px;height:9px;box-sizing:border-box;border:1px solid #c2c2c2;background:#e9e9e9"></div></div>
<div style="left:1171px;top:873px;width:13px;height:13px;box-sizing:border-box;border:1px solid #b9c9e2;background:#fff"><div style="left:1px;top:1px;width:9px;height:9px;box-sizing:border-box;border:1px solid #c2c2c2;background:#e9e9e9"></div></div>
<div style="left:1606px;top:873px;width:13px;height:13px;box-sizing:border-box;border:1px solid #b9c9e2;background:#fff"><div style="left:1px;top:1px;width:9px;height:9px;box-sizing:border-box;border:1px solid #c2c2c2;background:#e9e9e9"></div></div>
<div style="left:1256px;top:873px;width:13px;height:13px;box-sizing:border-box;border:1px solid #b3c6e2;background:#fff"><div style="left:1px;top:1px;width:9px;height:9px;box-sizing:border-box;border:1px solid #5d7aa6;background:linear-gradient(#b6cdeb,#98b6dd)"></div></div>
<div style="left:653px;top:891px;width:86px;text-align:right;line-height:20px;font-size:11px;color:#6f6f6f;white-space:pre;letter-spacing:-0.3px;">33</div>
<div style="left:742px;top:891px;width:62px;text-align:right;line-height:20px;font-size:11px;color:#6f6f6f;white-space:pre;letter-spacing:-0.3px;">33</div>
<div style="left:811px;top:891px;line-height:20px;font-size:11px;color:#6f6f6f;white-space:pre;letter-spacing:-0.4px;">Fox Crime</div>
<div style="left:1201px;top:891px;line-height:20px;font-size:11px;color:#6f6f6f;white-space:pre;letter-spacing:-0.9px;">SD-TV</div>
<div style="left:1361px;top:891px;line-height:20px;font-size:11px;color:#6f6f6f;white-space:pre;letter-spacing:0px;">Canal+</div>
<div style="left:1436px;top:891px;line-height:20px;font-size:11px;color:#6f6f6f;white-space:pre;letter-spacing:0px;">Canal +</div>
<div style="left:1507px;top:891px;width:37px;text-align:right;line-height:20px;font-size:11px;color:#6f6f6f;white-space:pre;letter-spacing:-0.3px;">3</div>
<div style="left:1547px;top:891px;width:42px;text-align:right;line-height:20px;font-size:11px;color:#6f6f6f;white-space:pre;letter-spacing:-0.3px;">200</div>
<div style="left:1668px;top:891px;line-height:20px;font-size:11px;color:#6f6f6f;white-space:pre;letter-spacing:-0.3px;">6</div>
<div style="left:1131px;top:894px;width:13px;height:13px;box-sizing:border-box;border:1px solid #b9c9e2;background:#fff"><div style="left:1px;top:1px;width:9px;height:9px;box-sizing:border-box;border:1px solid #c2c2c2;background:#e9e9e9"></div></div>
<div style="left:1171px;top:894px;width:13px;height:13px;box-sizing:border-box;border:1px solid #b9c9e2;background:#fff"><div style="left:1px;top:1px;width:9px;height:9px;box-sizing:border-box;border:1px solid #c2c2c2;background:#e9e9e9"></div></div>
<div style="left:1606px;top:894px;width:13px;height:13px;box-sizing:border-box;border:1px solid #b9c9e2;background:#fff"><div style="left:1px;top:1px;width:9px;height:9px;box-sizing:border-box;border:1px solid #c2c2c2;background:#e9e9e9"></div></div>
<div style="left:1256px;top:894px;width:13px;height:13px;box-sizing:border-box;border:1px solid #b3c6e2;background:#fff"><div style="left:1px;top:1px;width:9px;height:9px;box-sizing:border-box;border:1px solid #5d7aa6;background:linear-gradient(#b6cdeb,#98b6dd)"></div></div>
<div style="left:653px;top:912px;width:86px;text-align:right;line-height:20px;font-size:11px;color:#6f6f6f;white-space:pre;letter-spacing:-0.3px;">34</div>
<div style="left:742px;top:912px;width:62px;text-align:right;line-height:20px;font-size:11px;color:#6f6f6f;white-space:pre;letter-spacing:-0.3px;">34</div>
<div style="left:811px;top:912px;line-height:20px;font-size:11px;color:#6f6f6f;white-space:pre;letter-spacing:-0.4px;">TB Европа</div>
<div style="left:1201px;top:912px;line-height:20px;font-size:11px;color:#6f6f6f;white-space:pre;letter-spacing:-0.9px;">SD-TV</div>
<div style="left:1361px;top:912px;line-height:20px;font-size:11px;color:#6f6f6f;white-space:pre;letter-spacing:0px;">Canal+</div>
<div style="left:1436px;top:912px;line-height:20px;font-size:11px;color:#6f6f6f;white-space:pre;letter-spacing:0px;">Canal +</div>
<div style="left:1507px;top:912px;width:37px;text-align:right;line-height:20px;font-size:11px;color:#6f6f6f;white-space:pre;letter-spacing:-0.3px;">3</div>
<div style="left:1547px;top:912px;width:42px;text-align:right;line-height:20px;font-size:11px;color:#6f6f6f;white-space:pre;letter-spacing:-0.3px;">200</div>
<div style="left:1668px;top:912px;line-height:20px;font-size:11px;color:#6f6f6f;white-space:pre;letter-spacing:-0.3px;">6</div>
<div style="left:1131px;top:915px;width:13px;height:13px;box-sizing:border-box;border:1px solid #b9c9e2;background:#fff"><div style="left:1px;top:1px;width:9px;height:9px;box-sizing:border-box;border:1px solid #c2c2c2;background:#e9e9e9"></div></div>
<div style="left:1171px;top:915px;width:13px;height:13px;box-sizing:border-box;border:1px solid #b9c9e2;background:#fff"><div style="left:1px;top:1px;width:9px;height:9px;box-sizing:border-box;border:1px solid #c2c2c2;background:#e9e9e9"></div></div>
<div style="left:1606px;top:915px;width:13px;height:13px;box-sizing:border-box;border:1px solid #b9c9e2;background:#fff"><div style="left:1px;top:1px;width:9px;height:9px;box-sizing:border-box;border:1px solid #c2c2c2;background:#e9e9e9"></div></div>
<div style="left:1256px;top:915px;width:13px;height:13px;box-sizing:border-box;border:1px solid #b3c6e2;background:#fff"><div style="left:1px;top:1px;width:9px;height:9px;box-sizing:border-box;border:1px solid #5d7aa6;background:linear-gradient(#b6cdeb,#98b6dd)"></div></div>
<div style="left:653px;top:933px;width:86px;text-align:right;line-height:20px;font-size:11px;color:#6f6f6f;white-space:pre;letter-spacing:-0.3px;">35</div>
<div style="left:742px;top:933px;width:62px;text-align:right;line-height:20px;font-size:11px;color:#6f6f6f;white-space:pre;letter-spacing:-0.3px;">35</div>
<div style="left:811px;top:933px;line-height:20px;font-size:11px;color:#6f6f6f;white-space:pre;letter-spacing:-0.4px;">bTV Lady</div>
<div style="left:1201px;top:933px;line-height:20px;font-size:11px;color:#6f6f6f;white-space:pre;letter-spacing:-0.9px;">SD-TV</div>
<div style="left:1361px;top:933px;line-height:20px;font-size:11px;color:#6f6f6f;white-space:pre;letter-spacing:0px;">Canal+</div>
<div style="left:1436px;top:933px;line-height:20px;font-size:11px;color:#6f6f6f;white-space:pre;letter-spacing:0px;">Canal +</div>
<div style="left:1507px;top:933px;width:37px;text-align:right;line-height:20px;font-size:11px;color:#6f6f6f;white-space:pre;letter-spacing:-0.3px;">3</div>
<div style="left:1547px;top:933px;width:42px;text-align:right;line-height:20px;font-size:11px;color:#6f6f6f;white-space:pre;letter-spacing:-0.3px;">200</div>
<div style="left:1668px;top:933px;line-height:20px;font-size:11px;color:#6f6f6f;white-space:pre;letter-spacing:-0.3px;">6</div>
<div style="left:1131px;top:936px;width:13px;height:13px;box-sizing:border-box;border:1px solid #b9c9e2;background:#fff"><div style="left:1px;top:1px;width:9px;height:9px;box-sizing:border-box;border:1px solid #c2c2c2;background:#e9e9e9"></div></div>
<div style="left:1171px;top:936px;width:13px;height:13px;box-sizing:border-box;border:1px solid #b9c9e2;background:#fff"><div style="left:1px;top:1px;width:9px;height:9px;box-sizing:border-box;border:1px solid #c2c2c2;background:#e9e9e9"></div></div>
<div style="left:1606px;top:936px;width:13px;height:13px;box-sizing:border-box;border:1px solid #b9c9e2;background:#fff"><div style="left:1px;top:1px;width:9px;height:9px;box-sizing:border-box;border:1px solid #c2c2c2;background:#e9e9e9"></div></div>
<div style="left:1256px;top:936px;width:13px;height:13px;box-sizing:border-box;border:1px solid #b3c6e2;background:#fff"><div style="left:1px;top:1px;width:9px;height:9px;box-sizing:border-box;border:1px solid #5d7aa6;background:linear-gradient(#b6cdeb,#98b6dd)"></div></div>
<div style="left:1131px;top:957px;width:13px;height:13px;box-sizing:border-box;border:1px solid #b9c9e2;background:#fff"><div style="left:1px;top:1px;width:9px;height:9px;box-sizing:border-box;border:1px solid #c2c2c2;background:#e9e9e9"></div></div>
<div style="left:1171px;top:957px;width:13px;height:13px;box-sizing:border-box;border:1px solid #b9c9e2;background:#fff"><div style="left:1px;top:1px;width:9px;height:9px;box-sizing:border-box;border:1px solid #c2c2c2;background:#e9e9e9"></div></div>
<div style="left:1606px;top:957px;width:13px;height:13px;box-sizing:border-box;border:1px solid #b9c9e2;background:#fff"><div style="left:1px;top:1px;width:9px;height:9px;box-sizing:border-box;border:1px solid #c2c2c2;background:#e9e9e9"></div></div>
<div style="left:1256px;top:957px;width:13px;height:13px;box-sizing:border-box;border:1px solid #b3c6e2;background:#fff"><div style="left:1px;top:1px;width:9px;height:9px;box-sizing:border-box;border:1px solid #5d7aa6;background:linear-gradient(#b6cdeb,#98b6dd)"></div></div>
<svg style="left:642px;top:199px" width="7" height="9" viewBox="0 0 7 9"><ellipse cx="3.5" cy="2.6" rx="2.6" ry="2.1" fill="none" stroke="#000" stroke-width="1.4"/><path d="M1 3.2 L3 5 V8.6 H4 V5 L6 3.2" fill="#000"/></svg>
<div style="left:1063px;top:345px;width:37px;height:20px;background:#fff;border:1px dotted #000;box-sizing:border-box"></div>
<div style="left:1067px;top:348px;width:1px;height:13px;background:#000"></div>
<div style="left:1100px;top:345px;width:17px;height:20px;background:linear-gradient(#e8eff8,#cfdcec);border:1px solid #8ba0bd;box-sizing:border-box"></div>
<svg style="left:1105px;top:353px" width="7" height="4" viewBox="0 0 7 4"><path d="M0 0 H7 L3.5 4Z" fill="#4a5a80"/></svg>
<svg style="left:641px;top:349px" width="9" height="13" viewBox="0 0 9 13"><path d="M1 11.5 L1.3 8.5 L5.5 1.2 Q6.5 0.3 7.4 1 Q8.2 1.8 7.5 2.8 L3.3 10.5 Z" fill="none" stroke="#000" stroke-width="1.1"/><rect x="4.5" y="11" width="1" height="1" fill="#000"/><rect x="7" y="11" width="1" height="1" fill="#000"/></svg>
<svg style="left:0;top:0" width="0" height="0"><defs>
<linearGradient id="gFold" x1="0" y1="0" x2="0" y2="1"><stop offset="0" stop-color="#fff3b0"/><stop offset="1" stop-color="#e9a91f"/></linearGradient>
<linearGradient id="gFold2" x1="0" y1="0" x2="0" y2="1"><stop offset="0" stop-color="#ffe27a"/><stop offset="1" stop-color="#f0a814"/></linearGradient>
<linearGradient id="gBlue" x1="0" y1="0" x2="1" y2="1"><stop offset="0" stop-color="#5aa6f0"/><stop offset="1" stop-color="#1a5fc8"/></linearGradient>
<linearGradient id="gStar" x1="0" y1="0" x2="0" y2="1"><stop offset="0" stop-color="#fff6d0"/><stop offset=".6" stop-color="#ffd23a"/><stop offset="1" stop-color="#f5a800"/></linearGradient>
<linearGradient id="gLock" x1="0" y1="0" x2="0" y2="1"><stop offset="0" stop-color="#f8e19a"/><stop offset="1" stop-color="#d9a440"/></linearGradient>
<linearGradient id="gGreen" x1="0" y1="0" x2="1" y2="0"><stop offset="0" stop-color="#36c42c"/><stop offset=".5" stop-color="#a8f090"/><stop offset="1" stop-color="#36c42c"/></linearGradient>
<radialGradient id="gPlus" cx=".4" cy=".35" r=".7"><stop offset="0" stop-color="#5cc55a"/><stop offset="1" stop-color="#1b6d1e"/></radialGradient>
<linearGradient id="gFunnel" x1="0" y1="0" x2="0" y2="1"><stop offset="0" stop-color="#6fc0ee"/><stop offset="1" stop-color="#2178c4"/></linearGradient>
<radialGradient id="gHelp" cx=".5" cy=".35" r=".7"><stop offset="0" stop-color="#5aa4e8"/><stop offset="1" stop-color="#1d6fcc"/></radialGradient>
<linearGradient id="gPrint" x1="0" y1="0" x2="0" y2="1"><stop offset="0" stop-color="#f4f8fc"/><stop offset="1" stop-color="#7d97b5"/></linearGradient>
</defs></svg>
<svg style="left:44px;top:27px" width="16" height="16" viewBox="0 0 16 16">
<path d="M0.6 4.6 h4.2 l1.4 1.4 h4.4 v8.8 h-10z" fill="#fdf0b8" stroke="#a08c58" stroke-width="1"/>
<path d="M2.6 7.6 h13 l-3 7.2 h-12z" fill="url(#gFold2)" stroke="#8a7040" stroke-width="1"/>
<path d="M0.8 15.4 h11.5" stroke="#1a1a1a" stroke-width="1.1"/>
<path d="M9.6 3.2 q2.6 -3 5.2 0.6" stroke="#3b5a8a" stroke-width="1" fill="none" stroke-dasharray="1.4 .8"/>
<path d="M13 4.2 l2.8 1.4 l0.2 -3.2z" fill="#2b4c88"/></svg>
<svg style="left:78px;top:28px" width="16" height="13" viewBox="0 0 16 13">
<path d="M0.5 4.5 h3 l1 1 h5 v7 h-9z" fill="#ffe000" stroke="#8a7a30" stroke-width="1"/>
<path d="M0.5 12.5 l2.5 -4 h9.5 l-3 4z" fill="#d4a040" stroke="#8a7040" stroke-width="1"/>
<path d="M5.2 9.2 Q6 2.6 11.4 2.4 V0.2 L15.8 3.8 L11.4 7.4 V5.2 Q8 5.2 5.2 9.2Z" fill="#0a4ab8" stroke="#e8f0ff" stroke-width=".7"/></svg>
<svg style="left:113px;top:27px" width="14" height="16" viewBox="0 0 14 16">
<path d="M1.2 9.5 C0.8 4.5 4.5 2.6 8.2 2.8 V0.4 L12.8 4.3 L8.2 8.2 V5.8 C5 5.6 2.8 7 1.2 9.5Z" fill="url(#gBlue)"/>
<path d="M12.8 6.5 C13.2 11.5 9.5 13.4 5.8 13.2 V15.6 L1.2 11.7 L5.8 7.8 V10.2 C9 10.4 11.2 9 12.8 6.5Z" fill="url(#gBlue)"/></svg>
<svg style="left:153px;top:27px" width="16" height="16" viewBox="0 0 16 16">
<rect x="0.75" y="0.75" width="14.5" height="14.5" rx="1.5" fill="#4a78c0" stroke="#2d56a0" stroke-width="1.5"/>
<rect x="2.5" y="1.5" width="11" height="6.5" fill="#f2f2f2"/>
<path d="M3.5 4.5 h9" stroke="#d8d8d8" stroke-width="1"/>
<rect x="3.5" y="9.5" width="9" height="5.5" fill="#e8e8e8" stroke="#555" stroke-width="1"/>
<rect x="5" y="10.5" width="2" height="3.5" fill="#555"/></svg>
<svg style="left:187px;top:27px" width="16" height="16" viewBox="0 0 16 16">
<rect x="0.75" y="0.75" width="14.5" height="14.5" rx="1.5" fill="#4a78c0" stroke="#2d56a0" stroke-width="1.5"/>
<rect x="2.5" y="1.5" width="11" height="6.5" fill="#f2f2f2"/><rect x="1.5" y="1" width="13" height="2.5" fill="#e01010"/>
<path d="M3.5 4.5 h9" stroke="#d8d8d8" stroke-width="1"/>
<rect x="3.5" y="9.5" width="9" height="5.5" fill="#e8e8e8" stroke="#555" stroke-width="1"/>
<rect x="5" y="10.5" width="2" height="3.5" fill="#555"/><path d="M9.5 8.5 l5 -6 l1 1 l-5 6z" fill="#f0b040" stroke="#8a5a10" stroke-width=".6"/></svg>
<svg style="left:221px;top:27px" width="16" height="15" viewBox="0 0 16 15">
<rect x="6.6" y="4.6" width="9" height="9.4" fill="#e4f8fc" stroke="#9a7a2c" stroke-width="1.2"/>
<rect x="8.2" y="10.2" width="6" height="3.3" fill="#d8d8d8" stroke="#555" stroke-width=".7"/>
<path d="M0.8 8.5 Q2 2.6 8 2.6" stroke="#1558d6" stroke-width="2.6" fill="none"/>
<path d="M7.5 -0.3 L12.2 3 L7.5 6.6Z" fill="#1558d6"/></svg>
<svg style="left:261px;top:28px" width="17" height="14" viewBox="0 0 17 14">
<path d="M4 0.5 h9 l1 5 h-11z" fill="#fafcff" stroke="#8a9ab0" stroke-width="1"/>
<path d="M1 6 h15 l0.5 5 h-16z" fill="url(#gPrint)" stroke="#6a809a" stroke-width="1"/>
<rect x="1.5" y="11" width="14" height="2.5" fill="#c8d4e2" stroke="#6a809a" stroke-width="1"/>
<rect x="11" y="8" width="2.5" height="2" fill="#22cc22"/></svg>
<svg style="left:340px;top:28px" width="16" height="15" viewBox="0 0 16 15">
<path d="M8 0.8 L10.1 5.2 15 5.8 11.4 9.1 12.3 14.2 8 11.8 3.7 14.2 4.6 9.1 1 5.8 5.9 5.2Z" fill="url(#gStar)" stroke="#e8a018" stroke-width="1"/></svg>
<svg style="left:375px;top:28px" width="14" height="14" viewBox="0 0 14 14">
<path d="M3.5 6 v-2 a3.5 3.5 0 0 1 7 0 v2" stroke="#b89440" stroke-width="1.8" fill="none"/>
<rect x="1" y="6" width="12" height="7.5" rx="1" fill="url(#gLock)" stroke="#a07a30" stroke-width="1"/>
<path d="M7 8 l-1.6 2 h1 v2 h1.2 v-2 h1z" fill="#2a2a10"/></svg>
<svg style="left:409px;top:28px" width="14" height="14" viewBox="0 0 14 14">
<circle cx="7" cy="7" r="5.8" fill="#e6e6e6" stroke="#d8261c" stroke-width="2.2"/>
<path d="M3 11 L11 3" stroke="#d8261c" stroke-width="2.2"/></svg>
<svg style="left:442px;top:27px" width="15" height="15" viewBox="0 0 15 15">
<circle cx="7.5" cy="7.5" r="7" fill="#3a3a3a" stroke="#111" stroke-width="1"/>
<rect x="2" y="4" width="11" height="3.5" fill="#f5c400"/>
<rect x="3.5" y="5" width="2.5" height="1.5" fill="#5060a0"/><rect x="9" y="5" width="2.5" height="1.5" fill="#5060a0"/>
<path d="M2 8.5 h11" stroke="#222" stroke-width="1"/></svg>
<svg style="left:535px;top:27px" width="16" height="16" viewBox="0 0 16 16">
<path d="M2.5 13.5 L11 5" stroke="#b2b2b2" stroke-width="3"/>
<path d="M8.6 6.4 Q7.6 1.4 11.4 0.6 L11.6 3.4 L13.4 4.6 L15.6 3.2 Q15.6 7.6 10.6 7.4Z" fill="#b2b2b2"/>
<path d="M7.6 8.4 h5.6 l2.4 3.6 l-2.4 3.6 h-5.6 l-2.4 -3.6z" fill="#d2d2d2" stroke="#ababab" stroke-width="1"/>
<circle cx="10.4" cy="12" r="1.5" fill="none" stroke="#a6a6a6" stroke-width="1.1"/>
<path d="M0.2 10.2 L3.4 10 L4.8 12 L3.6 14.4 L0.4 15Z" fill="#b2b2b2"/></svg>
<svg style="left:635px;top:29px" width="15" height="13" viewBox="0 0 15 13">
<path d="M0.5 0.5 h14 v8 h-4 v4 l-3 -4 h-7z" fill="#fff" stroke="#555" stroke-width="1"/></svg>
<svg style="left:800px;top:27px" width="16" height="16" viewBox="0 0 16 16">
<circle cx="8" cy="8" r="7.4" fill="#fff" stroke="#7a7a7a" stroke-width="1.1"/>
<circle cx="8" cy="8" r="6" fill="url(#gHelp)"/>
<path d="M5.8 5.6 q0.4 -2 2.4 -2 q2.2 0 2.2 1.9 q0 1.2 -1.3 1.9 q-1 .6 -1 1.8" stroke="#fff" stroke-width="1.5" fill="none"/>
<circle cx="8" cy="11.8" r=".9" fill="#fff"/></svg>
<svg style="left:13px;top:133px" width="13" height="16" viewBox="0 0 13 16">
<path d="M6.5 0.7 L12.3 6.5 H9 V15.3 H4 V6.5 H0.7Z" fill="url(#gGreen)" stroke="#2cb820" stroke-width="1"/></svg>
<svg style="left:41px;top:133px" width="13" height="16" viewBox="0 0 13 16">
<path d="M6.5 15.3 L12.3 9.5 H9 V0.7 H4 V9.5 H0.7Z" fill="url(#gGreen)" stroke="#2cb820" stroke-width="1"/></svg>
<svg style="left:69px;top:133px" width="16" height="15" viewBox="0 0 16 15">
<path d="M1.5 2 Q5.5 3 8.2 7.5 Q10 11 11.8 13.8" stroke="#d92a1f" stroke-width="2" fill="none" stroke-linecap="round"/>
<path d="M14.8 1 Q10 3.5 7 8 Q5 11 3.6 14" stroke="#d92a1f" stroke-width="2.4" fill="none" stroke-linecap="round"/></svg>
<svg style="left:103px;top:133px" width="16" height="16" viewBox="0 0 16 16">
<circle cx="4.5" cy="4" r="4" fill="#10c010"/><circle cx="4.5" cy="11.8" r="4" fill="#10c010"/>
<text x="4.5" y="7.3" font-family="Liberation Sans" font-weight="bold" font-size="8.5" text-anchor="middle" fill="#000">1</text>
<text x="4.5" y="15" font-family="Liberation Sans" font-weight="bold" font-size="8.5" text-anchor="middle" fill="#000">2</text>
<path d="M12 0.5 V13" stroke="#000" stroke-width="1.6"/><path d="M9.3 10 L12 15.5 L14.7 10Z" fill="#000"/></svg>
<svg style="left:264px;top:134px" width="14" height="14" viewBox="0 0 14 14">
<path d="M3.5 6 v-2 a3.5 3.5 0 0 1 7 0 v2" stroke="#b89440" stroke-width="1.8" fill="none"/>
<rect x="1" y="6" width="12" height="7.5" rx="1" fill="url(#gLock)" stroke="#a07a30" stroke-width="1"/>
<path d="M7 8 l-1.6 2 h1 v2 h1.2 v-2 h1z" fill="#2a2a10"/></svg>
<svg style="left:301px;top:132px" width="16" height="15" viewBox="0 0 16 15">
<ellipse cx="7" cy="2" rx="6.5" ry="1.6" fill="#9ad4f4"/>
<path d="M0.5 2 h13 l-4.5 6 v6.5 l-4 -2 v-4.5z" fill="url(#gFunnel)"/>
<circle cx="11.5" cy="10.8" r="3.8" fill="#e03020" stroke="#fff" stroke-width=".5"/>
<path d="M9.5 10.8 h4" stroke="#fff" stroke-width="1.4"/></svg>
<svg style="left:840px;top:133px" width="16" height="15" viewBox="0 0 16 15">
<ellipse cx="7" cy="2" rx="6.5" ry="1.6" fill="#9ad4f4"/>
<path d="M0.5 2 h13 l-4.5 6 v6.5 l-4 -2 v-4.5z" fill="url(#gFunnel)"/>
<circle cx="11.5" cy="10.8" r="3.8" fill="#e03020" stroke="#fff" stroke-width=".5"/>
<path d="M9.5 10.8 h4" stroke="#fff" stroke-width="1.4"/></svg>
<svg style="left:646px;top:133px" width="17" height="17" viewBox="0 0 17 17">
<circle cx="8.5" cy="8.5" r="7.5" fill="url(#gPlus)"/>
<path d="M8.5 4.5 v8 M4.5 8.5 h8" stroke="#fff" stroke-width="2.2"/></svg>
<svg style="left:675px;top:133px" width="16" height="15" viewBox="0 0 16 15">
<path d="M1.5 2 Q5.5 3 8.2 7.5 Q10 11 11.8 13.8" stroke="#d92a1f" stroke-width="2" fill="none" stroke-linecap="round"/>
<path d="M14.8 1 Q10 3.5 7 8 Q5 11 3.6 14" stroke="#d92a1f" stroke-width="2.4" fill="none" stroke-linecap="round"/></svg>
</body></html>
